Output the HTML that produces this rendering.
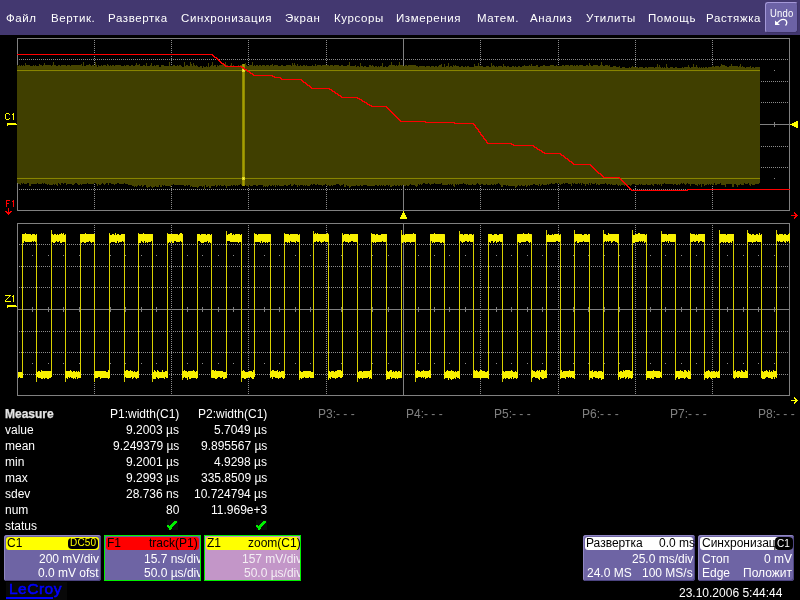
<!DOCTYPE html>
<html><head><meta charset="utf-8"><style>
html,body{margin:0;padding:0;background:#000;width:800px;height:600px;overflow:hidden;font-family:"Liberation Sans",sans-serif;}
.a{position:absolute;white-space:pre;line-height:1;will-change:transform}
#menu{position:absolute;left:0;top:0;width:800px;height:35px;background:#433870;}
.m{will-change:transform;position:absolute;top:13px;color:#fff;font-size:11.5px;letter-spacing:0.6px;white-space:pre;line-height:1}
#undo{position:absolute;left:765px;top:2px;width:31px;height:29px;border-radius:3px;background:#6c62a6;border-left:1px solid #a498d8;border-top:1px solid #a498d8;border-right:1px solid #3c3266;border-bottom:1px solid #3c3266;}
svg{position:absolute;left:0;top:0;}
.t{will-change:transform;position:absolute;font-size:12px;color:#fff;white-space:pre;line-height:1}
.r{text-align:right}
.g{color:#808080}
.box{position:absolute;top:535px;height:46px;border-radius:3px;background:#6e64a4;overflow:hidden;box-shadow:inset 1px 1px 0 #8f86c2,inset -1px -1px 0 #4c4480}
.box.sq{border-radius:0;}
.gb{position:absolute;left:0;top:0;right:0;bottom:0;box-shadow:inset 0 0 0 1px #00f000}
.hd{position:absolute;top:2px;height:13px;border-radius:3px;}
.badge{position:absolute;top:3px;height:11px;border-radius:4px;}
</style></head><body>
<div id="menu">
<span class="m" style="left:6px">Файл</span>
<span class="m" style="left:51px">Вертик.</span>
<span class="m" style="left:108px">Развертка</span>
<span class="m" style="left:181px">Синхронизация</span>
<span class="m" style="left:285px">Экран</span>
<span class="m" style="left:334px">Курсоры</span>
<span class="m" style="left:396px">Измерения</span>
<span class="m" style="left:477px">Матем.</span>
<span class="m" style="left:530px">Анализ</span>
<span class="m" style="left:586px">Утилиты</span>
<span class="m" style="left:648px">Помощь</span>
<span class="m" style="left:706px">Растяжка</span>
<div id="undo"></div><div class="a" style="left:770px;top:7.6px;font-size:9.5px;color:#fff;letter-spacing:0.2px;transform:scaleY(1.14);transform-origin:0 0">Undo</div>
<svg width="800" height="40" style="position:absolute;left:0;top:0"><path d="M775 25L775 20.5L780 25Z" fill="#fff"/><path d="M776.5 23.5L780 20.5Q783 18.5 785.5 20Q788 22.5 785.5 25.5" stroke="#fff" stroke-width="1.3" fill="none"/></svg>
</div>
<svg width="800" height="600" viewBox="0 0 800 600" shape-rendering="crispEdges">
<path d="M19 59h1v1h-1zM21 59h1v1h-1zM23 59h1v1h-1zM25 59h1v1h-1zM27 59h1v1h-1zM29 59h1v1h-1zM31 59h1v1h-1zM33 59h1v1h-1zM35 59h1v1h-1zM37 59h1v1h-1zM39 59h1v1h-1zM41 59h1v1h-1zM43 59h1v1h-1zM45 59h1v1h-1zM47 59h1v1h-1zM49 59h1v1h-1zM51 59h1v1h-1zM53 59h1v1h-1zM55 59h1v1h-1zM57 59h1v1h-1zM59 59h1v1h-1zM61 59h1v1h-1zM63 59h1v1h-1zM65 59h1v1h-1zM67 59h1v1h-1zM69 59h1v1h-1zM71 59h1v1h-1zM73 59h1v1h-1zM75 59h1v1h-1zM77 59h1v1h-1zM79 59h1v1h-1zM81 59h1v1h-1zM83 59h1v1h-1zM85 59h1v1h-1zM87 59h1v1h-1zM89 59h1v1h-1zM91 59h1v1h-1zM93 59h1v1h-1zM95 59h1v1h-1zM97 59h1v1h-1zM99 59h1v1h-1zM101 59h1v1h-1zM103 59h1v1h-1zM105 59h1v1h-1zM107 59h1v1h-1zM109 59h1v1h-1zM111 59h1v1h-1zM113 59h1v1h-1zM115 59h1v1h-1zM117 59h1v1h-1zM119 59h1v1h-1zM121 59h1v1h-1zM123 59h1v1h-1zM125 59h1v1h-1zM127 59h1v1h-1zM129 59h1v1h-1zM131 59h1v1h-1zM133 59h1v1h-1zM135 59h1v1h-1zM137 59h1v1h-1zM139 59h1v1h-1zM141 59h1v1h-1zM143 59h1v1h-1zM145 59h1v1h-1zM147 59h1v1h-1zM149 59h1v1h-1zM151 59h1v1h-1zM153 59h1v1h-1zM155 59h1v1h-1zM157 59h1v1h-1zM159 59h1v1h-1zM161 59h1v1h-1zM163 59h1v1h-1zM165 59h1v1h-1zM167 59h1v1h-1zM169 59h1v1h-1zM171 59h1v1h-1zM173 59h1v1h-1zM175 59h1v1h-1zM177 59h1v1h-1zM179 59h1v1h-1zM181 59h1v1h-1zM183 59h1v1h-1zM185 59h1v1h-1zM187 59h1v1h-1zM189 59h1v1h-1zM191 59h1v1h-1zM193 59h1v1h-1zM195 59h1v1h-1zM197 59h1v1h-1zM199 59h1v1h-1zM201 59h1v1h-1zM203 59h1v1h-1zM205 59h1v1h-1zM207 59h1v1h-1zM209 59h1v1h-1zM211 59h1v1h-1zM213 59h1v1h-1zM215 59h1v1h-1zM217 59h1v1h-1zM219 59h1v1h-1zM221 59h1v1h-1zM223 59h1v1h-1zM225 59h1v1h-1zM227 59h1v1h-1zM229 59h1v1h-1zM231 59h1v1h-1zM233 59h1v1h-1zM235 59h1v1h-1zM237 59h1v1h-1zM239 59h1v1h-1zM241 59h1v1h-1zM243 59h1v1h-1zM245 59h1v1h-1zM247 59h1v1h-1zM249 59h1v1h-1zM251 59h1v1h-1zM253 59h1v1h-1zM255 59h1v1h-1zM257 59h1v1h-1zM259 59h1v1h-1zM261 59h1v1h-1zM263 59h1v1h-1zM265 59h1v1h-1zM267 59h1v1h-1zM269 59h1v1h-1zM271 59h1v1h-1zM273 59h1v1h-1zM275 59h1v1h-1zM277 59h1v1h-1zM279 59h1v1h-1zM281 59h1v1h-1zM283 59h1v1h-1zM285 59h1v1h-1zM287 59h1v1h-1zM289 59h1v1h-1zM291 59h1v1h-1zM293 59h1v1h-1zM295 59h1v1h-1zM297 59h1v1h-1zM299 59h1v1h-1zM301 59h1v1h-1zM303 59h1v1h-1zM305 59h1v1h-1zM307 59h1v1h-1zM309 59h1v1h-1zM311 59h1v1h-1zM313 59h1v1h-1zM315 59h1v1h-1zM317 59h1v1h-1zM319 59h1v1h-1zM321 59h1v1h-1zM323 59h1v1h-1zM325 59h1v1h-1zM327 59h1v1h-1zM329 59h1v1h-1zM331 59h1v1h-1zM333 59h1v1h-1zM335 59h1v1h-1zM337 59h1v1h-1zM339 59h1v1h-1zM341 59h1v1h-1zM343 59h1v1h-1zM345 59h1v1h-1zM347 59h1v1h-1zM349 59h1v1h-1zM351 59h1v1h-1zM353 59h1v1h-1zM355 59h1v1h-1zM357 59h1v1h-1zM359 59h1v1h-1zM361 59h1v1h-1zM363 59h1v1h-1zM365 59h1v1h-1zM367 59h1v1h-1zM369 59h1v1h-1zM371 59h1v1h-1zM373 59h1v1h-1zM375 59h1v1h-1zM377 59h1v1h-1zM379 59h1v1h-1zM381 59h1v1h-1zM383 59h1v1h-1zM385 59h1v1h-1zM387 59h1v1h-1zM389 59h1v1h-1zM391 59h1v1h-1zM393 59h1v1h-1zM395 59h1v1h-1zM397 59h1v1h-1zM399 59h1v1h-1zM401 59h1v1h-1zM403 59h1v1h-1zM405 59h1v1h-1zM407 59h1v1h-1zM409 59h1v1h-1zM411 59h1v1h-1zM413 59h1v1h-1zM415 59h1v1h-1zM417 59h1v1h-1zM419 59h1v1h-1zM421 59h1v1h-1zM423 59h1v1h-1zM425 59h1v1h-1zM427 59h1v1h-1zM429 59h1v1h-1zM431 59h1v1h-1zM433 59h1v1h-1zM435 59h1v1h-1zM437 59h1v1h-1zM439 59h1v1h-1zM441 59h1v1h-1zM443 59h1v1h-1zM445 59h1v1h-1zM447 59h1v1h-1zM449 59h1v1h-1zM451 59h1v1h-1zM453 59h1v1h-1zM455 59h1v1h-1zM457 59h1v1h-1zM459 59h1v1h-1zM461 59h1v1h-1zM463 59h1v1h-1zM465 59h1v1h-1zM467 59h1v1h-1zM469 59h1v1h-1zM471 59h1v1h-1zM473 59h1v1h-1zM475 59h1v1h-1zM477 59h1v1h-1zM479 59h1v1h-1zM481 59h1v1h-1zM483 59h1v1h-1zM485 59h1v1h-1zM487 59h1v1h-1zM489 59h1v1h-1zM491 59h1v1h-1zM493 59h1v1h-1zM495 59h1v1h-1zM497 59h1v1h-1zM499 59h1v1h-1zM501 59h1v1h-1zM503 59h1v1h-1zM505 59h1v1h-1zM507 59h1v1h-1zM509 59h1v1h-1zM511 59h1v1h-1zM513 59h1v1h-1zM515 59h1v1h-1zM517 59h1v1h-1zM519 59h1v1h-1zM521 59h1v1h-1zM523 59h1v1h-1zM525 59h1v1h-1zM527 59h1v1h-1zM529 59h1v1h-1zM531 59h1v1h-1zM533 59h1v1h-1zM535 59h1v1h-1zM537 59h1v1h-1zM539 59h1v1h-1zM541 59h1v1h-1zM543 59h1v1h-1zM545 59h1v1h-1zM547 59h1v1h-1zM549 59h1v1h-1zM551 59h1v1h-1zM553 59h1v1h-1zM555 59h1v1h-1zM557 59h1v1h-1zM559 59h1v1h-1zM561 59h1v1h-1zM563 59h1v1h-1zM565 59h1v1h-1zM567 59h1v1h-1zM569 59h1v1h-1zM571 59h1v1h-1zM573 59h1v1h-1zM575 59h1v1h-1zM577 59h1v1h-1zM579 59h1v1h-1zM581 59h1v1h-1zM583 59h1v1h-1zM585 59h1v1h-1zM587 59h1v1h-1zM589 59h1v1h-1zM591 59h1v1h-1zM593 59h1v1h-1zM595 59h1v1h-1zM597 59h1v1h-1zM599 59h1v1h-1zM601 59h1v1h-1zM603 59h1v1h-1zM605 59h1v1h-1zM607 59h1v1h-1zM609 59h1v1h-1zM611 59h1v1h-1zM613 59h1v1h-1zM615 59h1v1h-1zM617 59h1v1h-1zM619 59h1v1h-1zM621 59h1v1h-1zM623 59h1v1h-1zM625 59h1v1h-1zM627 59h1v1h-1zM629 59h1v1h-1zM631 59h1v1h-1zM633 59h1v1h-1zM635 59h1v1h-1zM637 59h1v1h-1zM639 59h1v1h-1zM641 59h1v1h-1zM643 59h1v1h-1zM645 59h1v1h-1zM647 59h1v1h-1zM649 59h1v1h-1zM651 59h1v1h-1zM653 59h1v1h-1zM655 59h1v1h-1zM657 59h1v1h-1zM659 59h1v1h-1zM661 59h1v1h-1zM663 59h1v1h-1zM665 59h1v1h-1zM667 59h1v1h-1zM669 59h1v1h-1zM671 59h1v1h-1zM673 59h1v1h-1zM675 59h1v1h-1zM677 59h1v1h-1zM679 59h1v1h-1zM681 59h1v1h-1zM683 59h1v1h-1zM685 59h1v1h-1zM687 59h1v1h-1zM689 59h1v1h-1zM691 59h1v1h-1zM693 59h1v1h-1zM695 59h1v1h-1zM697 59h1v1h-1zM699 59h1v1h-1zM701 59h1v1h-1zM703 59h1v1h-1zM705 59h1v1h-1zM707 59h1v1h-1zM709 59h1v1h-1zM711 59h1v1h-1zM713 59h1v1h-1zM715 59h1v1h-1zM717 59h1v1h-1zM719 59h1v1h-1zM721 59h1v1h-1zM723 59h1v1h-1zM725 59h1v1h-1zM727 59h1v1h-1zM729 59h1v1h-1zM731 59h1v1h-1zM733 59h1v1h-1zM735 59h1v1h-1zM737 59h1v1h-1zM739 59h1v1h-1zM741 59h1v1h-1zM743 59h1v1h-1zM745 59h1v1h-1zM747 59h1v1h-1zM749 59h1v1h-1zM751 59h1v1h-1zM753 59h1v1h-1zM755 59h1v1h-1zM757 59h1v1h-1zM759 59h1v1h-1zM761 59h1v1h-1zM763 59h1v1h-1zM765 59h1v1h-1zM767 59h1v1h-1zM769 59h1v1h-1zM771 59h1v1h-1zM773 59h1v1h-1zM775 59h1v1h-1zM777 59h1v1h-1zM779 59h1v1h-1zM781 59h1v1h-1zM783 59h1v1h-1zM785 59h1v1h-1zM787 59h1v1h-1zM19 81h1v1h-1zM21 81h1v1h-1zM23 81h1v1h-1zM25 81h1v1h-1zM27 81h1v1h-1zM29 81h1v1h-1zM31 81h1v1h-1zM33 81h1v1h-1zM35 81h1v1h-1zM37 81h1v1h-1zM39 81h1v1h-1zM41 81h1v1h-1zM43 81h1v1h-1zM45 81h1v1h-1zM47 81h1v1h-1zM49 81h1v1h-1zM51 81h1v1h-1zM53 81h1v1h-1zM55 81h1v1h-1zM57 81h1v1h-1zM59 81h1v1h-1zM61 81h1v1h-1zM63 81h1v1h-1zM65 81h1v1h-1zM67 81h1v1h-1zM69 81h1v1h-1zM71 81h1v1h-1zM73 81h1v1h-1zM75 81h1v1h-1zM77 81h1v1h-1zM79 81h1v1h-1zM81 81h1v1h-1zM83 81h1v1h-1zM85 81h1v1h-1zM87 81h1v1h-1zM89 81h1v1h-1zM91 81h1v1h-1zM93 81h1v1h-1zM95 81h1v1h-1zM97 81h1v1h-1zM99 81h1v1h-1zM101 81h1v1h-1zM103 81h1v1h-1zM105 81h1v1h-1zM107 81h1v1h-1zM109 81h1v1h-1zM111 81h1v1h-1zM113 81h1v1h-1zM115 81h1v1h-1zM117 81h1v1h-1zM119 81h1v1h-1zM121 81h1v1h-1zM123 81h1v1h-1zM125 81h1v1h-1zM127 81h1v1h-1zM129 81h1v1h-1zM131 81h1v1h-1zM133 81h1v1h-1zM135 81h1v1h-1zM137 81h1v1h-1zM139 81h1v1h-1zM141 81h1v1h-1zM143 81h1v1h-1zM145 81h1v1h-1zM147 81h1v1h-1zM149 81h1v1h-1zM151 81h1v1h-1zM153 81h1v1h-1zM155 81h1v1h-1zM157 81h1v1h-1zM159 81h1v1h-1zM161 81h1v1h-1zM163 81h1v1h-1zM165 81h1v1h-1zM167 81h1v1h-1zM169 81h1v1h-1zM171 81h1v1h-1zM173 81h1v1h-1zM175 81h1v1h-1zM177 81h1v1h-1zM179 81h1v1h-1zM181 81h1v1h-1zM183 81h1v1h-1zM185 81h1v1h-1zM187 81h1v1h-1zM189 81h1v1h-1zM191 81h1v1h-1zM193 81h1v1h-1zM195 81h1v1h-1zM197 81h1v1h-1zM199 81h1v1h-1zM201 81h1v1h-1zM203 81h1v1h-1zM205 81h1v1h-1zM207 81h1v1h-1zM209 81h1v1h-1zM211 81h1v1h-1zM213 81h1v1h-1zM215 81h1v1h-1zM217 81h1v1h-1zM219 81h1v1h-1zM221 81h1v1h-1zM223 81h1v1h-1zM225 81h1v1h-1zM227 81h1v1h-1zM229 81h1v1h-1zM231 81h1v1h-1zM233 81h1v1h-1zM235 81h1v1h-1zM237 81h1v1h-1zM239 81h1v1h-1zM241 81h1v1h-1zM243 81h1v1h-1zM245 81h1v1h-1zM247 81h1v1h-1zM249 81h1v1h-1zM251 81h1v1h-1zM253 81h1v1h-1zM255 81h1v1h-1zM257 81h1v1h-1zM259 81h1v1h-1zM261 81h1v1h-1zM263 81h1v1h-1zM265 81h1v1h-1zM267 81h1v1h-1zM269 81h1v1h-1zM271 81h1v1h-1zM273 81h1v1h-1zM275 81h1v1h-1zM277 81h1v1h-1zM279 81h1v1h-1zM281 81h1v1h-1zM283 81h1v1h-1zM285 81h1v1h-1zM287 81h1v1h-1zM289 81h1v1h-1zM291 81h1v1h-1zM293 81h1v1h-1zM295 81h1v1h-1zM297 81h1v1h-1zM299 81h1v1h-1zM301 81h1v1h-1zM303 81h1v1h-1zM305 81h1v1h-1zM307 81h1v1h-1zM309 81h1v1h-1zM311 81h1v1h-1zM313 81h1v1h-1zM315 81h1v1h-1zM317 81h1v1h-1zM319 81h1v1h-1zM321 81h1v1h-1zM323 81h1v1h-1zM325 81h1v1h-1zM327 81h1v1h-1zM329 81h1v1h-1zM331 81h1v1h-1zM333 81h1v1h-1zM335 81h1v1h-1zM337 81h1v1h-1zM339 81h1v1h-1zM341 81h1v1h-1zM343 81h1v1h-1zM345 81h1v1h-1zM347 81h1v1h-1zM349 81h1v1h-1zM351 81h1v1h-1zM353 81h1v1h-1zM355 81h1v1h-1zM357 81h1v1h-1zM359 81h1v1h-1zM361 81h1v1h-1zM363 81h1v1h-1zM365 81h1v1h-1zM367 81h1v1h-1zM369 81h1v1h-1zM371 81h1v1h-1zM373 81h1v1h-1zM375 81h1v1h-1zM377 81h1v1h-1zM379 81h1v1h-1zM381 81h1v1h-1zM383 81h1v1h-1zM385 81h1v1h-1zM387 81h1v1h-1zM389 81h1v1h-1zM391 81h1v1h-1zM393 81h1v1h-1zM395 81h1v1h-1zM397 81h1v1h-1zM399 81h1v1h-1zM401 81h1v1h-1zM403 81h1v1h-1zM405 81h1v1h-1zM407 81h1v1h-1zM409 81h1v1h-1zM411 81h1v1h-1zM413 81h1v1h-1zM415 81h1v1h-1zM417 81h1v1h-1zM419 81h1v1h-1zM421 81h1v1h-1zM423 81h1v1h-1zM425 81h1v1h-1zM427 81h1v1h-1zM429 81h1v1h-1zM431 81h1v1h-1zM433 81h1v1h-1zM435 81h1v1h-1zM437 81h1v1h-1zM439 81h1v1h-1zM441 81h1v1h-1zM443 81h1v1h-1zM445 81h1v1h-1zM447 81h1v1h-1zM449 81h1v1h-1zM451 81h1v1h-1zM453 81h1v1h-1zM455 81h1v1h-1zM457 81h1v1h-1zM459 81h1v1h-1zM461 81h1v1h-1zM463 81h1v1h-1zM465 81h1v1h-1zM467 81h1v1h-1zM469 81h1v1h-1zM471 81h1v1h-1zM473 81h1v1h-1zM475 81h1v1h-1zM477 81h1v1h-1zM479 81h1v1h-1zM481 81h1v1h-1zM483 81h1v1h-1zM485 81h1v1h-1zM487 81h1v1h-1zM489 81h1v1h-1zM491 81h1v1h-1zM493 81h1v1h-1zM495 81h1v1h-1zM497 81h1v1h-1zM499 81h1v1h-1zM501 81h1v1h-1zM503 81h1v1h-1zM505 81h1v1h-1zM507 81h1v1h-1zM509 81h1v1h-1zM511 81h1v1h-1zM513 81h1v1h-1zM515 81h1v1h-1zM517 81h1v1h-1zM519 81h1v1h-1zM521 81h1v1h-1zM523 81h1v1h-1zM525 81h1v1h-1zM527 81h1v1h-1zM529 81h1v1h-1zM531 81h1v1h-1zM533 81h1v1h-1zM535 81h1v1h-1zM537 81h1v1h-1zM539 81h1v1h-1zM541 81h1v1h-1zM543 81h1v1h-1zM545 81h1v1h-1zM547 81h1v1h-1zM549 81h1v1h-1zM551 81h1v1h-1zM553 81h1v1h-1zM555 81h1v1h-1zM557 81h1v1h-1zM559 81h1v1h-1zM561 81h1v1h-1zM563 81h1v1h-1zM565 81h1v1h-1zM567 81h1v1h-1zM569 81h1v1h-1zM571 81h1v1h-1zM573 81h1v1h-1zM575 81h1v1h-1zM577 81h1v1h-1zM579 81h1v1h-1zM581 81h1v1h-1zM583 81h1v1h-1zM585 81h1v1h-1zM587 81h1v1h-1zM589 81h1v1h-1zM591 81h1v1h-1zM593 81h1v1h-1zM595 81h1v1h-1zM597 81h1v1h-1zM599 81h1v1h-1zM601 81h1v1h-1zM603 81h1v1h-1zM605 81h1v1h-1zM607 81h1v1h-1zM609 81h1v1h-1zM611 81h1v1h-1zM613 81h1v1h-1zM615 81h1v1h-1zM617 81h1v1h-1zM619 81h1v1h-1zM621 81h1v1h-1zM623 81h1v1h-1zM625 81h1v1h-1zM627 81h1v1h-1zM629 81h1v1h-1zM631 81h1v1h-1zM633 81h1v1h-1zM635 81h1v1h-1zM637 81h1v1h-1zM639 81h1v1h-1zM641 81h1v1h-1zM643 81h1v1h-1zM645 81h1v1h-1zM647 81h1v1h-1zM649 81h1v1h-1zM651 81h1v1h-1zM653 81h1v1h-1zM655 81h1v1h-1zM657 81h1v1h-1zM659 81h1v1h-1zM661 81h1v1h-1zM663 81h1v1h-1zM665 81h1v1h-1zM667 81h1v1h-1zM669 81h1v1h-1zM671 81h1v1h-1zM673 81h1v1h-1zM675 81h1v1h-1zM677 81h1v1h-1zM679 81h1v1h-1zM681 81h1v1h-1zM683 81h1v1h-1zM685 81h1v1h-1zM687 81h1v1h-1zM689 81h1v1h-1zM691 81h1v1h-1zM693 81h1v1h-1zM695 81h1v1h-1zM697 81h1v1h-1zM699 81h1v1h-1zM701 81h1v1h-1zM703 81h1v1h-1zM705 81h1v1h-1zM707 81h1v1h-1zM709 81h1v1h-1zM711 81h1v1h-1zM713 81h1v1h-1zM715 81h1v1h-1zM717 81h1v1h-1zM719 81h1v1h-1zM721 81h1v1h-1zM723 81h1v1h-1zM725 81h1v1h-1zM727 81h1v1h-1zM729 81h1v1h-1zM731 81h1v1h-1zM733 81h1v1h-1zM735 81h1v1h-1zM737 81h1v1h-1zM739 81h1v1h-1zM741 81h1v1h-1zM743 81h1v1h-1zM745 81h1v1h-1zM747 81h1v1h-1zM749 81h1v1h-1zM751 81h1v1h-1zM753 81h1v1h-1zM755 81h1v1h-1zM757 81h1v1h-1zM759 81h1v1h-1zM761 81h1v1h-1zM763 81h1v1h-1zM765 81h1v1h-1zM767 81h1v1h-1zM769 81h1v1h-1zM771 81h1v1h-1zM773 81h1v1h-1zM775 81h1v1h-1zM777 81h1v1h-1zM779 81h1v1h-1zM781 81h1v1h-1zM783 81h1v1h-1zM785 81h1v1h-1zM787 81h1v1h-1zM19 102h1v1h-1zM21 102h1v1h-1zM23 102h1v1h-1zM25 102h1v1h-1zM27 102h1v1h-1zM29 102h1v1h-1zM31 102h1v1h-1zM33 102h1v1h-1zM35 102h1v1h-1zM37 102h1v1h-1zM39 102h1v1h-1zM41 102h1v1h-1zM43 102h1v1h-1zM45 102h1v1h-1zM47 102h1v1h-1zM49 102h1v1h-1zM51 102h1v1h-1zM53 102h1v1h-1zM55 102h1v1h-1zM57 102h1v1h-1zM59 102h1v1h-1zM61 102h1v1h-1zM63 102h1v1h-1zM65 102h1v1h-1zM67 102h1v1h-1zM69 102h1v1h-1zM71 102h1v1h-1zM73 102h1v1h-1zM75 102h1v1h-1zM77 102h1v1h-1zM79 102h1v1h-1zM81 102h1v1h-1zM83 102h1v1h-1zM85 102h1v1h-1zM87 102h1v1h-1zM89 102h1v1h-1zM91 102h1v1h-1zM93 102h1v1h-1zM95 102h1v1h-1zM97 102h1v1h-1zM99 102h1v1h-1zM101 102h1v1h-1zM103 102h1v1h-1zM105 102h1v1h-1zM107 102h1v1h-1zM109 102h1v1h-1zM111 102h1v1h-1zM113 102h1v1h-1zM115 102h1v1h-1zM117 102h1v1h-1zM119 102h1v1h-1zM121 102h1v1h-1zM123 102h1v1h-1zM125 102h1v1h-1zM127 102h1v1h-1zM129 102h1v1h-1zM131 102h1v1h-1zM133 102h1v1h-1zM135 102h1v1h-1zM137 102h1v1h-1zM139 102h1v1h-1zM141 102h1v1h-1zM143 102h1v1h-1zM145 102h1v1h-1zM147 102h1v1h-1zM149 102h1v1h-1zM151 102h1v1h-1zM153 102h1v1h-1zM155 102h1v1h-1zM157 102h1v1h-1zM159 102h1v1h-1zM161 102h1v1h-1zM163 102h1v1h-1zM165 102h1v1h-1zM167 102h1v1h-1zM169 102h1v1h-1zM171 102h1v1h-1zM173 102h1v1h-1zM175 102h1v1h-1zM177 102h1v1h-1zM179 102h1v1h-1zM181 102h1v1h-1zM183 102h1v1h-1zM185 102h1v1h-1zM187 102h1v1h-1zM189 102h1v1h-1zM191 102h1v1h-1zM193 102h1v1h-1zM195 102h1v1h-1zM197 102h1v1h-1zM199 102h1v1h-1zM201 102h1v1h-1zM203 102h1v1h-1zM205 102h1v1h-1zM207 102h1v1h-1zM209 102h1v1h-1zM211 102h1v1h-1zM213 102h1v1h-1zM215 102h1v1h-1zM217 102h1v1h-1zM219 102h1v1h-1zM221 102h1v1h-1zM223 102h1v1h-1zM225 102h1v1h-1zM227 102h1v1h-1zM229 102h1v1h-1zM231 102h1v1h-1zM233 102h1v1h-1zM235 102h1v1h-1zM237 102h1v1h-1zM239 102h1v1h-1zM241 102h1v1h-1zM243 102h1v1h-1zM245 102h1v1h-1zM247 102h1v1h-1zM249 102h1v1h-1zM251 102h1v1h-1zM253 102h1v1h-1zM255 102h1v1h-1zM257 102h1v1h-1zM259 102h1v1h-1zM261 102h1v1h-1zM263 102h1v1h-1zM265 102h1v1h-1zM267 102h1v1h-1zM269 102h1v1h-1zM271 102h1v1h-1zM273 102h1v1h-1zM275 102h1v1h-1zM277 102h1v1h-1zM279 102h1v1h-1zM281 102h1v1h-1zM283 102h1v1h-1zM285 102h1v1h-1zM287 102h1v1h-1zM289 102h1v1h-1zM291 102h1v1h-1zM293 102h1v1h-1zM295 102h1v1h-1zM297 102h1v1h-1zM299 102h1v1h-1zM301 102h1v1h-1zM303 102h1v1h-1zM305 102h1v1h-1zM307 102h1v1h-1zM309 102h1v1h-1zM311 102h1v1h-1zM313 102h1v1h-1zM315 102h1v1h-1zM317 102h1v1h-1zM319 102h1v1h-1zM321 102h1v1h-1zM323 102h1v1h-1zM325 102h1v1h-1zM327 102h1v1h-1zM329 102h1v1h-1zM331 102h1v1h-1zM333 102h1v1h-1zM335 102h1v1h-1zM337 102h1v1h-1zM339 102h1v1h-1zM341 102h1v1h-1zM343 102h1v1h-1zM345 102h1v1h-1zM347 102h1v1h-1zM349 102h1v1h-1zM351 102h1v1h-1zM353 102h1v1h-1zM355 102h1v1h-1zM357 102h1v1h-1zM359 102h1v1h-1zM361 102h1v1h-1zM363 102h1v1h-1zM365 102h1v1h-1zM367 102h1v1h-1zM369 102h1v1h-1zM371 102h1v1h-1zM373 102h1v1h-1zM375 102h1v1h-1zM377 102h1v1h-1zM379 102h1v1h-1zM381 102h1v1h-1zM383 102h1v1h-1zM385 102h1v1h-1zM387 102h1v1h-1zM389 102h1v1h-1zM391 102h1v1h-1zM393 102h1v1h-1zM395 102h1v1h-1zM397 102h1v1h-1zM399 102h1v1h-1zM401 102h1v1h-1zM403 102h1v1h-1zM405 102h1v1h-1zM407 102h1v1h-1zM409 102h1v1h-1zM411 102h1v1h-1zM413 102h1v1h-1zM415 102h1v1h-1zM417 102h1v1h-1zM419 102h1v1h-1zM421 102h1v1h-1zM423 102h1v1h-1zM425 102h1v1h-1zM427 102h1v1h-1zM429 102h1v1h-1zM431 102h1v1h-1zM433 102h1v1h-1zM435 102h1v1h-1zM437 102h1v1h-1zM439 102h1v1h-1zM441 102h1v1h-1zM443 102h1v1h-1zM445 102h1v1h-1zM447 102h1v1h-1zM449 102h1v1h-1zM451 102h1v1h-1zM453 102h1v1h-1zM455 102h1v1h-1zM457 102h1v1h-1zM459 102h1v1h-1zM461 102h1v1h-1zM463 102h1v1h-1zM465 102h1v1h-1zM467 102h1v1h-1zM469 102h1v1h-1zM471 102h1v1h-1zM473 102h1v1h-1zM475 102h1v1h-1zM477 102h1v1h-1zM479 102h1v1h-1zM481 102h1v1h-1zM483 102h1v1h-1zM485 102h1v1h-1zM487 102h1v1h-1zM489 102h1v1h-1zM491 102h1v1h-1zM493 102h1v1h-1zM495 102h1v1h-1zM497 102h1v1h-1zM499 102h1v1h-1zM501 102h1v1h-1zM503 102h1v1h-1zM505 102h1v1h-1zM507 102h1v1h-1zM509 102h1v1h-1zM511 102h1v1h-1zM513 102h1v1h-1zM515 102h1v1h-1zM517 102h1v1h-1zM519 102h1v1h-1zM521 102h1v1h-1zM523 102h1v1h-1zM525 102h1v1h-1zM527 102h1v1h-1zM529 102h1v1h-1zM531 102h1v1h-1zM533 102h1v1h-1zM535 102h1v1h-1zM537 102h1v1h-1zM539 102h1v1h-1zM541 102h1v1h-1zM543 102h1v1h-1zM545 102h1v1h-1zM547 102h1v1h-1zM549 102h1v1h-1zM551 102h1v1h-1zM553 102h1v1h-1zM555 102h1v1h-1zM557 102h1v1h-1zM559 102h1v1h-1zM561 102h1v1h-1zM563 102h1v1h-1zM565 102h1v1h-1zM567 102h1v1h-1zM569 102h1v1h-1zM571 102h1v1h-1zM573 102h1v1h-1zM575 102h1v1h-1zM577 102h1v1h-1zM579 102h1v1h-1zM581 102h1v1h-1zM583 102h1v1h-1zM585 102h1v1h-1zM587 102h1v1h-1zM589 102h1v1h-1zM591 102h1v1h-1zM593 102h1v1h-1zM595 102h1v1h-1zM597 102h1v1h-1zM599 102h1v1h-1zM601 102h1v1h-1zM603 102h1v1h-1zM605 102h1v1h-1zM607 102h1v1h-1zM609 102h1v1h-1zM611 102h1v1h-1zM613 102h1v1h-1zM615 102h1v1h-1zM617 102h1v1h-1zM619 102h1v1h-1zM621 102h1v1h-1zM623 102h1v1h-1zM625 102h1v1h-1zM627 102h1v1h-1zM629 102h1v1h-1zM631 102h1v1h-1zM633 102h1v1h-1zM635 102h1v1h-1zM637 102h1v1h-1zM639 102h1v1h-1zM641 102h1v1h-1zM643 102h1v1h-1zM645 102h1v1h-1zM647 102h1v1h-1zM649 102h1v1h-1zM651 102h1v1h-1zM653 102h1v1h-1zM655 102h1v1h-1zM657 102h1v1h-1zM659 102h1v1h-1zM661 102h1v1h-1zM663 102h1v1h-1zM665 102h1v1h-1zM667 102h1v1h-1zM669 102h1v1h-1zM671 102h1v1h-1zM673 102h1v1h-1zM675 102h1v1h-1zM677 102h1v1h-1zM679 102h1v1h-1zM681 102h1v1h-1zM683 102h1v1h-1zM685 102h1v1h-1zM687 102h1v1h-1zM689 102h1v1h-1zM691 102h1v1h-1zM693 102h1v1h-1zM695 102h1v1h-1zM697 102h1v1h-1zM699 102h1v1h-1zM701 102h1v1h-1zM703 102h1v1h-1zM705 102h1v1h-1zM707 102h1v1h-1zM709 102h1v1h-1zM711 102h1v1h-1zM713 102h1v1h-1zM715 102h1v1h-1zM717 102h1v1h-1zM719 102h1v1h-1zM721 102h1v1h-1zM723 102h1v1h-1zM725 102h1v1h-1zM727 102h1v1h-1zM729 102h1v1h-1zM731 102h1v1h-1zM733 102h1v1h-1zM735 102h1v1h-1zM737 102h1v1h-1zM739 102h1v1h-1zM741 102h1v1h-1zM743 102h1v1h-1zM745 102h1v1h-1zM747 102h1v1h-1zM749 102h1v1h-1zM751 102h1v1h-1zM753 102h1v1h-1zM755 102h1v1h-1zM757 102h1v1h-1zM759 102h1v1h-1zM761 102h1v1h-1zM763 102h1v1h-1zM765 102h1v1h-1zM767 102h1v1h-1zM769 102h1v1h-1zM771 102h1v1h-1zM773 102h1v1h-1zM775 102h1v1h-1zM777 102h1v1h-1zM779 102h1v1h-1zM781 102h1v1h-1zM783 102h1v1h-1zM785 102h1v1h-1zM787 102h1v1h-1zM19 146h1v1h-1zM21 146h1v1h-1zM23 146h1v1h-1zM25 146h1v1h-1zM27 146h1v1h-1zM29 146h1v1h-1zM31 146h1v1h-1zM33 146h1v1h-1zM35 146h1v1h-1zM37 146h1v1h-1zM39 146h1v1h-1zM41 146h1v1h-1zM43 146h1v1h-1zM45 146h1v1h-1zM47 146h1v1h-1zM49 146h1v1h-1zM51 146h1v1h-1zM53 146h1v1h-1zM55 146h1v1h-1zM57 146h1v1h-1zM59 146h1v1h-1zM61 146h1v1h-1zM63 146h1v1h-1zM65 146h1v1h-1zM67 146h1v1h-1zM69 146h1v1h-1zM71 146h1v1h-1zM73 146h1v1h-1zM75 146h1v1h-1zM77 146h1v1h-1zM79 146h1v1h-1zM81 146h1v1h-1zM83 146h1v1h-1zM85 146h1v1h-1zM87 146h1v1h-1zM89 146h1v1h-1zM91 146h1v1h-1zM93 146h1v1h-1zM95 146h1v1h-1zM97 146h1v1h-1zM99 146h1v1h-1zM101 146h1v1h-1zM103 146h1v1h-1zM105 146h1v1h-1zM107 146h1v1h-1zM109 146h1v1h-1zM111 146h1v1h-1zM113 146h1v1h-1zM115 146h1v1h-1zM117 146h1v1h-1zM119 146h1v1h-1zM121 146h1v1h-1zM123 146h1v1h-1zM125 146h1v1h-1zM127 146h1v1h-1zM129 146h1v1h-1zM131 146h1v1h-1zM133 146h1v1h-1zM135 146h1v1h-1zM137 146h1v1h-1zM139 146h1v1h-1zM141 146h1v1h-1zM143 146h1v1h-1zM145 146h1v1h-1zM147 146h1v1h-1zM149 146h1v1h-1zM151 146h1v1h-1zM153 146h1v1h-1zM155 146h1v1h-1zM157 146h1v1h-1zM159 146h1v1h-1zM161 146h1v1h-1zM163 146h1v1h-1zM165 146h1v1h-1zM167 146h1v1h-1zM169 146h1v1h-1zM171 146h1v1h-1zM173 146h1v1h-1zM175 146h1v1h-1zM177 146h1v1h-1zM179 146h1v1h-1zM181 146h1v1h-1zM183 146h1v1h-1zM185 146h1v1h-1zM187 146h1v1h-1zM189 146h1v1h-1zM191 146h1v1h-1zM193 146h1v1h-1zM195 146h1v1h-1zM197 146h1v1h-1zM199 146h1v1h-1zM201 146h1v1h-1zM203 146h1v1h-1zM205 146h1v1h-1zM207 146h1v1h-1zM209 146h1v1h-1zM211 146h1v1h-1zM213 146h1v1h-1zM215 146h1v1h-1zM217 146h1v1h-1zM219 146h1v1h-1zM221 146h1v1h-1zM223 146h1v1h-1zM225 146h1v1h-1zM227 146h1v1h-1zM229 146h1v1h-1zM231 146h1v1h-1zM233 146h1v1h-1zM235 146h1v1h-1zM237 146h1v1h-1zM239 146h1v1h-1zM241 146h1v1h-1zM243 146h1v1h-1zM245 146h1v1h-1zM247 146h1v1h-1zM249 146h1v1h-1zM251 146h1v1h-1zM253 146h1v1h-1zM255 146h1v1h-1zM257 146h1v1h-1zM259 146h1v1h-1zM261 146h1v1h-1zM263 146h1v1h-1zM265 146h1v1h-1zM267 146h1v1h-1zM269 146h1v1h-1zM271 146h1v1h-1zM273 146h1v1h-1zM275 146h1v1h-1zM277 146h1v1h-1zM279 146h1v1h-1zM281 146h1v1h-1zM283 146h1v1h-1zM285 146h1v1h-1zM287 146h1v1h-1zM289 146h1v1h-1zM291 146h1v1h-1zM293 146h1v1h-1zM295 146h1v1h-1zM297 146h1v1h-1zM299 146h1v1h-1zM301 146h1v1h-1zM303 146h1v1h-1zM305 146h1v1h-1zM307 146h1v1h-1zM309 146h1v1h-1zM311 146h1v1h-1zM313 146h1v1h-1zM315 146h1v1h-1zM317 146h1v1h-1zM319 146h1v1h-1zM321 146h1v1h-1zM323 146h1v1h-1zM325 146h1v1h-1zM327 146h1v1h-1zM329 146h1v1h-1zM331 146h1v1h-1zM333 146h1v1h-1zM335 146h1v1h-1zM337 146h1v1h-1zM339 146h1v1h-1zM341 146h1v1h-1zM343 146h1v1h-1zM345 146h1v1h-1zM347 146h1v1h-1zM349 146h1v1h-1zM351 146h1v1h-1zM353 146h1v1h-1zM355 146h1v1h-1zM357 146h1v1h-1zM359 146h1v1h-1zM361 146h1v1h-1zM363 146h1v1h-1zM365 146h1v1h-1zM367 146h1v1h-1zM369 146h1v1h-1zM371 146h1v1h-1zM373 146h1v1h-1zM375 146h1v1h-1zM377 146h1v1h-1zM379 146h1v1h-1zM381 146h1v1h-1zM383 146h1v1h-1zM385 146h1v1h-1zM387 146h1v1h-1zM389 146h1v1h-1zM391 146h1v1h-1zM393 146h1v1h-1zM395 146h1v1h-1zM397 146h1v1h-1zM399 146h1v1h-1zM401 146h1v1h-1zM403 146h1v1h-1zM405 146h1v1h-1zM407 146h1v1h-1zM409 146h1v1h-1zM411 146h1v1h-1zM413 146h1v1h-1zM415 146h1v1h-1zM417 146h1v1h-1zM419 146h1v1h-1zM421 146h1v1h-1zM423 146h1v1h-1zM425 146h1v1h-1zM427 146h1v1h-1zM429 146h1v1h-1zM431 146h1v1h-1zM433 146h1v1h-1zM435 146h1v1h-1zM437 146h1v1h-1zM439 146h1v1h-1zM441 146h1v1h-1zM443 146h1v1h-1zM445 146h1v1h-1zM447 146h1v1h-1zM449 146h1v1h-1zM451 146h1v1h-1zM453 146h1v1h-1zM455 146h1v1h-1zM457 146h1v1h-1zM459 146h1v1h-1zM461 146h1v1h-1zM463 146h1v1h-1zM465 146h1v1h-1zM467 146h1v1h-1zM469 146h1v1h-1zM471 146h1v1h-1zM473 146h1v1h-1zM475 146h1v1h-1zM477 146h1v1h-1zM479 146h1v1h-1zM481 146h1v1h-1zM483 146h1v1h-1zM485 146h1v1h-1zM487 146h1v1h-1zM489 146h1v1h-1zM491 146h1v1h-1zM493 146h1v1h-1zM495 146h1v1h-1zM497 146h1v1h-1zM499 146h1v1h-1zM501 146h1v1h-1zM503 146h1v1h-1zM505 146h1v1h-1zM507 146h1v1h-1zM509 146h1v1h-1zM511 146h1v1h-1zM513 146h1v1h-1zM515 146h1v1h-1zM517 146h1v1h-1zM519 146h1v1h-1zM521 146h1v1h-1zM523 146h1v1h-1zM525 146h1v1h-1zM527 146h1v1h-1zM529 146h1v1h-1zM531 146h1v1h-1zM533 146h1v1h-1zM535 146h1v1h-1zM537 146h1v1h-1zM539 146h1v1h-1zM541 146h1v1h-1zM543 146h1v1h-1zM545 146h1v1h-1zM547 146h1v1h-1zM549 146h1v1h-1zM551 146h1v1h-1zM553 146h1v1h-1zM555 146h1v1h-1zM557 146h1v1h-1zM559 146h1v1h-1zM561 146h1v1h-1zM563 146h1v1h-1zM565 146h1v1h-1zM567 146h1v1h-1zM569 146h1v1h-1zM571 146h1v1h-1zM573 146h1v1h-1zM575 146h1v1h-1zM577 146h1v1h-1zM579 146h1v1h-1zM581 146h1v1h-1zM583 146h1v1h-1zM585 146h1v1h-1zM587 146h1v1h-1zM589 146h1v1h-1zM591 146h1v1h-1zM593 146h1v1h-1zM595 146h1v1h-1zM597 146h1v1h-1zM599 146h1v1h-1zM601 146h1v1h-1zM603 146h1v1h-1zM605 146h1v1h-1zM607 146h1v1h-1zM609 146h1v1h-1zM611 146h1v1h-1zM613 146h1v1h-1zM615 146h1v1h-1zM617 146h1v1h-1zM619 146h1v1h-1zM621 146h1v1h-1zM623 146h1v1h-1zM625 146h1v1h-1zM627 146h1v1h-1zM629 146h1v1h-1zM631 146h1v1h-1zM633 146h1v1h-1zM635 146h1v1h-1zM637 146h1v1h-1zM639 146h1v1h-1zM641 146h1v1h-1zM643 146h1v1h-1zM645 146h1v1h-1zM647 146h1v1h-1zM649 146h1v1h-1zM651 146h1v1h-1zM653 146h1v1h-1zM655 146h1v1h-1zM657 146h1v1h-1zM659 146h1v1h-1zM661 146h1v1h-1zM663 146h1v1h-1zM665 146h1v1h-1zM667 146h1v1h-1zM669 146h1v1h-1zM671 146h1v1h-1zM673 146h1v1h-1zM675 146h1v1h-1zM677 146h1v1h-1zM679 146h1v1h-1zM681 146h1v1h-1zM683 146h1v1h-1zM685 146h1v1h-1zM687 146h1v1h-1zM689 146h1v1h-1zM691 146h1v1h-1zM693 146h1v1h-1zM695 146h1v1h-1zM697 146h1v1h-1zM699 146h1v1h-1zM701 146h1v1h-1zM703 146h1v1h-1zM705 146h1v1h-1zM707 146h1v1h-1zM709 146h1v1h-1zM711 146h1v1h-1zM713 146h1v1h-1zM715 146h1v1h-1zM717 146h1v1h-1zM719 146h1v1h-1zM721 146h1v1h-1zM723 146h1v1h-1zM725 146h1v1h-1zM727 146h1v1h-1zM729 146h1v1h-1zM731 146h1v1h-1zM733 146h1v1h-1zM735 146h1v1h-1zM737 146h1v1h-1zM739 146h1v1h-1zM741 146h1v1h-1zM743 146h1v1h-1zM745 146h1v1h-1zM747 146h1v1h-1zM749 146h1v1h-1zM751 146h1v1h-1zM753 146h1v1h-1zM755 146h1v1h-1zM757 146h1v1h-1zM759 146h1v1h-1zM761 146h1v1h-1zM763 146h1v1h-1zM765 146h1v1h-1zM767 146h1v1h-1zM769 146h1v1h-1zM771 146h1v1h-1zM773 146h1v1h-1zM775 146h1v1h-1zM777 146h1v1h-1zM779 146h1v1h-1zM781 146h1v1h-1zM783 146h1v1h-1zM785 146h1v1h-1zM787 146h1v1h-1zM19 167h1v1h-1zM21 167h1v1h-1zM23 167h1v1h-1zM25 167h1v1h-1zM27 167h1v1h-1zM29 167h1v1h-1zM31 167h1v1h-1zM33 167h1v1h-1zM35 167h1v1h-1zM37 167h1v1h-1zM39 167h1v1h-1zM41 167h1v1h-1zM43 167h1v1h-1zM45 167h1v1h-1zM47 167h1v1h-1zM49 167h1v1h-1zM51 167h1v1h-1zM53 167h1v1h-1zM55 167h1v1h-1zM57 167h1v1h-1zM59 167h1v1h-1zM61 167h1v1h-1zM63 167h1v1h-1zM65 167h1v1h-1zM67 167h1v1h-1zM69 167h1v1h-1zM71 167h1v1h-1zM73 167h1v1h-1zM75 167h1v1h-1zM77 167h1v1h-1zM79 167h1v1h-1zM81 167h1v1h-1zM83 167h1v1h-1zM85 167h1v1h-1zM87 167h1v1h-1zM89 167h1v1h-1zM91 167h1v1h-1zM93 167h1v1h-1zM95 167h1v1h-1zM97 167h1v1h-1zM99 167h1v1h-1zM101 167h1v1h-1zM103 167h1v1h-1zM105 167h1v1h-1zM107 167h1v1h-1zM109 167h1v1h-1zM111 167h1v1h-1zM113 167h1v1h-1zM115 167h1v1h-1zM117 167h1v1h-1zM119 167h1v1h-1zM121 167h1v1h-1zM123 167h1v1h-1zM125 167h1v1h-1zM127 167h1v1h-1zM129 167h1v1h-1zM131 167h1v1h-1zM133 167h1v1h-1zM135 167h1v1h-1zM137 167h1v1h-1zM139 167h1v1h-1zM141 167h1v1h-1zM143 167h1v1h-1zM145 167h1v1h-1zM147 167h1v1h-1zM149 167h1v1h-1zM151 167h1v1h-1zM153 167h1v1h-1zM155 167h1v1h-1zM157 167h1v1h-1zM159 167h1v1h-1zM161 167h1v1h-1zM163 167h1v1h-1zM165 167h1v1h-1zM167 167h1v1h-1zM169 167h1v1h-1zM171 167h1v1h-1zM173 167h1v1h-1zM175 167h1v1h-1zM177 167h1v1h-1zM179 167h1v1h-1zM181 167h1v1h-1zM183 167h1v1h-1zM185 167h1v1h-1zM187 167h1v1h-1zM189 167h1v1h-1zM191 167h1v1h-1zM193 167h1v1h-1zM195 167h1v1h-1zM197 167h1v1h-1zM199 167h1v1h-1zM201 167h1v1h-1zM203 167h1v1h-1zM205 167h1v1h-1zM207 167h1v1h-1zM209 167h1v1h-1zM211 167h1v1h-1zM213 167h1v1h-1zM215 167h1v1h-1zM217 167h1v1h-1zM219 167h1v1h-1zM221 167h1v1h-1zM223 167h1v1h-1zM225 167h1v1h-1zM227 167h1v1h-1zM229 167h1v1h-1zM231 167h1v1h-1zM233 167h1v1h-1zM235 167h1v1h-1zM237 167h1v1h-1zM239 167h1v1h-1zM241 167h1v1h-1zM243 167h1v1h-1zM245 167h1v1h-1zM247 167h1v1h-1zM249 167h1v1h-1zM251 167h1v1h-1zM253 167h1v1h-1zM255 167h1v1h-1zM257 167h1v1h-1zM259 167h1v1h-1zM261 167h1v1h-1zM263 167h1v1h-1zM265 167h1v1h-1zM267 167h1v1h-1zM269 167h1v1h-1zM271 167h1v1h-1zM273 167h1v1h-1zM275 167h1v1h-1zM277 167h1v1h-1zM279 167h1v1h-1zM281 167h1v1h-1zM283 167h1v1h-1zM285 167h1v1h-1zM287 167h1v1h-1zM289 167h1v1h-1zM291 167h1v1h-1zM293 167h1v1h-1zM295 167h1v1h-1zM297 167h1v1h-1zM299 167h1v1h-1zM301 167h1v1h-1zM303 167h1v1h-1zM305 167h1v1h-1zM307 167h1v1h-1zM309 167h1v1h-1zM311 167h1v1h-1zM313 167h1v1h-1zM315 167h1v1h-1zM317 167h1v1h-1zM319 167h1v1h-1zM321 167h1v1h-1zM323 167h1v1h-1zM325 167h1v1h-1zM327 167h1v1h-1zM329 167h1v1h-1zM331 167h1v1h-1zM333 167h1v1h-1zM335 167h1v1h-1zM337 167h1v1h-1zM339 167h1v1h-1zM341 167h1v1h-1zM343 167h1v1h-1zM345 167h1v1h-1zM347 167h1v1h-1zM349 167h1v1h-1zM351 167h1v1h-1zM353 167h1v1h-1zM355 167h1v1h-1zM357 167h1v1h-1zM359 167h1v1h-1zM361 167h1v1h-1zM363 167h1v1h-1zM365 167h1v1h-1zM367 167h1v1h-1zM369 167h1v1h-1zM371 167h1v1h-1zM373 167h1v1h-1zM375 167h1v1h-1zM377 167h1v1h-1zM379 167h1v1h-1zM381 167h1v1h-1zM383 167h1v1h-1zM385 167h1v1h-1zM387 167h1v1h-1zM389 167h1v1h-1zM391 167h1v1h-1zM393 167h1v1h-1zM395 167h1v1h-1zM397 167h1v1h-1zM399 167h1v1h-1zM401 167h1v1h-1zM403 167h1v1h-1zM405 167h1v1h-1zM407 167h1v1h-1zM409 167h1v1h-1zM411 167h1v1h-1zM413 167h1v1h-1zM415 167h1v1h-1zM417 167h1v1h-1zM419 167h1v1h-1zM421 167h1v1h-1zM423 167h1v1h-1zM425 167h1v1h-1zM427 167h1v1h-1zM429 167h1v1h-1zM431 167h1v1h-1zM433 167h1v1h-1zM435 167h1v1h-1zM437 167h1v1h-1zM439 167h1v1h-1zM441 167h1v1h-1zM443 167h1v1h-1zM445 167h1v1h-1zM447 167h1v1h-1zM449 167h1v1h-1zM451 167h1v1h-1zM453 167h1v1h-1zM455 167h1v1h-1zM457 167h1v1h-1zM459 167h1v1h-1zM461 167h1v1h-1zM463 167h1v1h-1zM465 167h1v1h-1zM467 167h1v1h-1zM469 167h1v1h-1zM471 167h1v1h-1zM473 167h1v1h-1zM475 167h1v1h-1zM477 167h1v1h-1zM479 167h1v1h-1zM481 167h1v1h-1zM483 167h1v1h-1zM485 167h1v1h-1zM487 167h1v1h-1zM489 167h1v1h-1zM491 167h1v1h-1zM493 167h1v1h-1zM495 167h1v1h-1zM497 167h1v1h-1zM499 167h1v1h-1zM501 167h1v1h-1zM503 167h1v1h-1zM505 167h1v1h-1zM507 167h1v1h-1zM509 167h1v1h-1zM511 167h1v1h-1zM513 167h1v1h-1zM515 167h1v1h-1zM517 167h1v1h-1zM519 167h1v1h-1zM521 167h1v1h-1zM523 167h1v1h-1zM525 167h1v1h-1zM527 167h1v1h-1zM529 167h1v1h-1zM531 167h1v1h-1zM533 167h1v1h-1zM535 167h1v1h-1zM537 167h1v1h-1zM539 167h1v1h-1zM541 167h1v1h-1zM543 167h1v1h-1zM545 167h1v1h-1zM547 167h1v1h-1zM549 167h1v1h-1zM551 167h1v1h-1zM553 167h1v1h-1zM555 167h1v1h-1zM557 167h1v1h-1zM559 167h1v1h-1zM561 167h1v1h-1zM563 167h1v1h-1zM565 167h1v1h-1zM567 167h1v1h-1zM569 167h1v1h-1zM571 167h1v1h-1zM573 167h1v1h-1zM575 167h1v1h-1zM577 167h1v1h-1zM579 167h1v1h-1zM581 167h1v1h-1zM583 167h1v1h-1zM585 167h1v1h-1zM587 167h1v1h-1zM589 167h1v1h-1zM591 167h1v1h-1zM593 167h1v1h-1zM595 167h1v1h-1zM597 167h1v1h-1zM599 167h1v1h-1zM601 167h1v1h-1zM603 167h1v1h-1zM605 167h1v1h-1zM607 167h1v1h-1zM609 167h1v1h-1zM611 167h1v1h-1zM613 167h1v1h-1zM615 167h1v1h-1zM617 167h1v1h-1zM619 167h1v1h-1zM621 167h1v1h-1zM623 167h1v1h-1zM625 167h1v1h-1zM627 167h1v1h-1zM629 167h1v1h-1zM631 167h1v1h-1zM633 167h1v1h-1zM635 167h1v1h-1zM637 167h1v1h-1zM639 167h1v1h-1zM641 167h1v1h-1zM643 167h1v1h-1zM645 167h1v1h-1zM647 167h1v1h-1zM649 167h1v1h-1zM651 167h1v1h-1zM653 167h1v1h-1zM655 167h1v1h-1zM657 167h1v1h-1zM659 167h1v1h-1zM661 167h1v1h-1zM663 167h1v1h-1zM665 167h1v1h-1zM667 167h1v1h-1zM669 167h1v1h-1zM671 167h1v1h-1zM673 167h1v1h-1zM675 167h1v1h-1zM677 167h1v1h-1zM679 167h1v1h-1zM681 167h1v1h-1zM683 167h1v1h-1zM685 167h1v1h-1zM687 167h1v1h-1zM689 167h1v1h-1zM691 167h1v1h-1zM693 167h1v1h-1zM695 167h1v1h-1zM697 167h1v1h-1zM699 167h1v1h-1zM701 167h1v1h-1zM703 167h1v1h-1zM705 167h1v1h-1zM707 167h1v1h-1zM709 167h1v1h-1zM711 167h1v1h-1zM713 167h1v1h-1zM715 167h1v1h-1zM717 167h1v1h-1zM719 167h1v1h-1zM721 167h1v1h-1zM723 167h1v1h-1zM725 167h1v1h-1zM727 167h1v1h-1zM729 167h1v1h-1zM731 167h1v1h-1zM733 167h1v1h-1zM735 167h1v1h-1zM737 167h1v1h-1zM739 167h1v1h-1zM741 167h1v1h-1zM743 167h1v1h-1zM745 167h1v1h-1zM747 167h1v1h-1zM749 167h1v1h-1zM751 167h1v1h-1zM753 167h1v1h-1zM755 167h1v1h-1zM757 167h1v1h-1zM759 167h1v1h-1zM761 167h1v1h-1zM763 167h1v1h-1zM765 167h1v1h-1zM767 167h1v1h-1zM769 167h1v1h-1zM771 167h1v1h-1zM773 167h1v1h-1zM775 167h1v1h-1zM777 167h1v1h-1zM779 167h1v1h-1zM781 167h1v1h-1zM783 167h1v1h-1zM785 167h1v1h-1zM787 167h1v1h-1zM19 189h1v1h-1zM21 189h1v1h-1zM23 189h1v1h-1zM25 189h1v1h-1zM27 189h1v1h-1zM29 189h1v1h-1zM31 189h1v1h-1zM33 189h1v1h-1zM35 189h1v1h-1zM37 189h1v1h-1zM39 189h1v1h-1zM41 189h1v1h-1zM43 189h1v1h-1zM45 189h1v1h-1zM47 189h1v1h-1zM49 189h1v1h-1zM51 189h1v1h-1zM53 189h1v1h-1zM55 189h1v1h-1zM57 189h1v1h-1zM59 189h1v1h-1zM61 189h1v1h-1zM63 189h1v1h-1zM65 189h1v1h-1zM67 189h1v1h-1zM69 189h1v1h-1zM71 189h1v1h-1zM73 189h1v1h-1zM75 189h1v1h-1zM77 189h1v1h-1zM79 189h1v1h-1zM81 189h1v1h-1zM83 189h1v1h-1zM85 189h1v1h-1zM87 189h1v1h-1zM89 189h1v1h-1zM91 189h1v1h-1zM93 189h1v1h-1zM95 189h1v1h-1zM97 189h1v1h-1zM99 189h1v1h-1zM101 189h1v1h-1zM103 189h1v1h-1zM105 189h1v1h-1zM107 189h1v1h-1zM109 189h1v1h-1zM111 189h1v1h-1zM113 189h1v1h-1zM115 189h1v1h-1zM117 189h1v1h-1zM119 189h1v1h-1zM121 189h1v1h-1zM123 189h1v1h-1zM125 189h1v1h-1zM127 189h1v1h-1zM129 189h1v1h-1zM131 189h1v1h-1zM133 189h1v1h-1zM135 189h1v1h-1zM137 189h1v1h-1zM139 189h1v1h-1zM141 189h1v1h-1zM143 189h1v1h-1zM145 189h1v1h-1zM147 189h1v1h-1zM149 189h1v1h-1zM151 189h1v1h-1zM153 189h1v1h-1zM155 189h1v1h-1zM157 189h1v1h-1zM159 189h1v1h-1zM161 189h1v1h-1zM163 189h1v1h-1zM165 189h1v1h-1zM167 189h1v1h-1zM169 189h1v1h-1zM171 189h1v1h-1zM173 189h1v1h-1zM175 189h1v1h-1zM177 189h1v1h-1zM179 189h1v1h-1zM181 189h1v1h-1zM183 189h1v1h-1zM185 189h1v1h-1zM187 189h1v1h-1zM189 189h1v1h-1zM191 189h1v1h-1zM193 189h1v1h-1zM195 189h1v1h-1zM197 189h1v1h-1zM199 189h1v1h-1zM201 189h1v1h-1zM203 189h1v1h-1zM205 189h1v1h-1zM207 189h1v1h-1zM209 189h1v1h-1zM211 189h1v1h-1zM213 189h1v1h-1zM215 189h1v1h-1zM217 189h1v1h-1zM219 189h1v1h-1zM221 189h1v1h-1zM223 189h1v1h-1zM225 189h1v1h-1zM227 189h1v1h-1zM229 189h1v1h-1zM231 189h1v1h-1zM233 189h1v1h-1zM235 189h1v1h-1zM237 189h1v1h-1zM239 189h1v1h-1zM241 189h1v1h-1zM243 189h1v1h-1zM245 189h1v1h-1zM247 189h1v1h-1zM249 189h1v1h-1zM251 189h1v1h-1zM253 189h1v1h-1zM255 189h1v1h-1zM257 189h1v1h-1zM259 189h1v1h-1zM261 189h1v1h-1zM263 189h1v1h-1zM265 189h1v1h-1zM267 189h1v1h-1zM269 189h1v1h-1zM271 189h1v1h-1zM273 189h1v1h-1zM275 189h1v1h-1zM277 189h1v1h-1zM279 189h1v1h-1zM281 189h1v1h-1zM283 189h1v1h-1zM285 189h1v1h-1zM287 189h1v1h-1zM289 189h1v1h-1zM291 189h1v1h-1zM293 189h1v1h-1zM295 189h1v1h-1zM297 189h1v1h-1zM299 189h1v1h-1zM301 189h1v1h-1zM303 189h1v1h-1zM305 189h1v1h-1zM307 189h1v1h-1zM309 189h1v1h-1zM311 189h1v1h-1zM313 189h1v1h-1zM315 189h1v1h-1zM317 189h1v1h-1zM319 189h1v1h-1zM321 189h1v1h-1zM323 189h1v1h-1zM325 189h1v1h-1zM327 189h1v1h-1zM329 189h1v1h-1zM331 189h1v1h-1zM333 189h1v1h-1zM335 189h1v1h-1zM337 189h1v1h-1zM339 189h1v1h-1zM341 189h1v1h-1zM343 189h1v1h-1zM345 189h1v1h-1zM347 189h1v1h-1zM349 189h1v1h-1zM351 189h1v1h-1zM353 189h1v1h-1zM355 189h1v1h-1zM357 189h1v1h-1zM359 189h1v1h-1zM361 189h1v1h-1zM363 189h1v1h-1zM365 189h1v1h-1zM367 189h1v1h-1zM369 189h1v1h-1zM371 189h1v1h-1zM373 189h1v1h-1zM375 189h1v1h-1zM377 189h1v1h-1zM379 189h1v1h-1zM381 189h1v1h-1zM383 189h1v1h-1zM385 189h1v1h-1zM387 189h1v1h-1zM389 189h1v1h-1zM391 189h1v1h-1zM393 189h1v1h-1zM395 189h1v1h-1zM397 189h1v1h-1zM399 189h1v1h-1zM401 189h1v1h-1zM403 189h1v1h-1zM405 189h1v1h-1zM407 189h1v1h-1zM409 189h1v1h-1zM411 189h1v1h-1zM413 189h1v1h-1zM415 189h1v1h-1zM417 189h1v1h-1zM419 189h1v1h-1zM421 189h1v1h-1zM423 189h1v1h-1zM425 189h1v1h-1zM427 189h1v1h-1zM429 189h1v1h-1zM431 189h1v1h-1zM433 189h1v1h-1zM435 189h1v1h-1zM437 189h1v1h-1zM439 189h1v1h-1zM441 189h1v1h-1zM443 189h1v1h-1zM445 189h1v1h-1zM447 189h1v1h-1zM449 189h1v1h-1zM451 189h1v1h-1zM453 189h1v1h-1zM455 189h1v1h-1zM457 189h1v1h-1zM459 189h1v1h-1zM461 189h1v1h-1zM463 189h1v1h-1zM465 189h1v1h-1zM467 189h1v1h-1zM469 189h1v1h-1zM471 189h1v1h-1zM473 189h1v1h-1zM475 189h1v1h-1zM477 189h1v1h-1zM479 189h1v1h-1zM481 189h1v1h-1zM483 189h1v1h-1zM485 189h1v1h-1zM487 189h1v1h-1zM489 189h1v1h-1zM491 189h1v1h-1zM493 189h1v1h-1zM495 189h1v1h-1zM497 189h1v1h-1zM499 189h1v1h-1zM501 189h1v1h-1zM503 189h1v1h-1zM505 189h1v1h-1zM507 189h1v1h-1zM509 189h1v1h-1zM511 189h1v1h-1zM513 189h1v1h-1zM515 189h1v1h-1zM517 189h1v1h-1zM519 189h1v1h-1zM521 189h1v1h-1zM523 189h1v1h-1zM525 189h1v1h-1zM527 189h1v1h-1zM529 189h1v1h-1zM531 189h1v1h-1zM533 189h1v1h-1zM535 189h1v1h-1zM537 189h1v1h-1zM539 189h1v1h-1zM541 189h1v1h-1zM543 189h1v1h-1zM545 189h1v1h-1zM547 189h1v1h-1zM549 189h1v1h-1zM551 189h1v1h-1zM553 189h1v1h-1zM555 189h1v1h-1zM557 189h1v1h-1zM559 189h1v1h-1zM561 189h1v1h-1zM563 189h1v1h-1zM565 189h1v1h-1zM567 189h1v1h-1zM569 189h1v1h-1zM571 189h1v1h-1zM573 189h1v1h-1zM575 189h1v1h-1zM577 189h1v1h-1zM579 189h1v1h-1zM581 189h1v1h-1zM583 189h1v1h-1zM585 189h1v1h-1zM587 189h1v1h-1zM589 189h1v1h-1zM591 189h1v1h-1zM593 189h1v1h-1zM595 189h1v1h-1zM597 189h1v1h-1zM599 189h1v1h-1zM601 189h1v1h-1zM603 189h1v1h-1zM605 189h1v1h-1zM607 189h1v1h-1zM609 189h1v1h-1zM611 189h1v1h-1zM613 189h1v1h-1zM615 189h1v1h-1zM617 189h1v1h-1zM619 189h1v1h-1zM621 189h1v1h-1zM623 189h1v1h-1zM625 189h1v1h-1zM627 189h1v1h-1zM629 189h1v1h-1zM631 189h1v1h-1zM633 189h1v1h-1zM635 189h1v1h-1zM637 189h1v1h-1zM639 189h1v1h-1zM641 189h1v1h-1zM643 189h1v1h-1zM645 189h1v1h-1zM647 189h1v1h-1zM649 189h1v1h-1zM651 189h1v1h-1zM653 189h1v1h-1zM655 189h1v1h-1zM657 189h1v1h-1zM659 189h1v1h-1zM661 189h1v1h-1zM663 189h1v1h-1zM665 189h1v1h-1zM667 189h1v1h-1zM669 189h1v1h-1zM671 189h1v1h-1zM673 189h1v1h-1zM675 189h1v1h-1zM677 189h1v1h-1zM679 189h1v1h-1zM681 189h1v1h-1zM683 189h1v1h-1zM685 189h1v1h-1zM687 189h1v1h-1zM689 189h1v1h-1zM691 189h1v1h-1zM693 189h1v1h-1zM695 189h1v1h-1zM697 189h1v1h-1zM699 189h1v1h-1zM701 189h1v1h-1zM703 189h1v1h-1zM705 189h1v1h-1zM707 189h1v1h-1zM709 189h1v1h-1zM711 189h1v1h-1zM713 189h1v1h-1zM715 189h1v1h-1zM717 189h1v1h-1zM719 189h1v1h-1zM721 189h1v1h-1zM723 189h1v1h-1zM725 189h1v1h-1zM727 189h1v1h-1zM729 189h1v1h-1zM731 189h1v1h-1zM733 189h1v1h-1zM735 189h1v1h-1zM737 189h1v1h-1zM739 189h1v1h-1zM741 189h1v1h-1zM743 189h1v1h-1zM745 189h1v1h-1zM747 189h1v1h-1zM749 189h1v1h-1zM751 189h1v1h-1zM753 189h1v1h-1zM755 189h1v1h-1zM757 189h1v1h-1zM759 189h1v1h-1zM761 189h1v1h-1zM763 189h1v1h-1zM765 189h1v1h-1zM767 189h1v1h-1zM769 189h1v1h-1zM771 189h1v1h-1zM773 189h1v1h-1zM775 189h1v1h-1zM777 189h1v1h-1zM779 189h1v1h-1zM781 189h1v1h-1zM783 189h1v1h-1zM785 189h1v1h-1zM787 189h1v1h-1zM94 40h1v1h-1zM94 42h1v1h-1zM94 44h1v1h-1zM94 46h1v1h-1zM94 48h1v1h-1zM94 50h1v1h-1zM94 52h1v1h-1zM94 54h1v1h-1zM94 56h1v1h-1zM94 58h1v1h-1zM94 60h1v1h-1zM94 62h1v1h-1zM94 64h1v1h-1zM94 66h1v1h-1zM94 68h1v1h-1zM94 70h1v1h-1zM94 72h1v1h-1zM94 74h1v1h-1zM94 76h1v1h-1zM94 78h1v1h-1zM94 80h1v1h-1zM94 82h1v1h-1zM94 84h1v1h-1zM94 86h1v1h-1zM94 88h1v1h-1zM94 90h1v1h-1zM94 92h1v1h-1zM94 94h1v1h-1zM94 96h1v1h-1zM94 98h1v1h-1zM94 100h1v1h-1zM94 102h1v1h-1zM94 104h1v1h-1zM94 106h1v1h-1zM94 108h1v1h-1zM94 110h1v1h-1zM94 112h1v1h-1zM94 114h1v1h-1zM94 116h1v1h-1zM94 118h1v1h-1zM94 120h1v1h-1zM94 122h1v1h-1zM94 124h1v1h-1zM94 126h1v1h-1zM94 128h1v1h-1zM94 130h1v1h-1zM94 132h1v1h-1zM94 134h1v1h-1zM94 136h1v1h-1zM94 138h1v1h-1zM94 140h1v1h-1zM94 142h1v1h-1zM94 144h1v1h-1zM94 146h1v1h-1zM94 148h1v1h-1zM94 150h1v1h-1zM94 152h1v1h-1zM94 154h1v1h-1zM94 156h1v1h-1zM94 158h1v1h-1zM94 160h1v1h-1zM94 162h1v1h-1zM94 164h1v1h-1zM94 166h1v1h-1zM94 168h1v1h-1zM94 170h1v1h-1zM94 172h1v1h-1zM94 174h1v1h-1zM94 176h1v1h-1zM94 178h1v1h-1zM94 180h1v1h-1zM94 182h1v1h-1zM94 184h1v1h-1zM94 186h1v1h-1zM94 188h1v1h-1zM94 190h1v1h-1zM94 192h1v1h-1zM94 194h1v1h-1zM94 196h1v1h-1zM94 198h1v1h-1zM94 200h1v1h-1zM94 202h1v1h-1zM94 204h1v1h-1zM94 206h1v1h-1zM94 208h1v1h-1zM171 40h1v1h-1zM171 42h1v1h-1zM171 44h1v1h-1zM171 46h1v1h-1zM171 48h1v1h-1zM171 50h1v1h-1zM171 52h1v1h-1zM171 54h1v1h-1zM171 56h1v1h-1zM171 58h1v1h-1zM171 60h1v1h-1zM171 62h1v1h-1zM171 64h1v1h-1zM171 66h1v1h-1zM171 68h1v1h-1zM171 70h1v1h-1zM171 72h1v1h-1zM171 74h1v1h-1zM171 76h1v1h-1zM171 78h1v1h-1zM171 80h1v1h-1zM171 82h1v1h-1zM171 84h1v1h-1zM171 86h1v1h-1zM171 88h1v1h-1zM171 90h1v1h-1zM171 92h1v1h-1zM171 94h1v1h-1zM171 96h1v1h-1zM171 98h1v1h-1zM171 100h1v1h-1zM171 102h1v1h-1zM171 104h1v1h-1zM171 106h1v1h-1zM171 108h1v1h-1zM171 110h1v1h-1zM171 112h1v1h-1zM171 114h1v1h-1zM171 116h1v1h-1zM171 118h1v1h-1zM171 120h1v1h-1zM171 122h1v1h-1zM171 124h1v1h-1zM171 126h1v1h-1zM171 128h1v1h-1zM171 130h1v1h-1zM171 132h1v1h-1zM171 134h1v1h-1zM171 136h1v1h-1zM171 138h1v1h-1zM171 140h1v1h-1zM171 142h1v1h-1zM171 144h1v1h-1zM171 146h1v1h-1zM171 148h1v1h-1zM171 150h1v1h-1zM171 152h1v1h-1zM171 154h1v1h-1zM171 156h1v1h-1zM171 158h1v1h-1zM171 160h1v1h-1zM171 162h1v1h-1zM171 164h1v1h-1zM171 166h1v1h-1zM171 168h1v1h-1zM171 170h1v1h-1zM171 172h1v1h-1zM171 174h1v1h-1zM171 176h1v1h-1zM171 178h1v1h-1zM171 180h1v1h-1zM171 182h1v1h-1zM171 184h1v1h-1zM171 186h1v1h-1zM171 188h1v1h-1zM171 190h1v1h-1zM171 192h1v1h-1zM171 194h1v1h-1zM171 196h1v1h-1zM171 198h1v1h-1zM171 200h1v1h-1zM171 202h1v1h-1zM171 204h1v1h-1zM171 206h1v1h-1zM171 208h1v1h-1zM248 40h1v1h-1zM248 42h1v1h-1zM248 44h1v1h-1zM248 46h1v1h-1zM248 48h1v1h-1zM248 50h1v1h-1zM248 52h1v1h-1zM248 54h1v1h-1zM248 56h1v1h-1zM248 58h1v1h-1zM248 60h1v1h-1zM248 62h1v1h-1zM248 64h1v1h-1zM248 66h1v1h-1zM248 68h1v1h-1zM248 70h1v1h-1zM248 72h1v1h-1zM248 74h1v1h-1zM248 76h1v1h-1zM248 78h1v1h-1zM248 80h1v1h-1zM248 82h1v1h-1zM248 84h1v1h-1zM248 86h1v1h-1zM248 88h1v1h-1zM248 90h1v1h-1zM248 92h1v1h-1zM248 94h1v1h-1zM248 96h1v1h-1zM248 98h1v1h-1zM248 100h1v1h-1zM248 102h1v1h-1zM248 104h1v1h-1zM248 106h1v1h-1zM248 108h1v1h-1zM248 110h1v1h-1zM248 112h1v1h-1zM248 114h1v1h-1zM248 116h1v1h-1zM248 118h1v1h-1zM248 120h1v1h-1zM248 122h1v1h-1zM248 124h1v1h-1zM248 126h1v1h-1zM248 128h1v1h-1zM248 130h1v1h-1zM248 132h1v1h-1zM248 134h1v1h-1zM248 136h1v1h-1zM248 138h1v1h-1zM248 140h1v1h-1zM248 142h1v1h-1zM248 144h1v1h-1zM248 146h1v1h-1zM248 148h1v1h-1zM248 150h1v1h-1zM248 152h1v1h-1zM248 154h1v1h-1zM248 156h1v1h-1zM248 158h1v1h-1zM248 160h1v1h-1zM248 162h1v1h-1zM248 164h1v1h-1zM248 166h1v1h-1zM248 168h1v1h-1zM248 170h1v1h-1zM248 172h1v1h-1zM248 174h1v1h-1zM248 176h1v1h-1zM248 178h1v1h-1zM248 180h1v1h-1zM248 182h1v1h-1zM248 184h1v1h-1zM248 186h1v1h-1zM248 188h1v1h-1zM248 190h1v1h-1zM248 192h1v1h-1zM248 194h1v1h-1zM248 196h1v1h-1zM248 198h1v1h-1zM248 200h1v1h-1zM248 202h1v1h-1zM248 204h1v1h-1zM248 206h1v1h-1zM248 208h1v1h-1zM326 40h1v1h-1zM326 42h1v1h-1zM326 44h1v1h-1zM326 46h1v1h-1zM326 48h1v1h-1zM326 50h1v1h-1zM326 52h1v1h-1zM326 54h1v1h-1zM326 56h1v1h-1zM326 58h1v1h-1zM326 60h1v1h-1zM326 62h1v1h-1zM326 64h1v1h-1zM326 66h1v1h-1zM326 68h1v1h-1zM326 70h1v1h-1zM326 72h1v1h-1zM326 74h1v1h-1zM326 76h1v1h-1zM326 78h1v1h-1zM326 80h1v1h-1zM326 82h1v1h-1zM326 84h1v1h-1zM326 86h1v1h-1zM326 88h1v1h-1zM326 90h1v1h-1zM326 92h1v1h-1zM326 94h1v1h-1zM326 96h1v1h-1zM326 98h1v1h-1zM326 100h1v1h-1zM326 102h1v1h-1zM326 104h1v1h-1zM326 106h1v1h-1zM326 108h1v1h-1zM326 110h1v1h-1zM326 112h1v1h-1zM326 114h1v1h-1zM326 116h1v1h-1zM326 118h1v1h-1zM326 120h1v1h-1zM326 122h1v1h-1zM326 124h1v1h-1zM326 126h1v1h-1zM326 128h1v1h-1zM326 130h1v1h-1zM326 132h1v1h-1zM326 134h1v1h-1zM326 136h1v1h-1zM326 138h1v1h-1zM326 140h1v1h-1zM326 142h1v1h-1zM326 144h1v1h-1zM326 146h1v1h-1zM326 148h1v1h-1zM326 150h1v1h-1zM326 152h1v1h-1zM326 154h1v1h-1zM326 156h1v1h-1zM326 158h1v1h-1zM326 160h1v1h-1zM326 162h1v1h-1zM326 164h1v1h-1zM326 166h1v1h-1zM326 168h1v1h-1zM326 170h1v1h-1zM326 172h1v1h-1zM326 174h1v1h-1zM326 176h1v1h-1zM326 178h1v1h-1zM326 180h1v1h-1zM326 182h1v1h-1zM326 184h1v1h-1zM326 186h1v1h-1zM326 188h1v1h-1zM326 190h1v1h-1zM326 192h1v1h-1zM326 194h1v1h-1zM326 196h1v1h-1zM326 198h1v1h-1zM326 200h1v1h-1zM326 202h1v1h-1zM326 204h1v1h-1zM326 206h1v1h-1zM326 208h1v1h-1zM480 40h1v1h-1zM480 42h1v1h-1zM480 44h1v1h-1zM480 46h1v1h-1zM480 48h1v1h-1zM480 50h1v1h-1zM480 52h1v1h-1zM480 54h1v1h-1zM480 56h1v1h-1zM480 58h1v1h-1zM480 60h1v1h-1zM480 62h1v1h-1zM480 64h1v1h-1zM480 66h1v1h-1zM480 68h1v1h-1zM480 70h1v1h-1zM480 72h1v1h-1zM480 74h1v1h-1zM480 76h1v1h-1zM480 78h1v1h-1zM480 80h1v1h-1zM480 82h1v1h-1zM480 84h1v1h-1zM480 86h1v1h-1zM480 88h1v1h-1zM480 90h1v1h-1zM480 92h1v1h-1zM480 94h1v1h-1zM480 96h1v1h-1zM480 98h1v1h-1zM480 100h1v1h-1zM480 102h1v1h-1zM480 104h1v1h-1zM480 106h1v1h-1zM480 108h1v1h-1zM480 110h1v1h-1zM480 112h1v1h-1zM480 114h1v1h-1zM480 116h1v1h-1zM480 118h1v1h-1zM480 120h1v1h-1zM480 122h1v1h-1zM480 124h1v1h-1zM480 126h1v1h-1zM480 128h1v1h-1zM480 130h1v1h-1zM480 132h1v1h-1zM480 134h1v1h-1zM480 136h1v1h-1zM480 138h1v1h-1zM480 140h1v1h-1zM480 142h1v1h-1zM480 144h1v1h-1zM480 146h1v1h-1zM480 148h1v1h-1zM480 150h1v1h-1zM480 152h1v1h-1zM480 154h1v1h-1zM480 156h1v1h-1zM480 158h1v1h-1zM480 160h1v1h-1zM480 162h1v1h-1zM480 164h1v1h-1zM480 166h1v1h-1zM480 168h1v1h-1zM480 170h1v1h-1zM480 172h1v1h-1zM480 174h1v1h-1zM480 176h1v1h-1zM480 178h1v1h-1zM480 180h1v1h-1zM480 182h1v1h-1zM480 184h1v1h-1zM480 186h1v1h-1zM480 188h1v1h-1zM480 190h1v1h-1zM480 192h1v1h-1zM480 194h1v1h-1zM480 196h1v1h-1zM480 198h1v1h-1zM480 200h1v1h-1zM480 202h1v1h-1zM480 204h1v1h-1zM480 206h1v1h-1zM480 208h1v1h-1zM558 40h1v1h-1zM558 42h1v1h-1zM558 44h1v1h-1zM558 46h1v1h-1zM558 48h1v1h-1zM558 50h1v1h-1zM558 52h1v1h-1zM558 54h1v1h-1zM558 56h1v1h-1zM558 58h1v1h-1zM558 60h1v1h-1zM558 62h1v1h-1zM558 64h1v1h-1zM558 66h1v1h-1zM558 68h1v1h-1zM558 70h1v1h-1zM558 72h1v1h-1zM558 74h1v1h-1zM558 76h1v1h-1zM558 78h1v1h-1zM558 80h1v1h-1zM558 82h1v1h-1zM558 84h1v1h-1zM558 86h1v1h-1zM558 88h1v1h-1zM558 90h1v1h-1zM558 92h1v1h-1zM558 94h1v1h-1zM558 96h1v1h-1zM558 98h1v1h-1zM558 100h1v1h-1zM558 102h1v1h-1zM558 104h1v1h-1zM558 106h1v1h-1zM558 108h1v1h-1zM558 110h1v1h-1zM558 112h1v1h-1zM558 114h1v1h-1zM558 116h1v1h-1zM558 118h1v1h-1zM558 120h1v1h-1zM558 122h1v1h-1zM558 124h1v1h-1zM558 126h1v1h-1zM558 128h1v1h-1zM558 130h1v1h-1zM558 132h1v1h-1zM558 134h1v1h-1zM558 136h1v1h-1zM558 138h1v1h-1zM558 140h1v1h-1zM558 142h1v1h-1zM558 144h1v1h-1zM558 146h1v1h-1zM558 148h1v1h-1zM558 150h1v1h-1zM558 152h1v1h-1zM558 154h1v1h-1zM558 156h1v1h-1zM558 158h1v1h-1zM558 160h1v1h-1zM558 162h1v1h-1zM558 164h1v1h-1zM558 166h1v1h-1zM558 168h1v1h-1zM558 170h1v1h-1zM558 172h1v1h-1zM558 174h1v1h-1zM558 176h1v1h-1zM558 178h1v1h-1zM558 180h1v1h-1zM558 182h1v1h-1zM558 184h1v1h-1zM558 186h1v1h-1zM558 188h1v1h-1zM558 190h1v1h-1zM558 192h1v1h-1zM558 194h1v1h-1zM558 196h1v1h-1zM558 198h1v1h-1zM558 200h1v1h-1zM558 202h1v1h-1zM558 204h1v1h-1zM558 206h1v1h-1zM558 208h1v1h-1zM635 40h1v1h-1zM635 42h1v1h-1zM635 44h1v1h-1zM635 46h1v1h-1zM635 48h1v1h-1zM635 50h1v1h-1zM635 52h1v1h-1zM635 54h1v1h-1zM635 56h1v1h-1zM635 58h1v1h-1zM635 60h1v1h-1zM635 62h1v1h-1zM635 64h1v1h-1zM635 66h1v1h-1zM635 68h1v1h-1zM635 70h1v1h-1zM635 72h1v1h-1zM635 74h1v1h-1zM635 76h1v1h-1zM635 78h1v1h-1zM635 80h1v1h-1zM635 82h1v1h-1zM635 84h1v1h-1zM635 86h1v1h-1zM635 88h1v1h-1zM635 90h1v1h-1zM635 92h1v1h-1zM635 94h1v1h-1zM635 96h1v1h-1zM635 98h1v1h-1zM635 100h1v1h-1zM635 102h1v1h-1zM635 104h1v1h-1zM635 106h1v1h-1zM635 108h1v1h-1zM635 110h1v1h-1zM635 112h1v1h-1zM635 114h1v1h-1zM635 116h1v1h-1zM635 118h1v1h-1zM635 120h1v1h-1zM635 122h1v1h-1zM635 124h1v1h-1zM635 126h1v1h-1zM635 128h1v1h-1zM635 130h1v1h-1zM635 132h1v1h-1zM635 134h1v1h-1zM635 136h1v1h-1zM635 138h1v1h-1zM635 140h1v1h-1zM635 142h1v1h-1zM635 144h1v1h-1zM635 146h1v1h-1zM635 148h1v1h-1zM635 150h1v1h-1zM635 152h1v1h-1zM635 154h1v1h-1zM635 156h1v1h-1zM635 158h1v1h-1zM635 160h1v1h-1zM635 162h1v1h-1zM635 164h1v1h-1zM635 166h1v1h-1zM635 168h1v1h-1zM635 170h1v1h-1zM635 172h1v1h-1zM635 174h1v1h-1zM635 176h1v1h-1zM635 178h1v1h-1zM635 180h1v1h-1zM635 182h1v1h-1zM635 184h1v1h-1zM635 186h1v1h-1zM635 188h1v1h-1zM635 190h1v1h-1zM635 192h1v1h-1zM635 194h1v1h-1zM635 196h1v1h-1zM635 198h1v1h-1zM635 200h1v1h-1zM635 202h1v1h-1zM635 204h1v1h-1zM635 206h1v1h-1zM635 208h1v1h-1zM712 40h1v1h-1zM712 42h1v1h-1zM712 44h1v1h-1zM712 46h1v1h-1zM712 48h1v1h-1zM712 50h1v1h-1zM712 52h1v1h-1zM712 54h1v1h-1zM712 56h1v1h-1zM712 58h1v1h-1zM712 60h1v1h-1zM712 62h1v1h-1zM712 64h1v1h-1zM712 66h1v1h-1zM712 68h1v1h-1zM712 70h1v1h-1zM712 72h1v1h-1zM712 74h1v1h-1zM712 76h1v1h-1zM712 78h1v1h-1zM712 80h1v1h-1zM712 82h1v1h-1zM712 84h1v1h-1zM712 86h1v1h-1zM712 88h1v1h-1zM712 90h1v1h-1zM712 92h1v1h-1zM712 94h1v1h-1zM712 96h1v1h-1zM712 98h1v1h-1zM712 100h1v1h-1zM712 102h1v1h-1zM712 104h1v1h-1zM712 106h1v1h-1zM712 108h1v1h-1zM712 110h1v1h-1zM712 112h1v1h-1zM712 114h1v1h-1zM712 116h1v1h-1zM712 118h1v1h-1zM712 120h1v1h-1zM712 122h1v1h-1zM712 124h1v1h-1zM712 126h1v1h-1zM712 128h1v1h-1zM712 130h1v1h-1zM712 132h1v1h-1zM712 134h1v1h-1zM712 136h1v1h-1zM712 138h1v1h-1zM712 140h1v1h-1zM712 142h1v1h-1zM712 144h1v1h-1zM712 146h1v1h-1zM712 148h1v1h-1zM712 150h1v1h-1zM712 152h1v1h-1zM712 154h1v1h-1zM712 156h1v1h-1zM712 158h1v1h-1zM712 160h1v1h-1zM712 162h1v1h-1zM712 164h1v1h-1zM712 166h1v1h-1zM712 168h1v1h-1zM712 170h1v1h-1zM712 172h1v1h-1zM712 174h1v1h-1zM712 176h1v1h-1zM712 178h1v1h-1zM712 180h1v1h-1zM712 182h1v1h-1zM712 184h1v1h-1zM712 186h1v1h-1zM712 188h1v1h-1zM712 190h1v1h-1zM712 192h1v1h-1zM712 194h1v1h-1zM712 196h1v1h-1zM712 198h1v1h-1zM712 200h1v1h-1zM712 202h1v1h-1zM712 204h1v1h-1zM712 206h1v1h-1zM712 208h1v1h-1z" fill="#8c8c8c"/>
<path d="M17 124.5H789M403.5 38V210" stroke="#808080" stroke-width="1" fill="none"/>
<path d="M32.5 122V127M48.5 122V127M63.5 122V127M79.5 122V127M110.5 122V127M125.5 122V127M141.5 122V127M156.5 122V127M187.5 122V127M202.5 122V127M218.5 122V127M233.5 122V127M264.5 122V127M279.5 122V127M295.5 122V127M310.5 122V127M341.5 122V127M357.5 122V127M372.5 122V127M388.5 122V127M418.5 122V127M434.5 122V127M449.5 122V127M465.5 122V127M496.5 122V127M511.5 122V127M527.5 122V127M542.5 122V127M573.5 122V127M588.5 122V127M604.5 122V127M619.5 122V127M650.5 122V127M665.5 122V127M681.5 122V127M696.5 122V127M727.5 122V127M743.5 122V127M758.5 122V127M774.5 122V127" stroke="#808080" stroke-width="1" fill="none"/>
<path d="M32 70h1v1h-1zM32 178h1v1h-1zM48 70h1v1h-1zM48 178h1v1h-1zM63 70h1v1h-1zM63 178h1v1h-1zM79 70h1v1h-1zM79 178h1v1h-1zM110 70h1v1h-1zM110 178h1v1h-1zM125 70h1v1h-1zM125 178h1v1h-1zM141 70h1v1h-1zM141 178h1v1h-1zM156 70h1v1h-1zM156 178h1v1h-1zM187 70h1v1h-1zM187 178h1v1h-1zM202 70h1v1h-1zM202 178h1v1h-1zM218 70h1v1h-1zM218 178h1v1h-1zM233 70h1v1h-1zM233 178h1v1h-1zM264 70h1v1h-1zM264 178h1v1h-1zM279 70h1v1h-1zM279 178h1v1h-1zM295 70h1v1h-1zM295 178h1v1h-1zM310 70h1v1h-1zM310 178h1v1h-1zM341 70h1v1h-1zM341 178h1v1h-1zM357 70h1v1h-1zM357 178h1v1h-1zM372 70h1v1h-1zM372 178h1v1h-1zM388 70h1v1h-1zM388 178h1v1h-1zM418 70h1v1h-1zM418 178h1v1h-1zM434 70h1v1h-1zM434 178h1v1h-1zM449 70h1v1h-1zM449 178h1v1h-1zM465 70h1v1h-1zM465 178h1v1h-1zM496 70h1v1h-1zM496 178h1v1h-1zM511 70h1v1h-1zM511 178h1v1h-1zM527 70h1v1h-1zM527 178h1v1h-1zM542 70h1v1h-1zM542 178h1v1h-1zM573 70h1v1h-1zM573 178h1v1h-1zM588 70h1v1h-1zM588 178h1v1h-1zM604 70h1v1h-1zM604 178h1v1h-1zM619 70h1v1h-1zM619 178h1v1h-1zM650 70h1v1h-1zM650 178h1v1h-1zM665 70h1v1h-1zM665 178h1v1h-1zM681 70h1v1h-1zM681 178h1v1h-1zM696 70h1v1h-1zM696 178h1v1h-1zM727 70h1v1h-1zM727 178h1v1h-1zM743 70h1v1h-1zM743 178h1v1h-1zM758 70h1v1h-1zM758 178h1v1h-1zM774 70h1v1h-1zM774 178h1v1h-1z" fill="#8c8c8c"/>
<rect x="17.5" y="38.5" width="772" height="172" fill="none" stroke="#808080" stroke-width="1"/>
<path d="M17 65H17V65H18V66H19V65H20V66H21V65H22V66H23V65H24V66H25V63H26V65H27V65H28V65H29V65H30V66H31V66H32V66H33V65H34V66H35V65H36V66H37V66H38V66H39V64H40V65H41V65H42V66H43V65H44V63H45V65H46V65H47V65H48V65H49V65H50V65H51V66H52V65H53V62H54V65H55V65H56V66H57V66H58V65H59V65H60V66H61V65H62V65H63V65H64V65H65V65H66V66H67V65H68V65H69V65H70V66H71V65H72V65H73V65H74V65H75V65H76V65H77V65H78V65H79V65H80V65H81V64H82V66H83V62H84V66H85V66H86V65H87V65H88V65H89V64H90V65H91V66H92V65H93V65H94V66H95V62H96V65H97V67H98V65H99V66H100V66H101V65H102V66H103V65H104V65H105V65H106V66H107V64H108V65H109V66H110V65H111V66H112V65H113V65H114V66H115V65H116V65H117V65H118V65H119V65H120V65H121V66H122V66H123V66H124V65H125V66H126V65H127V65H128V65H129V66H130V66H131V65H132V65H133V66H134V66H135V65H136V63H137V65H138V65H139V64H140V66H141V66H142V66H143V65H144V65H145V66H146V63H147V66H148V66H149V66H150V65H151V63H152V66H153V66H154V65H155V66H156V65H157V65H158V65H159V67H160V67H161V65H162V65H163V65H164V66H165V66H166V66H167V66H168V66H169V62H170V66H171V66H172V66H173V65H174V65H175V66H176V66H177V65H178V66H179V65H180V65H181V66H182V67H183V67H184V62H185V66H186V65H187V65H188V66H189V66H190V62H191V64H192V66H193V63H194V65H195V66H196V65H197V66H198V67H199V67H200V66H201V66H202V68H203V66H204V67H205V67H206V66H207V67H208V63H209V67H210V66H211V65H212V62H213V66H214V65H215V65H216V67H217V65H218V66H219V65H220V65H221V65H222V64H223V65H224V65H225V62H226V65H227V65H228V66H229V66H230V65H231V63H232V66H233V65H234V66H235V66H236V66H237V66H238V65H239V66H240V65H241V65H242V65H243V65H244V65H245V63H246V65H247V66H248V66H249V65H250V65H251V65H252V62H253V66H254V65H255V66H256V65H257V65H258V66H259V65H260V65H261V66H262V65H263V65H264V65H265V66H266V65H267V65H268V65H269V66H270V65H271V65H272V64H273V66H274V65H275V65H276V65H277V65H278V66H279V66H280V66H281V65H282V65H283V66H284V66H285V66H286V65H287V65H288V65H289V65H290V65H291V66H292V63H293V65H294V63H295V65H296V66H297V64H298V66H299V66H300V65H301V66H302V66H303V65H304V65H305V66H306V65H307V66H308V66H309V66H310V66H311V66H312V65H313V66H314V66H315V64H316V66H317V65H318V65H319V65H320V65H321V66H322V65H323V65H324V65H325V65H326V65H327V65H328V65H329V66H330V65H331V65H332V65H333V66H334V65H335V65H336V65H337V65H338V65H339V66H340V66H341V65H342V65H343V66H344V66H345V66H346V66H347V65H348V65H349V62H350V66H351V66H352V66H353V66H354V66H355V65H356V67H357V66H358V66H359V67H360V63H361V66H362V66H363V67H364V66H365V66H366V67H367V67H368V67H369V65H370V65H371V66H372V65H373V66H374V67H375V66H376V66H377V67H378V66H379V67H380V66H381V66H382V63H383V67H384V67H385V66H386V67H387V67H388V66H389V65H390V65H391V62H392V65H393V65H394V65H395V66H396V65H397V66H398V65H399V62H400V65H401V65H402V65H403V66H404V66H405V65H406V65H407V66H408V65H409V65H410V65H411V65H412V65H413V65H414V65H415V65H416V66H417V66H418V67H419V66H420V66H421V66H422V66H423V66H424V66H425V67H426V66H427V66H428V66H429V66H430V67H431V66H432V66H433V66H434V67H435V66H436V66H437V67H438V66H439V65H440V65H441V64H442V67H443V67H444V64H445V67H446V66H447V66H448V63H449V67H450V66H451V66H452V67H453V65H454V66H455V65H456V66H457V66H458V66H459V67H460V67H461V66H462V66H463V67H464V67H465V66H466V67H467V66H468V66H469V67H470V67H471V67H472V67H473V67H474V64H475V66H476V66H477V66H478V63H479V66H480V66H481V66H482V66H483V67H484V67H485V67H486V66H487V66H488V66H489V67H490V67H491V63H492V66H493V65H494V66H495V67H496V66H497V67H498V66H499V66H500V66H501V66H502V67H503V64H504V66H505V66H506V67H507V66H508V66H509V67H510V67H511V67H512V66H513V66H514V67H515V66H516V67H517V67H518V66H519V66H520V67H521V67H522V66H523V66H524V65H525V66H526V66H527V66H528V66H529V65H530V66H531V64H532V66H533V66H534V66H535V66H536V65H537V65H538V67H539V67H540V66H541V66H542V66H543V65H544V65H545V66H546V66H547V66H548V66H549V66H550V65H551V65H552V65H553V65H554V66H555V66H556V65H557V66H558V66H559V66H560V66H561V66H562V65H563V65H564V66H565V65H566V65H567V65H568V65H569V66H570V65H571V65H572V65H573V66H574V65H575V66H576V65H577V65H578V66H579V65H580V65H581V65H582V65H583V66H584V66H585V66H586V65H587V65H588V66H589V63H590V65H591V66H592V66H593V65H594V65H595V65H596V65H597V65H598V66H599V66H600V65H601V62H602V65H603V66H604V66H605V65H606V65H607V65H608V66H609V65H610V67H611V67H612V67H613V66H614V66H615V66H616V67H617V67H618V67H619V66H620V68H621V68H622V67H623V67H624V67H625V68H626V68H627V68H628V68H629V67H630V68H631V67H632V66H633V67H634V67H635V67H636V67H637V67H638V68H639V67H640V67H641V67H642V67H643V68H644V68H645V67H646V67H647V68H648V67H649V67H650V67H651V67H652V67H653V67H654V68H655V67H656V67H657V64H658V67H659V65H660V67H661V68H662V67H663V68H664V67H665V68H666V64H667V67H668V68H669V68H670V67H671V67H672V67H673V68H674V68H675V67H676V67H677V68H678V68H679V68H680V68H681V68H682V67H683V68H684V67H685V67H686V67H687V67H688V65H689V67H690V68H691V67H692V67H693V64H694V67H695V67H696V65H697V67H698V68H699V67H700V68H701V67H702V68H703V67H704V68H705V67H706V67H707V68H708V67H709V67H710V67H711V67H712V66H713V66H714V67H715V66H716V66H717V66H718V66H719V67H720V66H721V64H722V65H723V65H724V65H725V66H726V66H727V67H728V67H729V66H730V66H731V64H732V66H733V66H734V66H735V66H736V66H737V66H738V67H739V66H740V64H741V67H742V66H743V67H744V67H745V68H746V67H747V67H748V67H749V67H750V66H751V68H752V67H753V67H754V68H755V67H756V67H757V67H758V67H759V67H760V183V183H759V184H758V184H757V184H756V184H755V185H754V185H753V185H752V184H751V186H750V185H749V183H748V184H747V184H746V184H745V183H744V185H743V185H742V185H741V184H740V185H739V185H738V187H737V185H736V184H735V184H734V187H733V187H732V184H731V184H730V184H729V184H728V184H727V184H726V187H725V185H724V185H723V185H722V185H721V183H720V184H719V184H718V184H717V185H716V185H715V183H714V185H713V185H712V184H711V185H710V184H709V185H708V184H707V185H706V185H705V186H704V184H703V184H702V187H701V184H700V185H699V184H698V186H697V185H696V185H695V184H694V184H693V184H692V184H691V186H690V184H689V184H688V183H687V184H686V185H685V184H684V183H683V184H682V183H681V184H680V185H679V184H678V185H677V185H676V184H675V184H674V185H673V184H672V184H671V184H670V184H669V184H668V184H667V184H666V184H665V183H664V184H663V184H662V186H661V184H660V185H659V184H658V185H657V184H656V184H655V184H654V186H653V185H652V184H651V185H650V185H649V185H648V185H647V184H646V185H645V185H644V185H643V185H642V184H641V185H640V184H639V185H638V185H637V185H636V185H635V184H634V184H633V184H632V185H631V186H630V185H629V185H628V185H627V185H626V185H625V186H624V185H623V185H622V185H621V186H620V185H619V186H618V185H617V184H616V185H615V185H614V185H613V185H612V184H611V185H610V184H609V184H608V185H607V184H606V183H605V184H604V184H603V184H602V184H601V184H600V185H599V185H598V184H597V185H596V183H595V184H594V184H593V184H592V183H591V185H590V183H589V185H588V184H587V184H586V186H585V184H584V184H583V183H582V185H581V183H580V184H579V183H578V184H577V184H576V184H575V183H574V184H573V183H572V186H571V184H570V184H569V184H568V183H567V183H566V183H565V184H564V183H563V184H562V184H561V185H560V184H559V183H558V184H557V183H556V183H555V184H554V184H553V184H552V183H551V184H550V184H549V185H548V184H547V185H546V185H545V185H544V185H543V184H542V185H541V186H540V184H539V186H538V185H537V185H536V185H535V184H534V184H533V185H532V185H531V185H530V186H529V185H528V186H527V187H526V185H525V186H524V186H523V186H522V185H521V186H520V186H519V185H518V186H517V187H516V188H515V186H514V186H513V186H512V186H511V186H510V186H509V186H508V185H507V186H506V185H505V185H504V185H503V187H502V187H501V185H500V184H499V183H498V184H497V184H496V185H495V184H494V185H493V185H492V184H491V185H490V185H489V185H488V185H487V184H486V185H485V185H484V185H483V184H482V184H481V185H480V185H479V184H478V183H477V184H476V185H475V185H474V185H473V184H472V185H471V185H470V185H469V185H468V184H467V185H466V184H465V184H464V183H463V184H462V184H461V184H460V184H459V185H458V184H457V185H456V184H455V187H454V186H453V184H452V185H451V184H450V185H449V184H448V185H447V185H446V185H445V185H444V185H443V185H442V183H441V184H440V184H439V184H438V184H437V184H436V184H435V183H434V184H433V184H432V184H431V185H430V184H429V183H428V184H427V184H426V184H425V183H424V183H423V184H422V185H421V184H420V185H419V184H418V186H417V187H416V186H415V185H414V185H413V185H412V185H411V184H410V185H409V186H408V186H407V185H406V186H405V186H404V185H403V185H402V186H401V185H400V186H399V186H398V185H397V186H396V186H395V185H394V186H393V186H392V187H391V187H390V185H389V186H388V185H387V185H386V186H385V186H384V185H383V186H382V185H381V186H380V185H379V186H378V186H377V185H376V185H375V186H374V186H373V186H372V186H371V186H370V186H369V186H368V186H367V185H366V185H365V185H364V185H363V186H362V186H361V185H360V186H359V186H358V186H357V185H356V186H355V186H354V186H353V186H352V186H351V187H350V188H349V186H348V186H347V185H346V187H345V187H344V184H343V185H342V185H341V186H340V185H339V184H338V184H337V184H336V185H335V185H334V185H333V186H332V185H331V186H330V186H329V185H328V186H327V185H326V184H325V185H324V185H323V186H322V185H321V185H320V185H319V185H318V184H317V185H316V185H315V184H314V184H313V185H312V184H311V185H310V186H309V186H308V186H307V185H306V186H305V185H304V186H303V185H302V185H301V185H300V186H299V185H298V187H297V185H296V185H295V184H294V185H293V186H292V186H291V184H290V185H289V185H288V186H287V186H286V185H285V185H284V186H283V186H282V186H281V186H280V186H279V185H278V186H277V185H276V187H275V185H274V186H273V185H272V186H271V186H270V185H269V186H268V187H267V186H266V187H265V186H264V187H263V185H262V185H261V185H260V185H259V185H258V186H257V186H256V185H255V185H254V185H253V186H252V186H251V186H250V185H249V187H248V186H247V186H246V185H245V186H244V186H243V186H242V185H241V184H240V185H239V185H238V186H237V185H236V186H235V185H234V185H233V186H232V185H231V186H230V186H229V186H228V186H227V188H226V186H225V185H224V186H223V186H222V186H221V185H220V186H219V185H218V186H217V187H216V185H215V186H214V186H213V186H212V186H211V188H210V188H209V186H208V187H207V187H206V185H205V189H204V186H203V187H202V186H201V186H200V186H199V187H198V188H197V187H196V187H195V187H194V187H193V187H192V186H191V187H190V185H189V185H188V186H187V185H186V186H185V186H184V185H183V185H182V185H181V185H180V185H179V185H178V185H177V185H176V185H175V185H174V184H173V185H172V185H171V187H170V186H169V186H168V186H167V186H166V186H165V185H164V186H163V185H162V187H161V187H160V185H159V187H158V187H157V187H156V186H155V187H154V187H153V188H152V187H151V186H150V187H149V187H148V188H147V187H146V185H145V185H144V186H143V187H142V185H141V186H140V186H139V185H138V186H137V187H136V186H135V187H134V186H133V186H132V185H131V185H130V185H129V185H128V184H127V184H126V184H125V183H124V184H123V184H122V184H121V184H120V184H119V183H118V183H117V184H116V184H115V185H114V184H113V184H112V184H111V183H110V183H109V185H108V183H107V183H106V184H105V185H104V184H103V183H102V184H101V185H100V185H99V184H98V186H97V184H96V183H95V183H94V184H93V184H92V184H91V184H90V184H89V184H88V183H87V184H86V184H85V184H84V184H83V184H82V185H81V184H80V185H79V185H78V184H77V183H76V183H75V184H74V185H73V185H72V184H71V184H70V184H69V184H68V184H67V185H66V183H65V183H64V184H63V183H62V183H61V185H60V184H59V183H58V186H57V185H56V184H55V185H54V184H53V185H52V185H51V185H50V185H49V184H48V185H47V184H46V184H45V183H44V184H43V183H42V184H41V184H40V184H39V184H38V183H37V184H36V184H35V184H34V184H33V184H32V184H31V186H30V186H29V183H28V183H27V184H26V184H25V184H24V183H23V184H22V183H21V185H20V184H19V184H18V183H17Z" fill="#474500"/>
<rect x="17" y="72" width="743" height="105" fill="#403f00"/>
<rect x="17" y="69" width="743" height="1" fill="#434200"/>
<rect x="17" y="71" width="743" height="1" fill="#434200"/>
<rect x="17" y="70" width="743" height="1" fill="#888400"/>
<rect x="17" y="177" width="743" height="1" fill="#434200"/>
<rect x="17" y="179" width="743" height="1" fill="#434200"/>
<rect x="17" y="178" width="743" height="1" fill="#888400"/>
<rect x="774" y="70" width="1" height="1" fill="#8c8c8c"/><rect x="774" y="178" width="1" height="1" fill="#8c8c8c"/>
<rect x="242" y="64" width="3" height="122" fill="#8e8800"/><rect x="243" y="64" width="1" height="122" fill="#a49e00"/>
<rect x="242" y="69" width="3" height="3" fill="#e0d820"/><rect x="243" y="70" width="1" height="1" fill="#ffff50"/>
<rect x="242" y="177" width="3" height="3" fill="#e0d820"/><rect x="243" y="178" width="1" height="1" fill="#ffff50"/>
<polyline points="17,54.5 212,54.5 226,66.5 241,66.5 254.6,75.5 272,75.5 275,77.5 279.4,77.5 282.5,79.5 300.5,79.5 312.5,88.5 328.75,88.5 342.5,97.5 357,97.5 372,106.5 386.25,106.5 400.75,121.5 425,121.5 426.25,122.5 454.25,122.5 455,123.5 473.25,123.5 488,143.5 510,143.5 515,145.5 532.5,145.5 545,153.5 560,153.5 574.5,164.5 590,164.5 603.75,177.5 619.25,177.5 632.5,190.5 687,190.5 688,189.5 790,189.5" fill="none" stroke="#ff0000" stroke-width="1.4"/>
<path d="M19 244h1v1h-1zM21 244h1v1h-1zM23 244h1v1h-1zM25 244h1v1h-1zM27 244h1v1h-1zM29 244h1v1h-1zM31 244h1v1h-1zM33 244h1v1h-1zM35 244h1v1h-1zM37 244h1v1h-1zM39 244h1v1h-1zM41 244h1v1h-1zM43 244h1v1h-1zM45 244h1v1h-1zM47 244h1v1h-1zM49 244h1v1h-1zM51 244h1v1h-1zM53 244h1v1h-1zM55 244h1v1h-1zM57 244h1v1h-1zM59 244h1v1h-1zM61 244h1v1h-1zM63 244h1v1h-1zM65 244h1v1h-1zM67 244h1v1h-1zM69 244h1v1h-1zM71 244h1v1h-1zM73 244h1v1h-1zM75 244h1v1h-1zM77 244h1v1h-1zM79 244h1v1h-1zM81 244h1v1h-1zM83 244h1v1h-1zM85 244h1v1h-1zM87 244h1v1h-1zM89 244h1v1h-1zM91 244h1v1h-1zM93 244h1v1h-1zM95 244h1v1h-1zM97 244h1v1h-1zM99 244h1v1h-1zM101 244h1v1h-1zM103 244h1v1h-1zM105 244h1v1h-1zM107 244h1v1h-1zM109 244h1v1h-1zM111 244h1v1h-1zM113 244h1v1h-1zM115 244h1v1h-1zM117 244h1v1h-1zM119 244h1v1h-1zM121 244h1v1h-1zM123 244h1v1h-1zM125 244h1v1h-1zM127 244h1v1h-1zM129 244h1v1h-1zM131 244h1v1h-1zM133 244h1v1h-1zM135 244h1v1h-1zM137 244h1v1h-1zM139 244h1v1h-1zM141 244h1v1h-1zM143 244h1v1h-1zM145 244h1v1h-1zM147 244h1v1h-1zM149 244h1v1h-1zM151 244h1v1h-1zM153 244h1v1h-1zM155 244h1v1h-1zM157 244h1v1h-1zM159 244h1v1h-1zM161 244h1v1h-1zM163 244h1v1h-1zM165 244h1v1h-1zM167 244h1v1h-1zM169 244h1v1h-1zM171 244h1v1h-1zM173 244h1v1h-1zM175 244h1v1h-1zM177 244h1v1h-1zM179 244h1v1h-1zM181 244h1v1h-1zM183 244h1v1h-1zM185 244h1v1h-1zM187 244h1v1h-1zM189 244h1v1h-1zM191 244h1v1h-1zM193 244h1v1h-1zM195 244h1v1h-1zM197 244h1v1h-1zM199 244h1v1h-1zM201 244h1v1h-1zM203 244h1v1h-1zM205 244h1v1h-1zM207 244h1v1h-1zM209 244h1v1h-1zM211 244h1v1h-1zM213 244h1v1h-1zM215 244h1v1h-1zM217 244h1v1h-1zM219 244h1v1h-1zM221 244h1v1h-1zM223 244h1v1h-1zM225 244h1v1h-1zM227 244h1v1h-1zM229 244h1v1h-1zM231 244h1v1h-1zM233 244h1v1h-1zM235 244h1v1h-1zM237 244h1v1h-1zM239 244h1v1h-1zM241 244h1v1h-1zM243 244h1v1h-1zM245 244h1v1h-1zM247 244h1v1h-1zM249 244h1v1h-1zM251 244h1v1h-1zM253 244h1v1h-1zM255 244h1v1h-1zM257 244h1v1h-1zM259 244h1v1h-1zM261 244h1v1h-1zM263 244h1v1h-1zM265 244h1v1h-1zM267 244h1v1h-1zM269 244h1v1h-1zM271 244h1v1h-1zM273 244h1v1h-1zM275 244h1v1h-1zM277 244h1v1h-1zM279 244h1v1h-1zM281 244h1v1h-1zM283 244h1v1h-1zM285 244h1v1h-1zM287 244h1v1h-1zM289 244h1v1h-1zM291 244h1v1h-1zM293 244h1v1h-1zM295 244h1v1h-1zM297 244h1v1h-1zM299 244h1v1h-1zM301 244h1v1h-1zM303 244h1v1h-1zM305 244h1v1h-1zM307 244h1v1h-1zM309 244h1v1h-1zM311 244h1v1h-1zM313 244h1v1h-1zM315 244h1v1h-1zM317 244h1v1h-1zM319 244h1v1h-1zM321 244h1v1h-1zM323 244h1v1h-1zM325 244h1v1h-1zM327 244h1v1h-1zM329 244h1v1h-1zM331 244h1v1h-1zM333 244h1v1h-1zM335 244h1v1h-1zM337 244h1v1h-1zM339 244h1v1h-1zM341 244h1v1h-1zM343 244h1v1h-1zM345 244h1v1h-1zM347 244h1v1h-1zM349 244h1v1h-1zM351 244h1v1h-1zM353 244h1v1h-1zM355 244h1v1h-1zM357 244h1v1h-1zM359 244h1v1h-1zM361 244h1v1h-1zM363 244h1v1h-1zM365 244h1v1h-1zM367 244h1v1h-1zM369 244h1v1h-1zM371 244h1v1h-1zM373 244h1v1h-1zM375 244h1v1h-1zM377 244h1v1h-1zM379 244h1v1h-1zM381 244h1v1h-1zM383 244h1v1h-1zM385 244h1v1h-1zM387 244h1v1h-1zM389 244h1v1h-1zM391 244h1v1h-1zM393 244h1v1h-1zM395 244h1v1h-1zM397 244h1v1h-1zM399 244h1v1h-1zM401 244h1v1h-1zM403 244h1v1h-1zM405 244h1v1h-1zM407 244h1v1h-1zM409 244h1v1h-1zM411 244h1v1h-1zM413 244h1v1h-1zM415 244h1v1h-1zM417 244h1v1h-1zM419 244h1v1h-1zM421 244h1v1h-1zM423 244h1v1h-1zM425 244h1v1h-1zM427 244h1v1h-1zM429 244h1v1h-1zM431 244h1v1h-1zM433 244h1v1h-1zM435 244h1v1h-1zM437 244h1v1h-1zM439 244h1v1h-1zM441 244h1v1h-1zM443 244h1v1h-1zM445 244h1v1h-1zM447 244h1v1h-1zM449 244h1v1h-1zM451 244h1v1h-1zM453 244h1v1h-1zM455 244h1v1h-1zM457 244h1v1h-1zM459 244h1v1h-1zM461 244h1v1h-1zM463 244h1v1h-1zM465 244h1v1h-1zM467 244h1v1h-1zM469 244h1v1h-1zM471 244h1v1h-1zM473 244h1v1h-1zM475 244h1v1h-1zM477 244h1v1h-1zM479 244h1v1h-1zM481 244h1v1h-1zM483 244h1v1h-1zM485 244h1v1h-1zM487 244h1v1h-1zM489 244h1v1h-1zM491 244h1v1h-1zM493 244h1v1h-1zM495 244h1v1h-1zM497 244h1v1h-1zM499 244h1v1h-1zM501 244h1v1h-1zM503 244h1v1h-1zM505 244h1v1h-1zM507 244h1v1h-1zM509 244h1v1h-1zM511 244h1v1h-1zM513 244h1v1h-1zM515 244h1v1h-1zM517 244h1v1h-1zM519 244h1v1h-1zM521 244h1v1h-1zM523 244h1v1h-1zM525 244h1v1h-1zM527 244h1v1h-1zM529 244h1v1h-1zM531 244h1v1h-1zM533 244h1v1h-1zM535 244h1v1h-1zM537 244h1v1h-1zM539 244h1v1h-1zM541 244h1v1h-1zM543 244h1v1h-1zM545 244h1v1h-1zM547 244h1v1h-1zM549 244h1v1h-1zM551 244h1v1h-1zM553 244h1v1h-1zM555 244h1v1h-1zM557 244h1v1h-1zM559 244h1v1h-1zM561 244h1v1h-1zM563 244h1v1h-1zM565 244h1v1h-1zM567 244h1v1h-1zM569 244h1v1h-1zM571 244h1v1h-1zM573 244h1v1h-1zM575 244h1v1h-1zM577 244h1v1h-1zM579 244h1v1h-1zM581 244h1v1h-1zM583 244h1v1h-1zM585 244h1v1h-1zM587 244h1v1h-1zM589 244h1v1h-1zM591 244h1v1h-1zM593 244h1v1h-1zM595 244h1v1h-1zM597 244h1v1h-1zM599 244h1v1h-1zM601 244h1v1h-1zM603 244h1v1h-1zM605 244h1v1h-1zM607 244h1v1h-1zM609 244h1v1h-1zM611 244h1v1h-1zM613 244h1v1h-1zM615 244h1v1h-1zM617 244h1v1h-1zM619 244h1v1h-1zM621 244h1v1h-1zM623 244h1v1h-1zM625 244h1v1h-1zM627 244h1v1h-1zM629 244h1v1h-1zM631 244h1v1h-1zM633 244h1v1h-1zM635 244h1v1h-1zM637 244h1v1h-1zM639 244h1v1h-1zM641 244h1v1h-1zM643 244h1v1h-1zM645 244h1v1h-1zM647 244h1v1h-1zM649 244h1v1h-1zM651 244h1v1h-1zM653 244h1v1h-1zM655 244h1v1h-1zM657 244h1v1h-1zM659 244h1v1h-1zM661 244h1v1h-1zM663 244h1v1h-1zM665 244h1v1h-1zM667 244h1v1h-1zM669 244h1v1h-1zM671 244h1v1h-1zM673 244h1v1h-1zM675 244h1v1h-1zM677 244h1v1h-1zM679 244h1v1h-1zM681 244h1v1h-1zM683 244h1v1h-1zM685 244h1v1h-1zM687 244h1v1h-1zM689 244h1v1h-1zM691 244h1v1h-1zM693 244h1v1h-1zM695 244h1v1h-1zM697 244h1v1h-1zM699 244h1v1h-1zM701 244h1v1h-1zM703 244h1v1h-1zM705 244h1v1h-1zM707 244h1v1h-1zM709 244h1v1h-1zM711 244h1v1h-1zM713 244h1v1h-1zM715 244h1v1h-1zM717 244h1v1h-1zM719 244h1v1h-1zM721 244h1v1h-1zM723 244h1v1h-1zM725 244h1v1h-1zM727 244h1v1h-1zM729 244h1v1h-1zM731 244h1v1h-1zM733 244h1v1h-1zM735 244h1v1h-1zM737 244h1v1h-1zM739 244h1v1h-1zM741 244h1v1h-1zM743 244h1v1h-1zM745 244h1v1h-1zM747 244h1v1h-1zM749 244h1v1h-1zM751 244h1v1h-1zM753 244h1v1h-1zM755 244h1v1h-1zM757 244h1v1h-1zM759 244h1v1h-1zM761 244h1v1h-1zM763 244h1v1h-1zM765 244h1v1h-1zM767 244h1v1h-1zM769 244h1v1h-1zM771 244h1v1h-1zM773 244h1v1h-1zM775 244h1v1h-1zM777 244h1v1h-1zM779 244h1v1h-1zM781 244h1v1h-1zM783 244h1v1h-1zM785 244h1v1h-1zM787 244h1v1h-1zM19 266h1v1h-1zM21 266h1v1h-1zM23 266h1v1h-1zM25 266h1v1h-1zM27 266h1v1h-1zM29 266h1v1h-1zM31 266h1v1h-1zM33 266h1v1h-1zM35 266h1v1h-1zM37 266h1v1h-1zM39 266h1v1h-1zM41 266h1v1h-1zM43 266h1v1h-1zM45 266h1v1h-1zM47 266h1v1h-1zM49 266h1v1h-1zM51 266h1v1h-1zM53 266h1v1h-1zM55 266h1v1h-1zM57 266h1v1h-1zM59 266h1v1h-1zM61 266h1v1h-1zM63 266h1v1h-1zM65 266h1v1h-1zM67 266h1v1h-1zM69 266h1v1h-1zM71 266h1v1h-1zM73 266h1v1h-1zM75 266h1v1h-1zM77 266h1v1h-1zM79 266h1v1h-1zM81 266h1v1h-1zM83 266h1v1h-1zM85 266h1v1h-1zM87 266h1v1h-1zM89 266h1v1h-1zM91 266h1v1h-1zM93 266h1v1h-1zM95 266h1v1h-1zM97 266h1v1h-1zM99 266h1v1h-1zM101 266h1v1h-1zM103 266h1v1h-1zM105 266h1v1h-1zM107 266h1v1h-1zM109 266h1v1h-1zM111 266h1v1h-1zM113 266h1v1h-1zM115 266h1v1h-1zM117 266h1v1h-1zM119 266h1v1h-1zM121 266h1v1h-1zM123 266h1v1h-1zM125 266h1v1h-1zM127 266h1v1h-1zM129 266h1v1h-1zM131 266h1v1h-1zM133 266h1v1h-1zM135 266h1v1h-1zM137 266h1v1h-1zM139 266h1v1h-1zM141 266h1v1h-1zM143 266h1v1h-1zM145 266h1v1h-1zM147 266h1v1h-1zM149 266h1v1h-1zM151 266h1v1h-1zM153 266h1v1h-1zM155 266h1v1h-1zM157 266h1v1h-1zM159 266h1v1h-1zM161 266h1v1h-1zM163 266h1v1h-1zM165 266h1v1h-1zM167 266h1v1h-1zM169 266h1v1h-1zM171 266h1v1h-1zM173 266h1v1h-1zM175 266h1v1h-1zM177 266h1v1h-1zM179 266h1v1h-1zM181 266h1v1h-1zM183 266h1v1h-1zM185 266h1v1h-1zM187 266h1v1h-1zM189 266h1v1h-1zM191 266h1v1h-1zM193 266h1v1h-1zM195 266h1v1h-1zM197 266h1v1h-1zM199 266h1v1h-1zM201 266h1v1h-1zM203 266h1v1h-1zM205 266h1v1h-1zM207 266h1v1h-1zM209 266h1v1h-1zM211 266h1v1h-1zM213 266h1v1h-1zM215 266h1v1h-1zM217 266h1v1h-1zM219 266h1v1h-1zM221 266h1v1h-1zM223 266h1v1h-1zM225 266h1v1h-1zM227 266h1v1h-1zM229 266h1v1h-1zM231 266h1v1h-1zM233 266h1v1h-1zM235 266h1v1h-1zM237 266h1v1h-1zM239 266h1v1h-1zM241 266h1v1h-1zM243 266h1v1h-1zM245 266h1v1h-1zM247 266h1v1h-1zM249 266h1v1h-1zM251 266h1v1h-1zM253 266h1v1h-1zM255 266h1v1h-1zM257 266h1v1h-1zM259 266h1v1h-1zM261 266h1v1h-1zM263 266h1v1h-1zM265 266h1v1h-1zM267 266h1v1h-1zM269 266h1v1h-1zM271 266h1v1h-1zM273 266h1v1h-1zM275 266h1v1h-1zM277 266h1v1h-1zM279 266h1v1h-1zM281 266h1v1h-1zM283 266h1v1h-1zM285 266h1v1h-1zM287 266h1v1h-1zM289 266h1v1h-1zM291 266h1v1h-1zM293 266h1v1h-1zM295 266h1v1h-1zM297 266h1v1h-1zM299 266h1v1h-1zM301 266h1v1h-1zM303 266h1v1h-1zM305 266h1v1h-1zM307 266h1v1h-1zM309 266h1v1h-1zM311 266h1v1h-1zM313 266h1v1h-1zM315 266h1v1h-1zM317 266h1v1h-1zM319 266h1v1h-1zM321 266h1v1h-1zM323 266h1v1h-1zM325 266h1v1h-1zM327 266h1v1h-1zM329 266h1v1h-1zM331 266h1v1h-1zM333 266h1v1h-1zM335 266h1v1h-1zM337 266h1v1h-1zM339 266h1v1h-1zM341 266h1v1h-1zM343 266h1v1h-1zM345 266h1v1h-1zM347 266h1v1h-1zM349 266h1v1h-1zM351 266h1v1h-1zM353 266h1v1h-1zM355 266h1v1h-1zM357 266h1v1h-1zM359 266h1v1h-1zM361 266h1v1h-1zM363 266h1v1h-1zM365 266h1v1h-1zM367 266h1v1h-1zM369 266h1v1h-1zM371 266h1v1h-1zM373 266h1v1h-1zM375 266h1v1h-1zM377 266h1v1h-1zM379 266h1v1h-1zM381 266h1v1h-1zM383 266h1v1h-1zM385 266h1v1h-1zM387 266h1v1h-1zM389 266h1v1h-1zM391 266h1v1h-1zM393 266h1v1h-1zM395 266h1v1h-1zM397 266h1v1h-1zM399 266h1v1h-1zM401 266h1v1h-1zM403 266h1v1h-1zM405 266h1v1h-1zM407 266h1v1h-1zM409 266h1v1h-1zM411 266h1v1h-1zM413 266h1v1h-1zM415 266h1v1h-1zM417 266h1v1h-1zM419 266h1v1h-1zM421 266h1v1h-1zM423 266h1v1h-1zM425 266h1v1h-1zM427 266h1v1h-1zM429 266h1v1h-1zM431 266h1v1h-1zM433 266h1v1h-1zM435 266h1v1h-1zM437 266h1v1h-1zM439 266h1v1h-1zM441 266h1v1h-1zM443 266h1v1h-1zM445 266h1v1h-1zM447 266h1v1h-1zM449 266h1v1h-1zM451 266h1v1h-1zM453 266h1v1h-1zM455 266h1v1h-1zM457 266h1v1h-1zM459 266h1v1h-1zM461 266h1v1h-1zM463 266h1v1h-1zM465 266h1v1h-1zM467 266h1v1h-1zM469 266h1v1h-1zM471 266h1v1h-1zM473 266h1v1h-1zM475 266h1v1h-1zM477 266h1v1h-1zM479 266h1v1h-1zM481 266h1v1h-1zM483 266h1v1h-1zM485 266h1v1h-1zM487 266h1v1h-1zM489 266h1v1h-1zM491 266h1v1h-1zM493 266h1v1h-1zM495 266h1v1h-1zM497 266h1v1h-1zM499 266h1v1h-1zM501 266h1v1h-1zM503 266h1v1h-1zM505 266h1v1h-1zM507 266h1v1h-1zM509 266h1v1h-1zM511 266h1v1h-1zM513 266h1v1h-1zM515 266h1v1h-1zM517 266h1v1h-1zM519 266h1v1h-1zM521 266h1v1h-1zM523 266h1v1h-1zM525 266h1v1h-1zM527 266h1v1h-1zM529 266h1v1h-1zM531 266h1v1h-1zM533 266h1v1h-1zM535 266h1v1h-1zM537 266h1v1h-1zM539 266h1v1h-1zM541 266h1v1h-1zM543 266h1v1h-1zM545 266h1v1h-1zM547 266h1v1h-1zM549 266h1v1h-1zM551 266h1v1h-1zM553 266h1v1h-1zM555 266h1v1h-1zM557 266h1v1h-1zM559 266h1v1h-1zM561 266h1v1h-1zM563 266h1v1h-1zM565 266h1v1h-1zM567 266h1v1h-1zM569 266h1v1h-1zM571 266h1v1h-1zM573 266h1v1h-1zM575 266h1v1h-1zM577 266h1v1h-1zM579 266h1v1h-1zM581 266h1v1h-1zM583 266h1v1h-1zM585 266h1v1h-1zM587 266h1v1h-1zM589 266h1v1h-1zM591 266h1v1h-1zM593 266h1v1h-1zM595 266h1v1h-1zM597 266h1v1h-1zM599 266h1v1h-1zM601 266h1v1h-1zM603 266h1v1h-1zM605 266h1v1h-1zM607 266h1v1h-1zM609 266h1v1h-1zM611 266h1v1h-1zM613 266h1v1h-1zM615 266h1v1h-1zM617 266h1v1h-1zM619 266h1v1h-1zM621 266h1v1h-1zM623 266h1v1h-1zM625 266h1v1h-1zM627 266h1v1h-1zM629 266h1v1h-1zM631 266h1v1h-1zM633 266h1v1h-1zM635 266h1v1h-1zM637 266h1v1h-1zM639 266h1v1h-1zM641 266h1v1h-1zM643 266h1v1h-1zM645 266h1v1h-1zM647 266h1v1h-1zM649 266h1v1h-1zM651 266h1v1h-1zM653 266h1v1h-1zM655 266h1v1h-1zM657 266h1v1h-1zM659 266h1v1h-1zM661 266h1v1h-1zM663 266h1v1h-1zM665 266h1v1h-1zM667 266h1v1h-1zM669 266h1v1h-1zM671 266h1v1h-1zM673 266h1v1h-1zM675 266h1v1h-1zM677 266h1v1h-1zM679 266h1v1h-1zM681 266h1v1h-1zM683 266h1v1h-1zM685 266h1v1h-1zM687 266h1v1h-1zM689 266h1v1h-1zM691 266h1v1h-1zM693 266h1v1h-1zM695 266h1v1h-1zM697 266h1v1h-1zM699 266h1v1h-1zM701 266h1v1h-1zM703 266h1v1h-1zM705 266h1v1h-1zM707 266h1v1h-1zM709 266h1v1h-1zM711 266h1v1h-1zM713 266h1v1h-1zM715 266h1v1h-1zM717 266h1v1h-1zM719 266h1v1h-1zM721 266h1v1h-1zM723 266h1v1h-1zM725 266h1v1h-1zM727 266h1v1h-1zM729 266h1v1h-1zM731 266h1v1h-1zM733 266h1v1h-1zM735 266h1v1h-1zM737 266h1v1h-1zM739 266h1v1h-1zM741 266h1v1h-1zM743 266h1v1h-1zM745 266h1v1h-1zM747 266h1v1h-1zM749 266h1v1h-1zM751 266h1v1h-1zM753 266h1v1h-1zM755 266h1v1h-1zM757 266h1v1h-1zM759 266h1v1h-1zM761 266h1v1h-1zM763 266h1v1h-1zM765 266h1v1h-1zM767 266h1v1h-1zM769 266h1v1h-1zM771 266h1v1h-1zM773 266h1v1h-1zM775 266h1v1h-1zM777 266h1v1h-1zM779 266h1v1h-1zM781 266h1v1h-1zM783 266h1v1h-1zM785 266h1v1h-1zM787 266h1v1h-1zM19 287h1v1h-1zM21 287h1v1h-1zM23 287h1v1h-1zM25 287h1v1h-1zM27 287h1v1h-1zM29 287h1v1h-1zM31 287h1v1h-1zM33 287h1v1h-1zM35 287h1v1h-1zM37 287h1v1h-1zM39 287h1v1h-1zM41 287h1v1h-1zM43 287h1v1h-1zM45 287h1v1h-1zM47 287h1v1h-1zM49 287h1v1h-1zM51 287h1v1h-1zM53 287h1v1h-1zM55 287h1v1h-1zM57 287h1v1h-1zM59 287h1v1h-1zM61 287h1v1h-1zM63 287h1v1h-1zM65 287h1v1h-1zM67 287h1v1h-1zM69 287h1v1h-1zM71 287h1v1h-1zM73 287h1v1h-1zM75 287h1v1h-1zM77 287h1v1h-1zM79 287h1v1h-1zM81 287h1v1h-1zM83 287h1v1h-1zM85 287h1v1h-1zM87 287h1v1h-1zM89 287h1v1h-1zM91 287h1v1h-1zM93 287h1v1h-1zM95 287h1v1h-1zM97 287h1v1h-1zM99 287h1v1h-1zM101 287h1v1h-1zM103 287h1v1h-1zM105 287h1v1h-1zM107 287h1v1h-1zM109 287h1v1h-1zM111 287h1v1h-1zM113 287h1v1h-1zM115 287h1v1h-1zM117 287h1v1h-1zM119 287h1v1h-1zM121 287h1v1h-1zM123 287h1v1h-1zM125 287h1v1h-1zM127 287h1v1h-1zM129 287h1v1h-1zM131 287h1v1h-1zM133 287h1v1h-1zM135 287h1v1h-1zM137 287h1v1h-1zM139 287h1v1h-1zM141 287h1v1h-1zM143 287h1v1h-1zM145 287h1v1h-1zM147 287h1v1h-1zM149 287h1v1h-1zM151 287h1v1h-1zM153 287h1v1h-1zM155 287h1v1h-1zM157 287h1v1h-1zM159 287h1v1h-1zM161 287h1v1h-1zM163 287h1v1h-1zM165 287h1v1h-1zM167 287h1v1h-1zM169 287h1v1h-1zM171 287h1v1h-1zM173 287h1v1h-1zM175 287h1v1h-1zM177 287h1v1h-1zM179 287h1v1h-1zM181 287h1v1h-1zM183 287h1v1h-1zM185 287h1v1h-1zM187 287h1v1h-1zM189 287h1v1h-1zM191 287h1v1h-1zM193 287h1v1h-1zM195 287h1v1h-1zM197 287h1v1h-1zM199 287h1v1h-1zM201 287h1v1h-1zM203 287h1v1h-1zM205 287h1v1h-1zM207 287h1v1h-1zM209 287h1v1h-1zM211 287h1v1h-1zM213 287h1v1h-1zM215 287h1v1h-1zM217 287h1v1h-1zM219 287h1v1h-1zM221 287h1v1h-1zM223 287h1v1h-1zM225 287h1v1h-1zM227 287h1v1h-1zM229 287h1v1h-1zM231 287h1v1h-1zM233 287h1v1h-1zM235 287h1v1h-1zM237 287h1v1h-1zM239 287h1v1h-1zM241 287h1v1h-1zM243 287h1v1h-1zM245 287h1v1h-1zM247 287h1v1h-1zM249 287h1v1h-1zM251 287h1v1h-1zM253 287h1v1h-1zM255 287h1v1h-1zM257 287h1v1h-1zM259 287h1v1h-1zM261 287h1v1h-1zM263 287h1v1h-1zM265 287h1v1h-1zM267 287h1v1h-1zM269 287h1v1h-1zM271 287h1v1h-1zM273 287h1v1h-1zM275 287h1v1h-1zM277 287h1v1h-1zM279 287h1v1h-1zM281 287h1v1h-1zM283 287h1v1h-1zM285 287h1v1h-1zM287 287h1v1h-1zM289 287h1v1h-1zM291 287h1v1h-1zM293 287h1v1h-1zM295 287h1v1h-1zM297 287h1v1h-1zM299 287h1v1h-1zM301 287h1v1h-1zM303 287h1v1h-1zM305 287h1v1h-1zM307 287h1v1h-1zM309 287h1v1h-1zM311 287h1v1h-1zM313 287h1v1h-1zM315 287h1v1h-1zM317 287h1v1h-1zM319 287h1v1h-1zM321 287h1v1h-1zM323 287h1v1h-1zM325 287h1v1h-1zM327 287h1v1h-1zM329 287h1v1h-1zM331 287h1v1h-1zM333 287h1v1h-1zM335 287h1v1h-1zM337 287h1v1h-1zM339 287h1v1h-1zM341 287h1v1h-1zM343 287h1v1h-1zM345 287h1v1h-1zM347 287h1v1h-1zM349 287h1v1h-1zM351 287h1v1h-1zM353 287h1v1h-1zM355 287h1v1h-1zM357 287h1v1h-1zM359 287h1v1h-1zM361 287h1v1h-1zM363 287h1v1h-1zM365 287h1v1h-1zM367 287h1v1h-1zM369 287h1v1h-1zM371 287h1v1h-1zM373 287h1v1h-1zM375 287h1v1h-1zM377 287h1v1h-1zM379 287h1v1h-1zM381 287h1v1h-1zM383 287h1v1h-1zM385 287h1v1h-1zM387 287h1v1h-1zM389 287h1v1h-1zM391 287h1v1h-1zM393 287h1v1h-1zM395 287h1v1h-1zM397 287h1v1h-1zM399 287h1v1h-1zM401 287h1v1h-1zM403 287h1v1h-1zM405 287h1v1h-1zM407 287h1v1h-1zM409 287h1v1h-1zM411 287h1v1h-1zM413 287h1v1h-1zM415 287h1v1h-1zM417 287h1v1h-1zM419 287h1v1h-1zM421 287h1v1h-1zM423 287h1v1h-1zM425 287h1v1h-1zM427 287h1v1h-1zM429 287h1v1h-1zM431 287h1v1h-1zM433 287h1v1h-1zM435 287h1v1h-1zM437 287h1v1h-1zM439 287h1v1h-1zM441 287h1v1h-1zM443 287h1v1h-1zM445 287h1v1h-1zM447 287h1v1h-1zM449 287h1v1h-1zM451 287h1v1h-1zM453 287h1v1h-1zM455 287h1v1h-1zM457 287h1v1h-1zM459 287h1v1h-1zM461 287h1v1h-1zM463 287h1v1h-1zM465 287h1v1h-1zM467 287h1v1h-1zM469 287h1v1h-1zM471 287h1v1h-1zM473 287h1v1h-1zM475 287h1v1h-1zM477 287h1v1h-1zM479 287h1v1h-1zM481 287h1v1h-1zM483 287h1v1h-1zM485 287h1v1h-1zM487 287h1v1h-1zM489 287h1v1h-1zM491 287h1v1h-1zM493 287h1v1h-1zM495 287h1v1h-1zM497 287h1v1h-1zM499 287h1v1h-1zM501 287h1v1h-1zM503 287h1v1h-1zM505 287h1v1h-1zM507 287h1v1h-1zM509 287h1v1h-1zM511 287h1v1h-1zM513 287h1v1h-1zM515 287h1v1h-1zM517 287h1v1h-1zM519 287h1v1h-1zM521 287h1v1h-1zM523 287h1v1h-1zM525 287h1v1h-1zM527 287h1v1h-1zM529 287h1v1h-1zM531 287h1v1h-1zM533 287h1v1h-1zM535 287h1v1h-1zM537 287h1v1h-1zM539 287h1v1h-1zM541 287h1v1h-1zM543 287h1v1h-1zM545 287h1v1h-1zM547 287h1v1h-1zM549 287h1v1h-1zM551 287h1v1h-1zM553 287h1v1h-1zM555 287h1v1h-1zM557 287h1v1h-1zM559 287h1v1h-1zM561 287h1v1h-1zM563 287h1v1h-1zM565 287h1v1h-1zM567 287h1v1h-1zM569 287h1v1h-1zM571 287h1v1h-1zM573 287h1v1h-1zM575 287h1v1h-1zM577 287h1v1h-1zM579 287h1v1h-1zM581 287h1v1h-1zM583 287h1v1h-1zM585 287h1v1h-1zM587 287h1v1h-1zM589 287h1v1h-1zM591 287h1v1h-1zM593 287h1v1h-1zM595 287h1v1h-1zM597 287h1v1h-1zM599 287h1v1h-1zM601 287h1v1h-1zM603 287h1v1h-1zM605 287h1v1h-1zM607 287h1v1h-1zM609 287h1v1h-1zM611 287h1v1h-1zM613 287h1v1h-1zM615 287h1v1h-1zM617 287h1v1h-1zM619 287h1v1h-1zM621 287h1v1h-1zM623 287h1v1h-1zM625 287h1v1h-1zM627 287h1v1h-1zM629 287h1v1h-1zM631 287h1v1h-1zM633 287h1v1h-1zM635 287h1v1h-1zM637 287h1v1h-1zM639 287h1v1h-1zM641 287h1v1h-1zM643 287h1v1h-1zM645 287h1v1h-1zM647 287h1v1h-1zM649 287h1v1h-1zM651 287h1v1h-1zM653 287h1v1h-1zM655 287h1v1h-1zM657 287h1v1h-1zM659 287h1v1h-1zM661 287h1v1h-1zM663 287h1v1h-1zM665 287h1v1h-1zM667 287h1v1h-1zM669 287h1v1h-1zM671 287h1v1h-1zM673 287h1v1h-1zM675 287h1v1h-1zM677 287h1v1h-1zM679 287h1v1h-1zM681 287h1v1h-1zM683 287h1v1h-1zM685 287h1v1h-1zM687 287h1v1h-1zM689 287h1v1h-1zM691 287h1v1h-1zM693 287h1v1h-1zM695 287h1v1h-1zM697 287h1v1h-1zM699 287h1v1h-1zM701 287h1v1h-1zM703 287h1v1h-1zM705 287h1v1h-1zM707 287h1v1h-1zM709 287h1v1h-1zM711 287h1v1h-1zM713 287h1v1h-1zM715 287h1v1h-1zM717 287h1v1h-1zM719 287h1v1h-1zM721 287h1v1h-1zM723 287h1v1h-1zM725 287h1v1h-1zM727 287h1v1h-1zM729 287h1v1h-1zM731 287h1v1h-1zM733 287h1v1h-1zM735 287h1v1h-1zM737 287h1v1h-1zM739 287h1v1h-1zM741 287h1v1h-1zM743 287h1v1h-1zM745 287h1v1h-1zM747 287h1v1h-1zM749 287h1v1h-1zM751 287h1v1h-1zM753 287h1v1h-1zM755 287h1v1h-1zM757 287h1v1h-1zM759 287h1v1h-1zM761 287h1v1h-1zM763 287h1v1h-1zM765 287h1v1h-1zM767 287h1v1h-1zM769 287h1v1h-1zM771 287h1v1h-1zM773 287h1v1h-1zM775 287h1v1h-1zM777 287h1v1h-1zM779 287h1v1h-1zM781 287h1v1h-1zM783 287h1v1h-1zM785 287h1v1h-1zM787 287h1v1h-1zM19 331h1v1h-1zM21 331h1v1h-1zM23 331h1v1h-1zM25 331h1v1h-1zM27 331h1v1h-1zM29 331h1v1h-1zM31 331h1v1h-1zM33 331h1v1h-1zM35 331h1v1h-1zM37 331h1v1h-1zM39 331h1v1h-1zM41 331h1v1h-1zM43 331h1v1h-1zM45 331h1v1h-1zM47 331h1v1h-1zM49 331h1v1h-1zM51 331h1v1h-1zM53 331h1v1h-1zM55 331h1v1h-1zM57 331h1v1h-1zM59 331h1v1h-1zM61 331h1v1h-1zM63 331h1v1h-1zM65 331h1v1h-1zM67 331h1v1h-1zM69 331h1v1h-1zM71 331h1v1h-1zM73 331h1v1h-1zM75 331h1v1h-1zM77 331h1v1h-1zM79 331h1v1h-1zM81 331h1v1h-1zM83 331h1v1h-1zM85 331h1v1h-1zM87 331h1v1h-1zM89 331h1v1h-1zM91 331h1v1h-1zM93 331h1v1h-1zM95 331h1v1h-1zM97 331h1v1h-1zM99 331h1v1h-1zM101 331h1v1h-1zM103 331h1v1h-1zM105 331h1v1h-1zM107 331h1v1h-1zM109 331h1v1h-1zM111 331h1v1h-1zM113 331h1v1h-1zM115 331h1v1h-1zM117 331h1v1h-1zM119 331h1v1h-1zM121 331h1v1h-1zM123 331h1v1h-1zM125 331h1v1h-1zM127 331h1v1h-1zM129 331h1v1h-1zM131 331h1v1h-1zM133 331h1v1h-1zM135 331h1v1h-1zM137 331h1v1h-1zM139 331h1v1h-1zM141 331h1v1h-1zM143 331h1v1h-1zM145 331h1v1h-1zM147 331h1v1h-1zM149 331h1v1h-1zM151 331h1v1h-1zM153 331h1v1h-1zM155 331h1v1h-1zM157 331h1v1h-1zM159 331h1v1h-1zM161 331h1v1h-1zM163 331h1v1h-1zM165 331h1v1h-1zM167 331h1v1h-1zM169 331h1v1h-1zM171 331h1v1h-1zM173 331h1v1h-1zM175 331h1v1h-1zM177 331h1v1h-1zM179 331h1v1h-1zM181 331h1v1h-1zM183 331h1v1h-1zM185 331h1v1h-1zM187 331h1v1h-1zM189 331h1v1h-1zM191 331h1v1h-1zM193 331h1v1h-1zM195 331h1v1h-1zM197 331h1v1h-1zM199 331h1v1h-1zM201 331h1v1h-1zM203 331h1v1h-1zM205 331h1v1h-1zM207 331h1v1h-1zM209 331h1v1h-1zM211 331h1v1h-1zM213 331h1v1h-1zM215 331h1v1h-1zM217 331h1v1h-1zM219 331h1v1h-1zM221 331h1v1h-1zM223 331h1v1h-1zM225 331h1v1h-1zM227 331h1v1h-1zM229 331h1v1h-1zM231 331h1v1h-1zM233 331h1v1h-1zM235 331h1v1h-1zM237 331h1v1h-1zM239 331h1v1h-1zM241 331h1v1h-1zM243 331h1v1h-1zM245 331h1v1h-1zM247 331h1v1h-1zM249 331h1v1h-1zM251 331h1v1h-1zM253 331h1v1h-1zM255 331h1v1h-1zM257 331h1v1h-1zM259 331h1v1h-1zM261 331h1v1h-1zM263 331h1v1h-1zM265 331h1v1h-1zM267 331h1v1h-1zM269 331h1v1h-1zM271 331h1v1h-1zM273 331h1v1h-1zM275 331h1v1h-1zM277 331h1v1h-1zM279 331h1v1h-1zM281 331h1v1h-1zM283 331h1v1h-1zM285 331h1v1h-1zM287 331h1v1h-1zM289 331h1v1h-1zM291 331h1v1h-1zM293 331h1v1h-1zM295 331h1v1h-1zM297 331h1v1h-1zM299 331h1v1h-1zM301 331h1v1h-1zM303 331h1v1h-1zM305 331h1v1h-1zM307 331h1v1h-1zM309 331h1v1h-1zM311 331h1v1h-1zM313 331h1v1h-1zM315 331h1v1h-1zM317 331h1v1h-1zM319 331h1v1h-1zM321 331h1v1h-1zM323 331h1v1h-1zM325 331h1v1h-1zM327 331h1v1h-1zM329 331h1v1h-1zM331 331h1v1h-1zM333 331h1v1h-1zM335 331h1v1h-1zM337 331h1v1h-1zM339 331h1v1h-1zM341 331h1v1h-1zM343 331h1v1h-1zM345 331h1v1h-1zM347 331h1v1h-1zM349 331h1v1h-1zM351 331h1v1h-1zM353 331h1v1h-1zM355 331h1v1h-1zM357 331h1v1h-1zM359 331h1v1h-1zM361 331h1v1h-1zM363 331h1v1h-1zM365 331h1v1h-1zM367 331h1v1h-1zM369 331h1v1h-1zM371 331h1v1h-1zM373 331h1v1h-1zM375 331h1v1h-1zM377 331h1v1h-1zM379 331h1v1h-1zM381 331h1v1h-1zM383 331h1v1h-1zM385 331h1v1h-1zM387 331h1v1h-1zM389 331h1v1h-1zM391 331h1v1h-1zM393 331h1v1h-1zM395 331h1v1h-1zM397 331h1v1h-1zM399 331h1v1h-1zM401 331h1v1h-1zM403 331h1v1h-1zM405 331h1v1h-1zM407 331h1v1h-1zM409 331h1v1h-1zM411 331h1v1h-1zM413 331h1v1h-1zM415 331h1v1h-1zM417 331h1v1h-1zM419 331h1v1h-1zM421 331h1v1h-1zM423 331h1v1h-1zM425 331h1v1h-1zM427 331h1v1h-1zM429 331h1v1h-1zM431 331h1v1h-1zM433 331h1v1h-1zM435 331h1v1h-1zM437 331h1v1h-1zM439 331h1v1h-1zM441 331h1v1h-1zM443 331h1v1h-1zM445 331h1v1h-1zM447 331h1v1h-1zM449 331h1v1h-1zM451 331h1v1h-1zM453 331h1v1h-1zM455 331h1v1h-1zM457 331h1v1h-1zM459 331h1v1h-1zM461 331h1v1h-1zM463 331h1v1h-1zM465 331h1v1h-1zM467 331h1v1h-1zM469 331h1v1h-1zM471 331h1v1h-1zM473 331h1v1h-1zM475 331h1v1h-1zM477 331h1v1h-1zM479 331h1v1h-1zM481 331h1v1h-1zM483 331h1v1h-1zM485 331h1v1h-1zM487 331h1v1h-1zM489 331h1v1h-1zM491 331h1v1h-1zM493 331h1v1h-1zM495 331h1v1h-1zM497 331h1v1h-1zM499 331h1v1h-1zM501 331h1v1h-1zM503 331h1v1h-1zM505 331h1v1h-1zM507 331h1v1h-1zM509 331h1v1h-1zM511 331h1v1h-1zM513 331h1v1h-1zM515 331h1v1h-1zM517 331h1v1h-1zM519 331h1v1h-1zM521 331h1v1h-1zM523 331h1v1h-1zM525 331h1v1h-1zM527 331h1v1h-1zM529 331h1v1h-1zM531 331h1v1h-1zM533 331h1v1h-1zM535 331h1v1h-1zM537 331h1v1h-1zM539 331h1v1h-1zM541 331h1v1h-1zM543 331h1v1h-1zM545 331h1v1h-1zM547 331h1v1h-1zM549 331h1v1h-1zM551 331h1v1h-1zM553 331h1v1h-1zM555 331h1v1h-1zM557 331h1v1h-1zM559 331h1v1h-1zM561 331h1v1h-1zM563 331h1v1h-1zM565 331h1v1h-1zM567 331h1v1h-1zM569 331h1v1h-1zM571 331h1v1h-1zM573 331h1v1h-1zM575 331h1v1h-1zM577 331h1v1h-1zM579 331h1v1h-1zM581 331h1v1h-1zM583 331h1v1h-1zM585 331h1v1h-1zM587 331h1v1h-1zM589 331h1v1h-1zM591 331h1v1h-1zM593 331h1v1h-1zM595 331h1v1h-1zM597 331h1v1h-1zM599 331h1v1h-1zM601 331h1v1h-1zM603 331h1v1h-1zM605 331h1v1h-1zM607 331h1v1h-1zM609 331h1v1h-1zM611 331h1v1h-1zM613 331h1v1h-1zM615 331h1v1h-1zM617 331h1v1h-1zM619 331h1v1h-1zM621 331h1v1h-1zM623 331h1v1h-1zM625 331h1v1h-1zM627 331h1v1h-1zM629 331h1v1h-1zM631 331h1v1h-1zM633 331h1v1h-1zM635 331h1v1h-1zM637 331h1v1h-1zM639 331h1v1h-1zM641 331h1v1h-1zM643 331h1v1h-1zM645 331h1v1h-1zM647 331h1v1h-1zM649 331h1v1h-1zM651 331h1v1h-1zM653 331h1v1h-1zM655 331h1v1h-1zM657 331h1v1h-1zM659 331h1v1h-1zM661 331h1v1h-1zM663 331h1v1h-1zM665 331h1v1h-1zM667 331h1v1h-1zM669 331h1v1h-1zM671 331h1v1h-1zM673 331h1v1h-1zM675 331h1v1h-1zM677 331h1v1h-1zM679 331h1v1h-1zM681 331h1v1h-1zM683 331h1v1h-1zM685 331h1v1h-1zM687 331h1v1h-1zM689 331h1v1h-1zM691 331h1v1h-1zM693 331h1v1h-1zM695 331h1v1h-1zM697 331h1v1h-1zM699 331h1v1h-1zM701 331h1v1h-1zM703 331h1v1h-1zM705 331h1v1h-1zM707 331h1v1h-1zM709 331h1v1h-1zM711 331h1v1h-1zM713 331h1v1h-1zM715 331h1v1h-1zM717 331h1v1h-1zM719 331h1v1h-1zM721 331h1v1h-1zM723 331h1v1h-1zM725 331h1v1h-1zM727 331h1v1h-1zM729 331h1v1h-1zM731 331h1v1h-1zM733 331h1v1h-1zM735 331h1v1h-1zM737 331h1v1h-1zM739 331h1v1h-1zM741 331h1v1h-1zM743 331h1v1h-1zM745 331h1v1h-1zM747 331h1v1h-1zM749 331h1v1h-1zM751 331h1v1h-1zM753 331h1v1h-1zM755 331h1v1h-1zM757 331h1v1h-1zM759 331h1v1h-1zM761 331h1v1h-1zM763 331h1v1h-1zM765 331h1v1h-1zM767 331h1v1h-1zM769 331h1v1h-1zM771 331h1v1h-1zM773 331h1v1h-1zM775 331h1v1h-1zM777 331h1v1h-1zM779 331h1v1h-1zM781 331h1v1h-1zM783 331h1v1h-1zM785 331h1v1h-1zM787 331h1v1h-1zM19 352h1v1h-1zM21 352h1v1h-1zM23 352h1v1h-1zM25 352h1v1h-1zM27 352h1v1h-1zM29 352h1v1h-1zM31 352h1v1h-1zM33 352h1v1h-1zM35 352h1v1h-1zM37 352h1v1h-1zM39 352h1v1h-1zM41 352h1v1h-1zM43 352h1v1h-1zM45 352h1v1h-1zM47 352h1v1h-1zM49 352h1v1h-1zM51 352h1v1h-1zM53 352h1v1h-1zM55 352h1v1h-1zM57 352h1v1h-1zM59 352h1v1h-1zM61 352h1v1h-1zM63 352h1v1h-1zM65 352h1v1h-1zM67 352h1v1h-1zM69 352h1v1h-1zM71 352h1v1h-1zM73 352h1v1h-1zM75 352h1v1h-1zM77 352h1v1h-1zM79 352h1v1h-1zM81 352h1v1h-1zM83 352h1v1h-1zM85 352h1v1h-1zM87 352h1v1h-1zM89 352h1v1h-1zM91 352h1v1h-1zM93 352h1v1h-1zM95 352h1v1h-1zM97 352h1v1h-1zM99 352h1v1h-1zM101 352h1v1h-1zM103 352h1v1h-1zM105 352h1v1h-1zM107 352h1v1h-1zM109 352h1v1h-1zM111 352h1v1h-1zM113 352h1v1h-1zM115 352h1v1h-1zM117 352h1v1h-1zM119 352h1v1h-1zM121 352h1v1h-1zM123 352h1v1h-1zM125 352h1v1h-1zM127 352h1v1h-1zM129 352h1v1h-1zM131 352h1v1h-1zM133 352h1v1h-1zM135 352h1v1h-1zM137 352h1v1h-1zM139 352h1v1h-1zM141 352h1v1h-1zM143 352h1v1h-1zM145 352h1v1h-1zM147 352h1v1h-1zM149 352h1v1h-1zM151 352h1v1h-1zM153 352h1v1h-1zM155 352h1v1h-1zM157 352h1v1h-1zM159 352h1v1h-1zM161 352h1v1h-1zM163 352h1v1h-1zM165 352h1v1h-1zM167 352h1v1h-1zM169 352h1v1h-1zM171 352h1v1h-1zM173 352h1v1h-1zM175 352h1v1h-1zM177 352h1v1h-1zM179 352h1v1h-1zM181 352h1v1h-1zM183 352h1v1h-1zM185 352h1v1h-1zM187 352h1v1h-1zM189 352h1v1h-1zM191 352h1v1h-1zM193 352h1v1h-1zM195 352h1v1h-1zM197 352h1v1h-1zM199 352h1v1h-1zM201 352h1v1h-1zM203 352h1v1h-1zM205 352h1v1h-1zM207 352h1v1h-1zM209 352h1v1h-1zM211 352h1v1h-1zM213 352h1v1h-1zM215 352h1v1h-1zM217 352h1v1h-1zM219 352h1v1h-1zM221 352h1v1h-1zM223 352h1v1h-1zM225 352h1v1h-1zM227 352h1v1h-1zM229 352h1v1h-1zM231 352h1v1h-1zM233 352h1v1h-1zM235 352h1v1h-1zM237 352h1v1h-1zM239 352h1v1h-1zM241 352h1v1h-1zM243 352h1v1h-1zM245 352h1v1h-1zM247 352h1v1h-1zM249 352h1v1h-1zM251 352h1v1h-1zM253 352h1v1h-1zM255 352h1v1h-1zM257 352h1v1h-1zM259 352h1v1h-1zM261 352h1v1h-1zM263 352h1v1h-1zM265 352h1v1h-1zM267 352h1v1h-1zM269 352h1v1h-1zM271 352h1v1h-1zM273 352h1v1h-1zM275 352h1v1h-1zM277 352h1v1h-1zM279 352h1v1h-1zM281 352h1v1h-1zM283 352h1v1h-1zM285 352h1v1h-1zM287 352h1v1h-1zM289 352h1v1h-1zM291 352h1v1h-1zM293 352h1v1h-1zM295 352h1v1h-1zM297 352h1v1h-1zM299 352h1v1h-1zM301 352h1v1h-1zM303 352h1v1h-1zM305 352h1v1h-1zM307 352h1v1h-1zM309 352h1v1h-1zM311 352h1v1h-1zM313 352h1v1h-1zM315 352h1v1h-1zM317 352h1v1h-1zM319 352h1v1h-1zM321 352h1v1h-1zM323 352h1v1h-1zM325 352h1v1h-1zM327 352h1v1h-1zM329 352h1v1h-1zM331 352h1v1h-1zM333 352h1v1h-1zM335 352h1v1h-1zM337 352h1v1h-1zM339 352h1v1h-1zM341 352h1v1h-1zM343 352h1v1h-1zM345 352h1v1h-1zM347 352h1v1h-1zM349 352h1v1h-1zM351 352h1v1h-1zM353 352h1v1h-1zM355 352h1v1h-1zM357 352h1v1h-1zM359 352h1v1h-1zM361 352h1v1h-1zM363 352h1v1h-1zM365 352h1v1h-1zM367 352h1v1h-1zM369 352h1v1h-1zM371 352h1v1h-1zM373 352h1v1h-1zM375 352h1v1h-1zM377 352h1v1h-1zM379 352h1v1h-1zM381 352h1v1h-1zM383 352h1v1h-1zM385 352h1v1h-1zM387 352h1v1h-1zM389 352h1v1h-1zM391 352h1v1h-1zM393 352h1v1h-1zM395 352h1v1h-1zM397 352h1v1h-1zM399 352h1v1h-1zM401 352h1v1h-1zM403 352h1v1h-1zM405 352h1v1h-1zM407 352h1v1h-1zM409 352h1v1h-1zM411 352h1v1h-1zM413 352h1v1h-1zM415 352h1v1h-1zM417 352h1v1h-1zM419 352h1v1h-1zM421 352h1v1h-1zM423 352h1v1h-1zM425 352h1v1h-1zM427 352h1v1h-1zM429 352h1v1h-1zM431 352h1v1h-1zM433 352h1v1h-1zM435 352h1v1h-1zM437 352h1v1h-1zM439 352h1v1h-1zM441 352h1v1h-1zM443 352h1v1h-1zM445 352h1v1h-1zM447 352h1v1h-1zM449 352h1v1h-1zM451 352h1v1h-1zM453 352h1v1h-1zM455 352h1v1h-1zM457 352h1v1h-1zM459 352h1v1h-1zM461 352h1v1h-1zM463 352h1v1h-1zM465 352h1v1h-1zM467 352h1v1h-1zM469 352h1v1h-1zM471 352h1v1h-1zM473 352h1v1h-1zM475 352h1v1h-1zM477 352h1v1h-1zM479 352h1v1h-1zM481 352h1v1h-1zM483 352h1v1h-1zM485 352h1v1h-1zM487 352h1v1h-1zM489 352h1v1h-1zM491 352h1v1h-1zM493 352h1v1h-1zM495 352h1v1h-1zM497 352h1v1h-1zM499 352h1v1h-1zM501 352h1v1h-1zM503 352h1v1h-1zM505 352h1v1h-1zM507 352h1v1h-1zM509 352h1v1h-1zM511 352h1v1h-1zM513 352h1v1h-1zM515 352h1v1h-1zM517 352h1v1h-1zM519 352h1v1h-1zM521 352h1v1h-1zM523 352h1v1h-1zM525 352h1v1h-1zM527 352h1v1h-1zM529 352h1v1h-1zM531 352h1v1h-1zM533 352h1v1h-1zM535 352h1v1h-1zM537 352h1v1h-1zM539 352h1v1h-1zM541 352h1v1h-1zM543 352h1v1h-1zM545 352h1v1h-1zM547 352h1v1h-1zM549 352h1v1h-1zM551 352h1v1h-1zM553 352h1v1h-1zM555 352h1v1h-1zM557 352h1v1h-1zM559 352h1v1h-1zM561 352h1v1h-1zM563 352h1v1h-1zM565 352h1v1h-1zM567 352h1v1h-1zM569 352h1v1h-1zM571 352h1v1h-1zM573 352h1v1h-1zM575 352h1v1h-1zM577 352h1v1h-1zM579 352h1v1h-1zM581 352h1v1h-1zM583 352h1v1h-1zM585 352h1v1h-1zM587 352h1v1h-1zM589 352h1v1h-1zM591 352h1v1h-1zM593 352h1v1h-1zM595 352h1v1h-1zM597 352h1v1h-1zM599 352h1v1h-1zM601 352h1v1h-1zM603 352h1v1h-1zM605 352h1v1h-1zM607 352h1v1h-1zM609 352h1v1h-1zM611 352h1v1h-1zM613 352h1v1h-1zM615 352h1v1h-1zM617 352h1v1h-1zM619 352h1v1h-1zM621 352h1v1h-1zM623 352h1v1h-1zM625 352h1v1h-1zM627 352h1v1h-1zM629 352h1v1h-1zM631 352h1v1h-1zM633 352h1v1h-1zM635 352h1v1h-1zM637 352h1v1h-1zM639 352h1v1h-1zM641 352h1v1h-1zM643 352h1v1h-1zM645 352h1v1h-1zM647 352h1v1h-1zM649 352h1v1h-1zM651 352h1v1h-1zM653 352h1v1h-1zM655 352h1v1h-1zM657 352h1v1h-1zM659 352h1v1h-1zM661 352h1v1h-1zM663 352h1v1h-1zM665 352h1v1h-1zM667 352h1v1h-1zM669 352h1v1h-1zM671 352h1v1h-1zM673 352h1v1h-1zM675 352h1v1h-1zM677 352h1v1h-1zM679 352h1v1h-1zM681 352h1v1h-1zM683 352h1v1h-1zM685 352h1v1h-1zM687 352h1v1h-1zM689 352h1v1h-1zM691 352h1v1h-1zM693 352h1v1h-1zM695 352h1v1h-1zM697 352h1v1h-1zM699 352h1v1h-1zM701 352h1v1h-1zM703 352h1v1h-1zM705 352h1v1h-1zM707 352h1v1h-1zM709 352h1v1h-1zM711 352h1v1h-1zM713 352h1v1h-1zM715 352h1v1h-1zM717 352h1v1h-1zM719 352h1v1h-1zM721 352h1v1h-1zM723 352h1v1h-1zM725 352h1v1h-1zM727 352h1v1h-1zM729 352h1v1h-1zM731 352h1v1h-1zM733 352h1v1h-1zM735 352h1v1h-1zM737 352h1v1h-1zM739 352h1v1h-1zM741 352h1v1h-1zM743 352h1v1h-1zM745 352h1v1h-1zM747 352h1v1h-1zM749 352h1v1h-1zM751 352h1v1h-1zM753 352h1v1h-1zM755 352h1v1h-1zM757 352h1v1h-1zM759 352h1v1h-1zM761 352h1v1h-1zM763 352h1v1h-1zM765 352h1v1h-1zM767 352h1v1h-1zM769 352h1v1h-1zM771 352h1v1h-1zM773 352h1v1h-1zM775 352h1v1h-1zM777 352h1v1h-1zM779 352h1v1h-1zM781 352h1v1h-1zM783 352h1v1h-1zM785 352h1v1h-1zM787 352h1v1h-1zM19 374h1v1h-1zM21 374h1v1h-1zM23 374h1v1h-1zM25 374h1v1h-1zM27 374h1v1h-1zM29 374h1v1h-1zM31 374h1v1h-1zM33 374h1v1h-1zM35 374h1v1h-1zM37 374h1v1h-1zM39 374h1v1h-1zM41 374h1v1h-1zM43 374h1v1h-1zM45 374h1v1h-1zM47 374h1v1h-1zM49 374h1v1h-1zM51 374h1v1h-1zM53 374h1v1h-1zM55 374h1v1h-1zM57 374h1v1h-1zM59 374h1v1h-1zM61 374h1v1h-1zM63 374h1v1h-1zM65 374h1v1h-1zM67 374h1v1h-1zM69 374h1v1h-1zM71 374h1v1h-1zM73 374h1v1h-1zM75 374h1v1h-1zM77 374h1v1h-1zM79 374h1v1h-1zM81 374h1v1h-1zM83 374h1v1h-1zM85 374h1v1h-1zM87 374h1v1h-1zM89 374h1v1h-1zM91 374h1v1h-1zM93 374h1v1h-1zM95 374h1v1h-1zM97 374h1v1h-1zM99 374h1v1h-1zM101 374h1v1h-1zM103 374h1v1h-1zM105 374h1v1h-1zM107 374h1v1h-1zM109 374h1v1h-1zM111 374h1v1h-1zM113 374h1v1h-1zM115 374h1v1h-1zM117 374h1v1h-1zM119 374h1v1h-1zM121 374h1v1h-1zM123 374h1v1h-1zM125 374h1v1h-1zM127 374h1v1h-1zM129 374h1v1h-1zM131 374h1v1h-1zM133 374h1v1h-1zM135 374h1v1h-1zM137 374h1v1h-1zM139 374h1v1h-1zM141 374h1v1h-1zM143 374h1v1h-1zM145 374h1v1h-1zM147 374h1v1h-1zM149 374h1v1h-1zM151 374h1v1h-1zM153 374h1v1h-1zM155 374h1v1h-1zM157 374h1v1h-1zM159 374h1v1h-1zM161 374h1v1h-1zM163 374h1v1h-1zM165 374h1v1h-1zM167 374h1v1h-1zM169 374h1v1h-1zM171 374h1v1h-1zM173 374h1v1h-1zM175 374h1v1h-1zM177 374h1v1h-1zM179 374h1v1h-1zM181 374h1v1h-1zM183 374h1v1h-1zM185 374h1v1h-1zM187 374h1v1h-1zM189 374h1v1h-1zM191 374h1v1h-1zM193 374h1v1h-1zM195 374h1v1h-1zM197 374h1v1h-1zM199 374h1v1h-1zM201 374h1v1h-1zM203 374h1v1h-1zM205 374h1v1h-1zM207 374h1v1h-1zM209 374h1v1h-1zM211 374h1v1h-1zM213 374h1v1h-1zM215 374h1v1h-1zM217 374h1v1h-1zM219 374h1v1h-1zM221 374h1v1h-1zM223 374h1v1h-1zM225 374h1v1h-1zM227 374h1v1h-1zM229 374h1v1h-1zM231 374h1v1h-1zM233 374h1v1h-1zM235 374h1v1h-1zM237 374h1v1h-1zM239 374h1v1h-1zM241 374h1v1h-1zM243 374h1v1h-1zM245 374h1v1h-1zM247 374h1v1h-1zM249 374h1v1h-1zM251 374h1v1h-1zM253 374h1v1h-1zM255 374h1v1h-1zM257 374h1v1h-1zM259 374h1v1h-1zM261 374h1v1h-1zM263 374h1v1h-1zM265 374h1v1h-1zM267 374h1v1h-1zM269 374h1v1h-1zM271 374h1v1h-1zM273 374h1v1h-1zM275 374h1v1h-1zM277 374h1v1h-1zM279 374h1v1h-1zM281 374h1v1h-1zM283 374h1v1h-1zM285 374h1v1h-1zM287 374h1v1h-1zM289 374h1v1h-1zM291 374h1v1h-1zM293 374h1v1h-1zM295 374h1v1h-1zM297 374h1v1h-1zM299 374h1v1h-1zM301 374h1v1h-1zM303 374h1v1h-1zM305 374h1v1h-1zM307 374h1v1h-1zM309 374h1v1h-1zM311 374h1v1h-1zM313 374h1v1h-1zM315 374h1v1h-1zM317 374h1v1h-1zM319 374h1v1h-1zM321 374h1v1h-1zM323 374h1v1h-1zM325 374h1v1h-1zM327 374h1v1h-1zM329 374h1v1h-1zM331 374h1v1h-1zM333 374h1v1h-1zM335 374h1v1h-1zM337 374h1v1h-1zM339 374h1v1h-1zM341 374h1v1h-1zM343 374h1v1h-1zM345 374h1v1h-1zM347 374h1v1h-1zM349 374h1v1h-1zM351 374h1v1h-1zM353 374h1v1h-1zM355 374h1v1h-1zM357 374h1v1h-1zM359 374h1v1h-1zM361 374h1v1h-1zM363 374h1v1h-1zM365 374h1v1h-1zM367 374h1v1h-1zM369 374h1v1h-1zM371 374h1v1h-1zM373 374h1v1h-1zM375 374h1v1h-1zM377 374h1v1h-1zM379 374h1v1h-1zM381 374h1v1h-1zM383 374h1v1h-1zM385 374h1v1h-1zM387 374h1v1h-1zM389 374h1v1h-1zM391 374h1v1h-1zM393 374h1v1h-1zM395 374h1v1h-1zM397 374h1v1h-1zM399 374h1v1h-1zM401 374h1v1h-1zM403 374h1v1h-1zM405 374h1v1h-1zM407 374h1v1h-1zM409 374h1v1h-1zM411 374h1v1h-1zM413 374h1v1h-1zM415 374h1v1h-1zM417 374h1v1h-1zM419 374h1v1h-1zM421 374h1v1h-1zM423 374h1v1h-1zM425 374h1v1h-1zM427 374h1v1h-1zM429 374h1v1h-1zM431 374h1v1h-1zM433 374h1v1h-1zM435 374h1v1h-1zM437 374h1v1h-1zM439 374h1v1h-1zM441 374h1v1h-1zM443 374h1v1h-1zM445 374h1v1h-1zM447 374h1v1h-1zM449 374h1v1h-1zM451 374h1v1h-1zM453 374h1v1h-1zM455 374h1v1h-1zM457 374h1v1h-1zM459 374h1v1h-1zM461 374h1v1h-1zM463 374h1v1h-1zM465 374h1v1h-1zM467 374h1v1h-1zM469 374h1v1h-1zM471 374h1v1h-1zM473 374h1v1h-1zM475 374h1v1h-1zM477 374h1v1h-1zM479 374h1v1h-1zM481 374h1v1h-1zM483 374h1v1h-1zM485 374h1v1h-1zM487 374h1v1h-1zM489 374h1v1h-1zM491 374h1v1h-1zM493 374h1v1h-1zM495 374h1v1h-1zM497 374h1v1h-1zM499 374h1v1h-1zM501 374h1v1h-1zM503 374h1v1h-1zM505 374h1v1h-1zM507 374h1v1h-1zM509 374h1v1h-1zM511 374h1v1h-1zM513 374h1v1h-1zM515 374h1v1h-1zM517 374h1v1h-1zM519 374h1v1h-1zM521 374h1v1h-1zM523 374h1v1h-1zM525 374h1v1h-1zM527 374h1v1h-1zM529 374h1v1h-1zM531 374h1v1h-1zM533 374h1v1h-1zM535 374h1v1h-1zM537 374h1v1h-1zM539 374h1v1h-1zM541 374h1v1h-1zM543 374h1v1h-1zM545 374h1v1h-1zM547 374h1v1h-1zM549 374h1v1h-1zM551 374h1v1h-1zM553 374h1v1h-1zM555 374h1v1h-1zM557 374h1v1h-1zM559 374h1v1h-1zM561 374h1v1h-1zM563 374h1v1h-1zM565 374h1v1h-1zM567 374h1v1h-1zM569 374h1v1h-1zM571 374h1v1h-1zM573 374h1v1h-1zM575 374h1v1h-1zM577 374h1v1h-1zM579 374h1v1h-1zM581 374h1v1h-1zM583 374h1v1h-1zM585 374h1v1h-1zM587 374h1v1h-1zM589 374h1v1h-1zM591 374h1v1h-1zM593 374h1v1h-1zM595 374h1v1h-1zM597 374h1v1h-1zM599 374h1v1h-1zM601 374h1v1h-1zM603 374h1v1h-1zM605 374h1v1h-1zM607 374h1v1h-1zM609 374h1v1h-1zM611 374h1v1h-1zM613 374h1v1h-1zM615 374h1v1h-1zM617 374h1v1h-1zM619 374h1v1h-1zM621 374h1v1h-1zM623 374h1v1h-1zM625 374h1v1h-1zM627 374h1v1h-1zM629 374h1v1h-1zM631 374h1v1h-1zM633 374h1v1h-1zM635 374h1v1h-1zM637 374h1v1h-1zM639 374h1v1h-1zM641 374h1v1h-1zM643 374h1v1h-1zM645 374h1v1h-1zM647 374h1v1h-1zM649 374h1v1h-1zM651 374h1v1h-1zM653 374h1v1h-1zM655 374h1v1h-1zM657 374h1v1h-1zM659 374h1v1h-1zM661 374h1v1h-1zM663 374h1v1h-1zM665 374h1v1h-1zM667 374h1v1h-1zM669 374h1v1h-1zM671 374h1v1h-1zM673 374h1v1h-1zM675 374h1v1h-1zM677 374h1v1h-1zM679 374h1v1h-1zM681 374h1v1h-1zM683 374h1v1h-1zM685 374h1v1h-1zM687 374h1v1h-1zM689 374h1v1h-1zM691 374h1v1h-1zM693 374h1v1h-1zM695 374h1v1h-1zM697 374h1v1h-1zM699 374h1v1h-1zM701 374h1v1h-1zM703 374h1v1h-1zM705 374h1v1h-1zM707 374h1v1h-1zM709 374h1v1h-1zM711 374h1v1h-1zM713 374h1v1h-1zM715 374h1v1h-1zM717 374h1v1h-1zM719 374h1v1h-1zM721 374h1v1h-1zM723 374h1v1h-1zM725 374h1v1h-1zM727 374h1v1h-1zM729 374h1v1h-1zM731 374h1v1h-1zM733 374h1v1h-1zM735 374h1v1h-1zM737 374h1v1h-1zM739 374h1v1h-1zM741 374h1v1h-1zM743 374h1v1h-1zM745 374h1v1h-1zM747 374h1v1h-1zM749 374h1v1h-1zM751 374h1v1h-1zM753 374h1v1h-1zM755 374h1v1h-1zM757 374h1v1h-1zM759 374h1v1h-1zM761 374h1v1h-1zM763 374h1v1h-1zM765 374h1v1h-1zM767 374h1v1h-1zM769 374h1v1h-1zM771 374h1v1h-1zM773 374h1v1h-1zM775 374h1v1h-1zM777 374h1v1h-1zM779 374h1v1h-1zM781 374h1v1h-1zM783 374h1v1h-1zM785 374h1v1h-1zM787 374h1v1h-1zM94 225h1v1h-1zM94 227h1v1h-1zM94 229h1v1h-1zM94 231h1v1h-1zM94 233h1v1h-1zM94 235h1v1h-1zM94 237h1v1h-1zM94 239h1v1h-1zM94 241h1v1h-1zM94 243h1v1h-1zM94 245h1v1h-1zM94 247h1v1h-1zM94 249h1v1h-1zM94 251h1v1h-1zM94 253h1v1h-1zM94 255h1v1h-1zM94 257h1v1h-1zM94 259h1v1h-1zM94 261h1v1h-1zM94 263h1v1h-1zM94 265h1v1h-1zM94 267h1v1h-1zM94 269h1v1h-1zM94 271h1v1h-1zM94 273h1v1h-1zM94 275h1v1h-1zM94 277h1v1h-1zM94 279h1v1h-1zM94 281h1v1h-1zM94 283h1v1h-1zM94 285h1v1h-1zM94 287h1v1h-1zM94 289h1v1h-1zM94 291h1v1h-1zM94 293h1v1h-1zM94 295h1v1h-1zM94 297h1v1h-1zM94 299h1v1h-1zM94 301h1v1h-1zM94 303h1v1h-1zM94 305h1v1h-1zM94 307h1v1h-1zM94 309h1v1h-1zM94 311h1v1h-1zM94 313h1v1h-1zM94 315h1v1h-1zM94 317h1v1h-1zM94 319h1v1h-1zM94 321h1v1h-1zM94 323h1v1h-1zM94 325h1v1h-1zM94 327h1v1h-1zM94 329h1v1h-1zM94 331h1v1h-1zM94 333h1v1h-1zM94 335h1v1h-1zM94 337h1v1h-1zM94 339h1v1h-1zM94 341h1v1h-1zM94 343h1v1h-1zM94 345h1v1h-1zM94 347h1v1h-1zM94 349h1v1h-1zM94 351h1v1h-1zM94 353h1v1h-1zM94 355h1v1h-1zM94 357h1v1h-1zM94 359h1v1h-1zM94 361h1v1h-1zM94 363h1v1h-1zM94 365h1v1h-1zM94 367h1v1h-1zM94 369h1v1h-1zM94 371h1v1h-1zM94 373h1v1h-1zM94 375h1v1h-1zM94 377h1v1h-1zM94 379h1v1h-1zM94 381h1v1h-1zM94 383h1v1h-1zM94 385h1v1h-1zM94 387h1v1h-1zM94 389h1v1h-1zM94 391h1v1h-1zM94 393h1v1h-1zM171 225h1v1h-1zM171 227h1v1h-1zM171 229h1v1h-1zM171 231h1v1h-1zM171 233h1v1h-1zM171 235h1v1h-1zM171 237h1v1h-1zM171 239h1v1h-1zM171 241h1v1h-1zM171 243h1v1h-1zM171 245h1v1h-1zM171 247h1v1h-1zM171 249h1v1h-1zM171 251h1v1h-1zM171 253h1v1h-1zM171 255h1v1h-1zM171 257h1v1h-1zM171 259h1v1h-1zM171 261h1v1h-1zM171 263h1v1h-1zM171 265h1v1h-1zM171 267h1v1h-1zM171 269h1v1h-1zM171 271h1v1h-1zM171 273h1v1h-1zM171 275h1v1h-1zM171 277h1v1h-1zM171 279h1v1h-1zM171 281h1v1h-1zM171 283h1v1h-1zM171 285h1v1h-1zM171 287h1v1h-1zM171 289h1v1h-1zM171 291h1v1h-1zM171 293h1v1h-1zM171 295h1v1h-1zM171 297h1v1h-1zM171 299h1v1h-1zM171 301h1v1h-1zM171 303h1v1h-1zM171 305h1v1h-1zM171 307h1v1h-1zM171 309h1v1h-1zM171 311h1v1h-1zM171 313h1v1h-1zM171 315h1v1h-1zM171 317h1v1h-1zM171 319h1v1h-1zM171 321h1v1h-1zM171 323h1v1h-1zM171 325h1v1h-1zM171 327h1v1h-1zM171 329h1v1h-1zM171 331h1v1h-1zM171 333h1v1h-1zM171 335h1v1h-1zM171 337h1v1h-1zM171 339h1v1h-1zM171 341h1v1h-1zM171 343h1v1h-1zM171 345h1v1h-1zM171 347h1v1h-1zM171 349h1v1h-1zM171 351h1v1h-1zM171 353h1v1h-1zM171 355h1v1h-1zM171 357h1v1h-1zM171 359h1v1h-1zM171 361h1v1h-1zM171 363h1v1h-1zM171 365h1v1h-1zM171 367h1v1h-1zM171 369h1v1h-1zM171 371h1v1h-1zM171 373h1v1h-1zM171 375h1v1h-1zM171 377h1v1h-1zM171 379h1v1h-1zM171 381h1v1h-1zM171 383h1v1h-1zM171 385h1v1h-1zM171 387h1v1h-1zM171 389h1v1h-1zM171 391h1v1h-1zM171 393h1v1h-1zM248 225h1v1h-1zM248 227h1v1h-1zM248 229h1v1h-1zM248 231h1v1h-1zM248 233h1v1h-1zM248 235h1v1h-1zM248 237h1v1h-1zM248 239h1v1h-1zM248 241h1v1h-1zM248 243h1v1h-1zM248 245h1v1h-1zM248 247h1v1h-1zM248 249h1v1h-1zM248 251h1v1h-1zM248 253h1v1h-1zM248 255h1v1h-1zM248 257h1v1h-1zM248 259h1v1h-1zM248 261h1v1h-1zM248 263h1v1h-1zM248 265h1v1h-1zM248 267h1v1h-1zM248 269h1v1h-1zM248 271h1v1h-1zM248 273h1v1h-1zM248 275h1v1h-1zM248 277h1v1h-1zM248 279h1v1h-1zM248 281h1v1h-1zM248 283h1v1h-1zM248 285h1v1h-1zM248 287h1v1h-1zM248 289h1v1h-1zM248 291h1v1h-1zM248 293h1v1h-1zM248 295h1v1h-1zM248 297h1v1h-1zM248 299h1v1h-1zM248 301h1v1h-1zM248 303h1v1h-1zM248 305h1v1h-1zM248 307h1v1h-1zM248 309h1v1h-1zM248 311h1v1h-1zM248 313h1v1h-1zM248 315h1v1h-1zM248 317h1v1h-1zM248 319h1v1h-1zM248 321h1v1h-1zM248 323h1v1h-1zM248 325h1v1h-1zM248 327h1v1h-1zM248 329h1v1h-1zM248 331h1v1h-1zM248 333h1v1h-1zM248 335h1v1h-1zM248 337h1v1h-1zM248 339h1v1h-1zM248 341h1v1h-1zM248 343h1v1h-1zM248 345h1v1h-1zM248 347h1v1h-1zM248 349h1v1h-1zM248 351h1v1h-1zM248 353h1v1h-1zM248 355h1v1h-1zM248 357h1v1h-1zM248 359h1v1h-1zM248 361h1v1h-1zM248 363h1v1h-1zM248 365h1v1h-1zM248 367h1v1h-1zM248 369h1v1h-1zM248 371h1v1h-1zM248 373h1v1h-1zM248 375h1v1h-1zM248 377h1v1h-1zM248 379h1v1h-1zM248 381h1v1h-1zM248 383h1v1h-1zM248 385h1v1h-1zM248 387h1v1h-1zM248 389h1v1h-1zM248 391h1v1h-1zM248 393h1v1h-1zM326 225h1v1h-1zM326 227h1v1h-1zM326 229h1v1h-1zM326 231h1v1h-1zM326 233h1v1h-1zM326 235h1v1h-1zM326 237h1v1h-1zM326 239h1v1h-1zM326 241h1v1h-1zM326 243h1v1h-1zM326 245h1v1h-1zM326 247h1v1h-1zM326 249h1v1h-1zM326 251h1v1h-1zM326 253h1v1h-1zM326 255h1v1h-1zM326 257h1v1h-1zM326 259h1v1h-1zM326 261h1v1h-1zM326 263h1v1h-1zM326 265h1v1h-1zM326 267h1v1h-1zM326 269h1v1h-1zM326 271h1v1h-1zM326 273h1v1h-1zM326 275h1v1h-1zM326 277h1v1h-1zM326 279h1v1h-1zM326 281h1v1h-1zM326 283h1v1h-1zM326 285h1v1h-1zM326 287h1v1h-1zM326 289h1v1h-1zM326 291h1v1h-1zM326 293h1v1h-1zM326 295h1v1h-1zM326 297h1v1h-1zM326 299h1v1h-1zM326 301h1v1h-1zM326 303h1v1h-1zM326 305h1v1h-1zM326 307h1v1h-1zM326 309h1v1h-1zM326 311h1v1h-1zM326 313h1v1h-1zM326 315h1v1h-1zM326 317h1v1h-1zM326 319h1v1h-1zM326 321h1v1h-1zM326 323h1v1h-1zM326 325h1v1h-1zM326 327h1v1h-1zM326 329h1v1h-1zM326 331h1v1h-1zM326 333h1v1h-1zM326 335h1v1h-1zM326 337h1v1h-1zM326 339h1v1h-1zM326 341h1v1h-1zM326 343h1v1h-1zM326 345h1v1h-1zM326 347h1v1h-1zM326 349h1v1h-1zM326 351h1v1h-1zM326 353h1v1h-1zM326 355h1v1h-1zM326 357h1v1h-1zM326 359h1v1h-1zM326 361h1v1h-1zM326 363h1v1h-1zM326 365h1v1h-1zM326 367h1v1h-1zM326 369h1v1h-1zM326 371h1v1h-1zM326 373h1v1h-1zM326 375h1v1h-1zM326 377h1v1h-1zM326 379h1v1h-1zM326 381h1v1h-1zM326 383h1v1h-1zM326 385h1v1h-1zM326 387h1v1h-1zM326 389h1v1h-1zM326 391h1v1h-1zM326 393h1v1h-1zM480 225h1v1h-1zM480 227h1v1h-1zM480 229h1v1h-1zM480 231h1v1h-1zM480 233h1v1h-1zM480 235h1v1h-1zM480 237h1v1h-1zM480 239h1v1h-1zM480 241h1v1h-1zM480 243h1v1h-1zM480 245h1v1h-1zM480 247h1v1h-1zM480 249h1v1h-1zM480 251h1v1h-1zM480 253h1v1h-1zM480 255h1v1h-1zM480 257h1v1h-1zM480 259h1v1h-1zM480 261h1v1h-1zM480 263h1v1h-1zM480 265h1v1h-1zM480 267h1v1h-1zM480 269h1v1h-1zM480 271h1v1h-1zM480 273h1v1h-1zM480 275h1v1h-1zM480 277h1v1h-1zM480 279h1v1h-1zM480 281h1v1h-1zM480 283h1v1h-1zM480 285h1v1h-1zM480 287h1v1h-1zM480 289h1v1h-1zM480 291h1v1h-1zM480 293h1v1h-1zM480 295h1v1h-1zM480 297h1v1h-1zM480 299h1v1h-1zM480 301h1v1h-1zM480 303h1v1h-1zM480 305h1v1h-1zM480 307h1v1h-1zM480 309h1v1h-1zM480 311h1v1h-1zM480 313h1v1h-1zM480 315h1v1h-1zM480 317h1v1h-1zM480 319h1v1h-1zM480 321h1v1h-1zM480 323h1v1h-1zM480 325h1v1h-1zM480 327h1v1h-1zM480 329h1v1h-1zM480 331h1v1h-1zM480 333h1v1h-1zM480 335h1v1h-1zM480 337h1v1h-1zM480 339h1v1h-1zM480 341h1v1h-1zM480 343h1v1h-1zM480 345h1v1h-1zM480 347h1v1h-1zM480 349h1v1h-1zM480 351h1v1h-1zM480 353h1v1h-1zM480 355h1v1h-1zM480 357h1v1h-1zM480 359h1v1h-1zM480 361h1v1h-1zM480 363h1v1h-1zM480 365h1v1h-1zM480 367h1v1h-1zM480 369h1v1h-1zM480 371h1v1h-1zM480 373h1v1h-1zM480 375h1v1h-1zM480 377h1v1h-1zM480 379h1v1h-1zM480 381h1v1h-1zM480 383h1v1h-1zM480 385h1v1h-1zM480 387h1v1h-1zM480 389h1v1h-1zM480 391h1v1h-1zM480 393h1v1h-1zM558 225h1v1h-1zM558 227h1v1h-1zM558 229h1v1h-1zM558 231h1v1h-1zM558 233h1v1h-1zM558 235h1v1h-1zM558 237h1v1h-1zM558 239h1v1h-1zM558 241h1v1h-1zM558 243h1v1h-1zM558 245h1v1h-1zM558 247h1v1h-1zM558 249h1v1h-1zM558 251h1v1h-1zM558 253h1v1h-1zM558 255h1v1h-1zM558 257h1v1h-1zM558 259h1v1h-1zM558 261h1v1h-1zM558 263h1v1h-1zM558 265h1v1h-1zM558 267h1v1h-1zM558 269h1v1h-1zM558 271h1v1h-1zM558 273h1v1h-1zM558 275h1v1h-1zM558 277h1v1h-1zM558 279h1v1h-1zM558 281h1v1h-1zM558 283h1v1h-1zM558 285h1v1h-1zM558 287h1v1h-1zM558 289h1v1h-1zM558 291h1v1h-1zM558 293h1v1h-1zM558 295h1v1h-1zM558 297h1v1h-1zM558 299h1v1h-1zM558 301h1v1h-1zM558 303h1v1h-1zM558 305h1v1h-1zM558 307h1v1h-1zM558 309h1v1h-1zM558 311h1v1h-1zM558 313h1v1h-1zM558 315h1v1h-1zM558 317h1v1h-1zM558 319h1v1h-1zM558 321h1v1h-1zM558 323h1v1h-1zM558 325h1v1h-1zM558 327h1v1h-1zM558 329h1v1h-1zM558 331h1v1h-1zM558 333h1v1h-1zM558 335h1v1h-1zM558 337h1v1h-1zM558 339h1v1h-1zM558 341h1v1h-1zM558 343h1v1h-1zM558 345h1v1h-1zM558 347h1v1h-1zM558 349h1v1h-1zM558 351h1v1h-1zM558 353h1v1h-1zM558 355h1v1h-1zM558 357h1v1h-1zM558 359h1v1h-1zM558 361h1v1h-1zM558 363h1v1h-1zM558 365h1v1h-1zM558 367h1v1h-1zM558 369h1v1h-1zM558 371h1v1h-1zM558 373h1v1h-1zM558 375h1v1h-1zM558 377h1v1h-1zM558 379h1v1h-1zM558 381h1v1h-1zM558 383h1v1h-1zM558 385h1v1h-1zM558 387h1v1h-1zM558 389h1v1h-1zM558 391h1v1h-1zM558 393h1v1h-1zM635 225h1v1h-1zM635 227h1v1h-1zM635 229h1v1h-1zM635 231h1v1h-1zM635 233h1v1h-1zM635 235h1v1h-1zM635 237h1v1h-1zM635 239h1v1h-1zM635 241h1v1h-1zM635 243h1v1h-1zM635 245h1v1h-1zM635 247h1v1h-1zM635 249h1v1h-1zM635 251h1v1h-1zM635 253h1v1h-1zM635 255h1v1h-1zM635 257h1v1h-1zM635 259h1v1h-1zM635 261h1v1h-1zM635 263h1v1h-1zM635 265h1v1h-1zM635 267h1v1h-1zM635 269h1v1h-1zM635 271h1v1h-1zM635 273h1v1h-1zM635 275h1v1h-1zM635 277h1v1h-1zM635 279h1v1h-1zM635 281h1v1h-1zM635 283h1v1h-1zM635 285h1v1h-1zM635 287h1v1h-1zM635 289h1v1h-1zM635 291h1v1h-1zM635 293h1v1h-1zM635 295h1v1h-1zM635 297h1v1h-1zM635 299h1v1h-1zM635 301h1v1h-1zM635 303h1v1h-1zM635 305h1v1h-1zM635 307h1v1h-1zM635 309h1v1h-1zM635 311h1v1h-1zM635 313h1v1h-1zM635 315h1v1h-1zM635 317h1v1h-1zM635 319h1v1h-1zM635 321h1v1h-1zM635 323h1v1h-1zM635 325h1v1h-1zM635 327h1v1h-1zM635 329h1v1h-1zM635 331h1v1h-1zM635 333h1v1h-1zM635 335h1v1h-1zM635 337h1v1h-1zM635 339h1v1h-1zM635 341h1v1h-1zM635 343h1v1h-1zM635 345h1v1h-1zM635 347h1v1h-1zM635 349h1v1h-1zM635 351h1v1h-1zM635 353h1v1h-1zM635 355h1v1h-1zM635 357h1v1h-1zM635 359h1v1h-1zM635 361h1v1h-1zM635 363h1v1h-1zM635 365h1v1h-1zM635 367h1v1h-1zM635 369h1v1h-1zM635 371h1v1h-1zM635 373h1v1h-1zM635 375h1v1h-1zM635 377h1v1h-1zM635 379h1v1h-1zM635 381h1v1h-1zM635 383h1v1h-1zM635 385h1v1h-1zM635 387h1v1h-1zM635 389h1v1h-1zM635 391h1v1h-1zM635 393h1v1h-1zM712 225h1v1h-1zM712 227h1v1h-1zM712 229h1v1h-1zM712 231h1v1h-1zM712 233h1v1h-1zM712 235h1v1h-1zM712 237h1v1h-1zM712 239h1v1h-1zM712 241h1v1h-1zM712 243h1v1h-1zM712 245h1v1h-1zM712 247h1v1h-1zM712 249h1v1h-1zM712 251h1v1h-1zM712 253h1v1h-1zM712 255h1v1h-1zM712 257h1v1h-1zM712 259h1v1h-1zM712 261h1v1h-1zM712 263h1v1h-1zM712 265h1v1h-1zM712 267h1v1h-1zM712 269h1v1h-1zM712 271h1v1h-1zM712 273h1v1h-1zM712 275h1v1h-1zM712 277h1v1h-1zM712 279h1v1h-1zM712 281h1v1h-1zM712 283h1v1h-1zM712 285h1v1h-1zM712 287h1v1h-1zM712 289h1v1h-1zM712 291h1v1h-1zM712 293h1v1h-1zM712 295h1v1h-1zM712 297h1v1h-1zM712 299h1v1h-1zM712 301h1v1h-1zM712 303h1v1h-1zM712 305h1v1h-1zM712 307h1v1h-1zM712 309h1v1h-1zM712 311h1v1h-1zM712 313h1v1h-1zM712 315h1v1h-1zM712 317h1v1h-1zM712 319h1v1h-1zM712 321h1v1h-1zM712 323h1v1h-1zM712 325h1v1h-1zM712 327h1v1h-1zM712 329h1v1h-1zM712 331h1v1h-1zM712 333h1v1h-1zM712 335h1v1h-1zM712 337h1v1h-1zM712 339h1v1h-1zM712 341h1v1h-1zM712 343h1v1h-1zM712 345h1v1h-1zM712 347h1v1h-1zM712 349h1v1h-1zM712 351h1v1h-1zM712 353h1v1h-1zM712 355h1v1h-1zM712 357h1v1h-1zM712 359h1v1h-1zM712 361h1v1h-1zM712 363h1v1h-1zM712 365h1v1h-1zM712 367h1v1h-1zM712 369h1v1h-1zM712 371h1v1h-1zM712 373h1v1h-1zM712 375h1v1h-1zM712 377h1v1h-1zM712 379h1v1h-1zM712 381h1v1h-1zM712 383h1v1h-1zM712 385h1v1h-1zM712 387h1v1h-1zM712 389h1v1h-1zM712 391h1v1h-1zM712 393h1v1h-1z" fill="#8c8c8c"/>
<path d="M17 309.5H789M403.5 223V395" stroke="#808080" stroke-width="1" fill="none"/>
<path d="M32.5 307V312M48.5 307V312M63.5 307V312M79.5 307V312M110.5 307V312M125.5 307V312M141.5 307V312M156.5 307V312M187.5 307V312M202.5 307V312M218.5 307V312M233.5 307V312M264.5 307V312M279.5 307V312M295.5 307V312M310.5 307V312M341.5 307V312M357.5 307V312M372.5 307V312M388.5 307V312M418.5 307V312M434.5 307V312M449.5 307V312M465.5 307V312M496.5 307V312M511.5 307V312M527.5 307V312M542.5 307V312M573.5 307V312M588.5 307V312M604.5 307V312M619.5 307V312M650.5 307V312M665.5 307V312M681.5 307V312M696.5 307V312M727.5 307V312M743.5 307V312M758.5 307V312M774.5 307V312" stroke="#808080" stroke-width="1" fill="none"/>
<path d="M32 255h1v1h-1zM32 363h1v1h-1zM48 255h1v1h-1zM48 363h1v1h-1zM63 255h1v1h-1zM63 363h1v1h-1zM79 255h1v1h-1zM79 363h1v1h-1zM110 255h1v1h-1zM110 363h1v1h-1zM125 255h1v1h-1zM125 363h1v1h-1zM141 255h1v1h-1zM141 363h1v1h-1zM156 255h1v1h-1zM156 363h1v1h-1zM187 255h1v1h-1zM187 363h1v1h-1zM202 255h1v1h-1zM202 363h1v1h-1zM218 255h1v1h-1zM218 363h1v1h-1zM233 255h1v1h-1zM233 363h1v1h-1zM264 255h1v1h-1zM264 363h1v1h-1zM279 255h1v1h-1zM279 363h1v1h-1zM295 255h1v1h-1zM295 363h1v1h-1zM310 255h1v1h-1zM310 363h1v1h-1zM341 255h1v1h-1zM341 363h1v1h-1zM357 255h1v1h-1zM357 363h1v1h-1zM372 255h1v1h-1zM372 363h1v1h-1zM388 255h1v1h-1zM388 363h1v1h-1zM418 255h1v1h-1zM418 363h1v1h-1zM434 255h1v1h-1zM434 363h1v1h-1zM449 255h1v1h-1zM449 363h1v1h-1zM465 255h1v1h-1zM465 363h1v1h-1zM496 255h1v1h-1zM496 363h1v1h-1zM511 255h1v1h-1zM511 363h1v1h-1zM527 255h1v1h-1zM527 363h1v1h-1zM542 255h1v1h-1zM542 363h1v1h-1zM573 255h1v1h-1zM573 363h1v1h-1zM588 255h1v1h-1zM588 363h1v1h-1zM604 255h1v1h-1zM604 363h1v1h-1zM619 255h1v1h-1zM619 363h1v1h-1zM650 255h1v1h-1zM650 363h1v1h-1zM665 255h1v1h-1zM665 363h1v1h-1zM681 255h1v1h-1zM681 363h1v1h-1zM696 255h1v1h-1zM696 363h1v1h-1zM727 255h1v1h-1zM727 363h1v1h-1zM743 255h1v1h-1zM743 363h1v1h-1zM758 255h1v1h-1zM758 363h1v1h-1zM774 255h1v1h-1zM774 363h1v1h-1z" fill="#8c8c8c"/>
<rect x="17.5" y="223.5" width="772" height="172" fill="none" stroke="#808080" stroke-width="1"/>
<path d="M22.5 234V377M36.5 234V382M51.5 230V377M65.5 234V382M80.5 234V377M94.5 234V382M109.5 233V377M124.5 234V382M138.5 233V377M152.5 234V382M167.5 233V377M182.5 234V380M197.5 234V377M211.5 234V378M226.5 231V377M241.5 234V382M254.5 233V377M270.5 234V378M284.5 233V377M299.5 234V380M313.5 231V377M328.5 234V380M342.5 233V377M357.5 234V382M371.5 233V377M386.5 234V380M401.5 230V377M415.5 234V382M430.5 234V377M444.5 234V378M459.5 231V377M473.5 234V378M488.5 234V377M502.5 234V382M517.5 234V377M531.5 234V382M546.5 230V377M560.5 234V378M574.5 230V377M589.5 234V380M603.5 230V377M618.5 234V380M632.5 230V377M646.5 234V380M661.5 231V377M675.5 234V380M690.5 233V377M704.5 234V380M719.5 230V377M733.5 234V378M747.5 230V377M761.5 234V378M776.5 230V377" stroke="#d8d000" stroke-width="1" fill="none"/>
<path d="M22 234h1V242h-1zM23 234h1V243h-1zM24 234h1V241h-1zM25 233h1V242h-1zM26 234h1V242h-1zM27 234h1V242h-1zM28 234h1V242h-1zM29 234h1V242h-1zM30 234h1V242h-1zM31 235h1V242h-1zM32 234h1V241h-1zM33 234h1V242h-1zM34 234h1V241h-1zM35 235h1V242h-1zM36 234h1V241h-1zM36 371h1V378h-1zM37 372h1V377h-1zM38 371h1V378h-1zM39 371h1V378h-1zM40 372h1V378h-1zM41 370h1V379h-1zM42 371h1V379h-1zM43 371h1V378h-1zM44 371h1V379h-1zM45 371h1V378h-1zM46 371h1V378h-1zM47 371h1V379h-1zM48 371h1V379h-1zM49 371h1V378h-1zM50 371h1V378h-1zM51 371h1V377h-1zM51 234h1V242h-1zM52 234h1V242h-1zM53 235h1V243h-1zM54 234h1V243h-1zM55 234h1V242h-1zM56 235h1V241h-1zM57 234h1V242h-1zM58 235h1V242h-1zM59 234h1V241h-1zM60 234h1V243h-1zM61 233h1V243h-1zM62 234h1V242h-1zM63 233h1V242h-1zM64 235h1V242h-1zM65 235h1V242h-1zM65 371h1V378h-1zM66 371h1V378h-1zM67 371h1V379h-1zM68 371h1V377h-1zM69 371h1V378h-1zM70 370h1V377h-1zM71 371h1V378h-1zM72 372h1V378h-1zM73 371h1V379h-1zM74 371h1V378h-1zM75 372h1V379h-1zM76 371h1V377h-1zM77 372h1V379h-1zM78 371h1V378h-1zM79 372h1V378h-1zM80 370h1V378h-1zM80 234h1V242h-1zM81 234h1V243h-1zM82 234h1V242h-1zM83 234h1V242h-1zM84 234h1V243h-1zM85 233h1V243h-1zM86 234h1V242h-1zM87 234h1V242h-1zM88 234h1V242h-1zM89 234h1V241h-1zM90 234h1V242h-1zM91 234h1V243h-1zM92 234h1V242h-1zM93 234h1V242h-1zM94 234h1V243h-1zM94 372h1V379h-1zM95 371h1V378h-1zM96 371h1V378h-1zM97 371h1V378h-1zM98 371h1V377h-1zM99 371h1V377h-1zM100 371h1V379h-1zM101 371h1V378h-1zM102 371h1V378h-1zM103 371h1V378h-1zM104 371h1V378h-1zM105 371h1V378h-1zM106 372h1V378h-1zM107 372h1V378h-1zM108 370h1V379h-1zM109 371h1V378h-1zM109 234h1V243h-1zM110 235h1V243h-1zM111 235h1V242h-1zM112 234h1V242h-1zM113 234h1V242h-1zM114 235h1V242h-1zM115 233h1V243h-1zM116 235h1V243h-1zM117 234h1V241h-1zM118 234h1V243h-1zM119 235h1V242h-1zM120 235h1V242h-1zM121 234h1V242h-1zM122 234h1V241h-1zM123 234h1V242h-1zM124 234h1V241h-1zM124 370h1V378h-1zM125 371h1V377h-1zM126 370h1V378h-1zM127 370h1V378h-1zM128 371h1V378h-1zM129 371h1V378h-1zM130 370h1V378h-1zM131 371h1V377h-1zM132 371h1V379h-1zM133 372h1V378h-1zM134 371h1V377h-1zM135 372h1V378h-1zM136 372h1V379h-1zM137 371h1V378h-1zM138 371h1V378h-1zM138 234h1V243h-1zM139 234h1V243h-1zM140 234h1V243h-1zM141 234h1V241h-1zM142 234h1V242h-1zM143 233h1V243h-1zM144 234h1V241h-1zM145 234h1V243h-1zM146 234h1V242h-1zM147 234h1V243h-1zM148 234h1V242h-1zM149 234h1V242h-1zM150 234h1V242h-1zM151 234h1V241h-1zM152 234h1V243h-1zM152 370h1V378h-1zM153 372h1V379h-1zM154 370h1V379h-1zM155 371h1V379h-1zM156 372h1V377h-1zM157 370h1V378h-1zM158 371h1V379h-1zM159 372h1V378h-1zM160 372h1V378h-1zM161 372h1V378h-1zM162 370h1V378h-1zM163 372h1V378h-1zM164 372h1V379h-1zM165 371h1V377h-1zM166 371h1V378h-1zM167 372h1V378h-1zM167 234h1V242h-1zM168 234h1V243h-1zM169 234h1V242h-1zM170 234h1V243h-1zM171 234h1V241h-1zM172 234h1V243h-1zM173 234h1V243h-1zM174 234h1V241h-1zM175 234h1V241h-1zM176 234h1V242h-1zM177 234h1V242h-1zM178 235h1V242h-1zM179 234h1V242h-1zM180 233h1V241h-1zM181 233h1V242h-1zM182 234h1V242h-1zM182 371h1V378h-1zM183 371h1V378h-1zM184 370h1V377h-1zM185 371h1V378h-1zM186 371h1V378h-1zM187 372h1V380h-1zM188 371h1V377h-1zM189 371h1V379h-1zM190 371h1V379h-1zM191 371h1V378h-1zM192 371h1V378h-1zM193 370h1V378h-1zM194 371h1V378h-1zM195 372h1V378h-1zM196 371h1V379h-1zM197 371h1V378h-1zM197 234h1V242h-1zM198 234h1V241h-1zM199 234h1V241h-1zM200 235h1V242h-1zM201 234h1V243h-1zM202 234h1V243h-1zM203 234h1V243h-1zM204 234h1V242h-1zM205 234h1V242h-1zM206 235h1V242h-1zM207 234h1V241h-1zM208 234h1V243h-1zM209 234h1V242h-1zM210 235h1V243h-1zM211 234h1V242h-1zM211 371h1V377h-1zM212 370h1V378h-1zM213 370h1V378h-1zM214 371h1V378h-1zM215 370h1V379h-1zM216 371h1V379h-1zM217 371h1V378h-1zM218 371h1V377h-1zM219 371h1V377h-1zM220 371h1V378h-1zM221 371h1V378h-1zM222 371h1V377h-1zM223 372h1V379h-1zM224 372h1V379h-1zM225 372h1V378h-1zM226 371h1V378h-1zM226 234h1V243h-1zM227 235h1V241h-1zM228 234h1V241h-1zM229 234h1V241h-1zM230 233h1V242h-1zM231 233h1V242h-1zM232 235h1V242h-1zM233 234h1V242h-1zM234 235h1V242h-1zM235 234h1V242h-1zM236 234h1V242h-1zM237 234h1V242h-1zM238 234h1V243h-1zM239 234h1V242h-1zM240 235h1V242h-1zM241 234h1V242h-1zM241 371h1V378h-1zM242 371h1V378h-1zM243 370h1V378h-1zM244 371h1V379h-1zM245 372h1V379h-1zM246 372h1V378h-1zM247 372h1V378h-1zM248 372h1V377h-1zM249 371h1V378h-1zM250 371h1V377h-1zM251 371h1V378h-1zM252 372h1V379h-1zM253 370h1V379h-1zM254 372h1V377h-1zM254 234h1V242h-1zM255 234h1V242h-1zM256 234h1V242h-1zM257 235h1V242h-1zM258 234h1V242h-1zM259 234h1V242h-1zM260 234h1V243h-1zM261 234h1V241h-1zM262 234h1V243h-1zM263 234h1V242h-1zM264 234h1V242h-1zM265 234h1V243h-1zM266 234h1V242h-1zM267 234h1V243h-1zM268 234h1V242h-1zM269 234h1V242h-1zM270 235h1V242h-1zM270 372h1V378h-1zM271 371h1V377h-1zM272 370h1V379h-1zM273 370h1V377h-1zM274 371h1V377h-1zM275 371h1V378h-1zM276 371h1V378h-1zM277 370h1V378h-1zM278 372h1V379h-1zM279 371h1V378h-1zM280 372h1V378h-1zM281 371h1V377h-1zM282 371h1V378h-1zM283 371h1V379h-1zM284 372h1V378h-1zM284 234h1V243h-1zM285 234h1V242h-1zM286 234h1V242h-1zM287 234h1V243h-1zM288 234h1V242h-1zM289 235h1V243h-1zM290 234h1V241h-1zM291 234h1V242h-1zM292 234h1V242h-1zM293 234h1V242h-1zM294 234h1V242h-1zM295 234h1V243h-1zM296 234h1V241h-1zM297 234h1V242h-1zM298 235h1V242h-1zM299 235h1V242h-1zM299 371h1V378h-1zM300 371h1V378h-1zM301 372h1V379h-1zM302 372h1V378h-1zM303 371h1V378h-1zM304 371h1V377h-1zM305 371h1V378h-1zM306 371h1V378h-1zM307 371h1V378h-1zM308 371h1V378h-1zM309 371h1V377h-1zM310 371h1V378h-1zM311 372h1V378h-1zM312 372h1V378h-1zM313 372h1V378h-1zM313 234h1V243h-1zM314 234h1V242h-1zM315 233h1V242h-1zM316 234h1V241h-1zM317 233h1V242h-1zM318 234h1V242h-1zM319 234h1V241h-1zM320 234h1V242h-1zM321 234h1V243h-1zM322 234h1V242h-1zM323 234h1V242h-1zM324 234h1V241h-1zM325 234h1V242h-1zM326 234h1V242h-1zM327 233h1V242h-1zM328 235h1V242h-1zM328 371h1V379h-1zM329 371h1V378h-1zM330 372h1V379h-1zM331 371h1V377h-1zM332 371h1V378h-1zM333 371h1V378h-1zM334 372h1V378h-1zM335 371h1V379h-1zM336 371h1V378h-1zM337 370h1V378h-1zM338 370h1V377h-1zM339 370h1V377h-1zM340 370h1V378h-1zM341 371h1V378h-1zM342 370h1V377h-1zM342 234h1V243h-1zM343 235h1V242h-1zM344 234h1V241h-1zM345 234h1V242h-1zM346 234h1V242h-1zM347 234h1V242h-1zM348 234h1V243h-1zM349 235h1V242h-1zM350 234h1V242h-1zM351 234h1V241h-1zM352 234h1V241h-1zM353 234h1V242h-1zM354 234h1V242h-1zM355 234h1V242h-1zM356 234h1V242h-1zM357 234h1V243h-1zM357 371h1V378h-1zM358 372h1V378h-1zM359 371h1V379h-1zM360 371h1V378h-1zM361 371h1V378h-1zM362 372h1V379h-1zM363 371h1V378h-1zM364 371h1V378h-1zM365 371h1V378h-1zM366 371h1V378h-1zM367 371h1V378h-1zM368 371h1V377h-1zM369 371h1V379h-1zM370 370h1V378h-1zM371 372h1V379h-1zM371 234h1V242h-1zM372 234h1V242h-1zM373 234h1V243h-1zM374 234h1V242h-1zM375 235h1V243h-1zM376 234h1V242h-1zM377 234h1V242h-1zM378 235h1V242h-1zM379 235h1V242h-1zM380 235h1V242h-1zM381 234h1V242h-1zM382 234h1V241h-1zM383 234h1V242h-1zM384 234h1V242h-1zM385 234h1V242h-1zM386 234h1V241h-1zM386 370h1V377h-1zM387 371h1V379h-1zM388 372h1V379h-1zM389 371h1V379h-1zM390 370h1V377h-1zM391 370h1V379h-1zM392 372h1V378h-1zM393 371h1V378h-1zM394 372h1V378h-1zM395 371h1V379h-1zM396 371h1V378h-1zM397 372h1V379h-1zM398 371h1V378h-1zM399 371h1V378h-1zM400 372h1V378h-1zM401 370h1V378h-1zM401 234h1V242h-1zM402 235h1V243h-1zM403 234h1V242h-1zM404 235h1V242h-1zM405 234h1V243h-1zM406 234h1V242h-1zM407 234h1V242h-1zM408 234h1V242h-1zM409 234h1V242h-1zM410 234h1V243h-1zM411 234h1V242h-1zM412 234h1V242h-1zM413 233h1V242h-1zM414 234h1V242h-1zM415 234h1V241h-1zM415 371h1V377h-1zM416 371h1V378h-1zM417 370h1V378h-1zM418 371h1V377h-1zM419 371h1V377h-1zM420 372h1V377h-1zM421 371h1V378h-1zM422 371h1V377h-1zM423 370h1V378h-1zM424 371h1V377h-1zM425 371h1V379h-1zM426 371h1V378h-1zM427 371h1V378h-1zM428 371h1V377h-1zM429 370h1V378h-1zM430 371h1V378h-1zM430 234h1V242h-1zM431 234h1V241h-1zM432 234h1V243h-1zM433 234h1V242h-1zM434 233h1V243h-1zM435 234h1V242h-1zM436 234h1V242h-1zM437 234h1V242h-1zM438 234h1V242h-1zM439 234h1V242h-1zM440 234h1V243h-1zM441 234h1V243h-1zM442 234h1V242h-1zM443 234h1V243h-1zM444 235h1V242h-1zM444 370h1V379h-1zM445 372h1V378h-1zM446 371h1V378h-1zM447 370h1V378h-1zM448 371h1V380h-1zM449 371h1V378h-1zM450 371h1V379h-1zM451 370h1V380h-1zM452 371h1V379h-1zM453 371h1V379h-1zM454 372h1V378h-1zM455 371h1V379h-1zM456 372h1V377h-1zM457 371h1V378h-1zM458 371h1V378h-1zM459 371h1V379h-1zM459 235h1V243h-1zM460 234h1V241h-1zM461 234h1V242h-1zM462 234h1V243h-1zM463 235h1V242h-1zM464 234h1V242h-1zM465 234h1V241h-1zM466 234h1V241h-1zM467 234h1V242h-1zM468 235h1V242h-1zM469 234h1V241h-1zM470 234h1V242h-1zM471 234h1V242h-1zM472 235h1V242h-1zM473 235h1V241h-1zM473 371h1V378h-1zM474 370h1V378h-1zM475 371h1V378h-1zM476 370h1V378h-1zM477 371h1V378h-1zM478 372h1V378h-1zM479 371h1V378h-1zM480 370h1V379h-1zM481 370h1V378h-1zM482 371h1V378h-1zM483 371h1V378h-1zM484 371h1V378h-1zM485 372h1V378h-1zM486 372h1V378h-1zM487 371h1V378h-1zM488 371h1V379h-1zM488 234h1V242h-1zM489 234h1V242h-1zM490 234h1V243h-1zM491 234h1V241h-1zM492 235h1V241h-1zM493 235h1V243h-1zM494 234h1V242h-1zM495 234h1V241h-1zM496 234h1V243h-1zM497 235h1V242h-1zM498 235h1V242h-1zM499 234h1V241h-1zM500 234h1V242h-1zM501 234h1V242h-1zM502 234h1V242h-1zM502 371h1V378h-1zM503 371h1V379h-1zM504 372h1V378h-1zM505 371h1V379h-1zM506 371h1V378h-1zM507 371h1V378h-1zM508 371h1V379h-1zM509 371h1V379h-1zM510 371h1V378h-1zM511 370h1V379h-1zM512 371h1V377h-1zM513 372h1V379h-1zM514 372h1V378h-1zM515 371h1V378h-1zM516 372h1V379h-1zM517 370h1V378h-1zM517 235h1V242h-1zM518 234h1V242h-1zM519 234h1V243h-1zM520 234h1V243h-1zM521 234h1V242h-1zM522 234h1V242h-1zM523 233h1V242h-1zM524 234h1V242h-1zM525 234h1V242h-1zM526 234h1V241h-1zM527 234h1V241h-1zM528 233h1V242h-1zM529 234h1V243h-1zM530 234h1V242h-1zM531 235h1V243h-1zM531 371h1V379h-1zM532 370h1V378h-1zM533 371h1V377h-1zM534 371h1V377h-1zM535 372h1V378h-1zM536 371h1V378h-1zM537 370h1V378h-1zM538 371h1V379h-1zM539 370h1V380h-1zM540 372h1V377h-1zM541 370h1V378h-1zM542 370h1V379h-1zM543 370h1V379h-1zM544 371h1V378h-1zM545 370h1V378h-1zM546 371h1V378h-1zM546 235h1V242h-1zM547 235h1V242h-1zM548 234h1V242h-1zM549 235h1V242h-1zM550 235h1V242h-1zM551 235h1V242h-1zM552 234h1V242h-1zM553 235h1V242h-1zM554 234h1V242h-1zM555 234h1V242h-1zM556 234h1V241h-1zM557 234h1V241h-1zM558 234h1V242h-1zM559 235h1V242h-1zM560 235h1V241h-1zM560 371h1V379h-1zM561 370h1V378h-1zM562 372h1V378h-1zM563 371h1V378h-1zM564 371h1V378h-1zM565 371h1V379h-1zM566 371h1V377h-1zM567 371h1V377h-1zM568 371h1V378h-1zM569 370h1V377h-1zM570 371h1V378h-1zM571 371h1V377h-1zM572 371h1V378h-1zM573 371h1V378h-1zM574 371h1V379h-1zM574 234h1V242h-1zM575 234h1V242h-1zM576 234h1V241h-1zM577 234h1V243h-1zM578 234h1V243h-1zM579 234h1V242h-1zM580 234h1V242h-1zM581 234h1V242h-1zM582 235h1V242h-1zM583 235h1V241h-1zM584 234h1V242h-1zM585 234h1V242h-1zM586 234h1V242h-1zM587 235h1V242h-1zM588 234h1V242h-1zM589 234h1V242h-1zM589 371h1V377h-1zM590 371h1V378h-1zM591 371h1V378h-1zM592 370h1V379h-1zM593 372h1V377h-1zM594 371h1V377h-1zM595 371h1V378h-1zM596 371h1V378h-1zM597 372h1V378h-1zM598 371h1V379h-1zM599 371h1V378h-1zM600 371h1V378h-1zM601 371h1V380h-1zM602 372h1V379h-1zM603 371h1V379h-1zM603 234h1V242h-1zM604 234h1V242h-1zM605 234h1V241h-1zM606 235h1V242h-1zM607 235h1V241h-1zM608 233h1V242h-1zM609 234h1V241h-1zM610 234h1V241h-1zM611 234h1V243h-1zM612 234h1V242h-1zM613 234h1V241h-1zM614 234h1V241h-1zM615 234h1V242h-1zM616 234h1V242h-1zM617 234h1V243h-1zM618 234h1V243h-1zM618 371h1V378h-1zM619 372h1V377h-1zM620 371h1V379h-1zM621 371h1V378h-1zM622 372h1V378h-1zM623 370h1V378h-1zM624 371h1V377h-1zM625 370h1V379h-1zM626 370h1V378h-1zM627 370h1V377h-1zM628 370h1V379h-1zM629 370h1V378h-1zM630 371h1V378h-1zM631 371h1V379h-1zM632 371h1V378h-1zM632 234h1V242h-1zM633 235h1V243h-1zM634 235h1V243h-1zM635 234h1V242h-1zM636 234h1V242h-1zM637 234h1V242h-1zM638 233h1V242h-1zM639 233h1V241h-1zM640 234h1V242h-1zM641 234h1V241h-1zM642 234h1V242h-1zM643 234h1V241h-1zM644 234h1V243h-1zM645 235h1V242h-1zM646 234h1V243h-1zM646 372h1V378h-1zM647 371h1V378h-1zM648 371h1V378h-1zM649 371h1V378h-1zM650 371h1V379h-1zM651 371h1V378h-1zM652 371h1V379h-1zM653 370h1V379h-1zM654 371h1V377h-1zM655 371h1V377h-1zM656 371h1V378h-1zM657 371h1V378h-1zM658 371h1V378h-1zM659 371h1V378h-1zM660 372h1V377h-1zM661 371h1V378h-1zM661 234h1V242h-1zM662 234h1V242h-1zM663 234h1V242h-1zM664 234h1V242h-1zM665 234h1V241h-1zM666 234h1V242h-1zM667 235h1V241h-1zM668 234h1V243h-1zM669 234h1V241h-1zM670 234h1V242h-1zM671 234h1V242h-1zM672 234h1V242h-1zM673 234h1V242h-1zM674 234h1V242h-1zM675 235h1V241h-1zM675 371h1V379h-1zM676 371h1V378h-1zM677 371h1V377h-1zM678 371h1V379h-1zM679 371h1V379h-1zM680 370h1V378h-1zM681 371h1V378h-1zM682 371h1V378h-1zM683 372h1V378h-1zM684 370h1V379h-1zM685 370h1V378h-1zM686 371h1V377h-1zM687 372h1V378h-1zM688 370h1V379h-1zM689 371h1V379h-1zM690 372h1V379h-1zM690 234h1V242h-1zM691 234h1V242h-1zM692 234h1V242h-1zM693 234h1V241h-1zM694 234h1V242h-1zM695 235h1V242h-1zM696 234h1V241h-1zM697 235h1V241h-1zM698 234h1V243h-1zM699 234h1V242h-1zM700 234h1V241h-1zM701 234h1V241h-1zM702 234h1V242h-1zM703 234h1V242h-1zM704 234h1V242h-1zM704 371h1V379h-1zM705 372h1V378h-1zM706 371h1V378h-1zM707 371h1V379h-1zM708 370h1V378h-1zM709 371h1V377h-1zM710 372h1V378h-1zM711 371h1V379h-1zM712 372h1V378h-1zM713 371h1V378h-1zM714 371h1V378h-1zM715 372h1V378h-1zM716 371h1V377h-1zM717 372h1V378h-1zM718 371h1V378h-1zM719 370h1V378h-1zM719 234h1V243h-1zM720 234h1V243h-1zM721 234h1V242h-1zM722 234h1V242h-1zM723 234h1V243h-1zM724 234h1V242h-1zM725 234h1V243h-1zM726 235h1V242h-1zM727 234h1V242h-1zM728 234h1V243h-1zM729 234h1V243h-1zM730 234h1V242h-1zM731 234h1V243h-1zM732 234h1V241h-1zM733 234h1V242h-1zM733 371h1V378h-1zM734 371h1V379h-1zM735 370h1V378h-1zM736 372h1V377h-1zM737 371h1V378h-1zM738 371h1V378h-1zM739 371h1V377h-1zM740 372h1V378h-1zM741 370h1V378h-1zM742 371h1V378h-1zM743 372h1V378h-1zM744 372h1V378h-1zM745 370h1V378h-1zM746 371h1V378h-1zM747 371h1V378h-1zM747 233h1V242h-1zM748 233h1V242h-1zM749 234h1V242h-1zM750 234h1V242h-1zM751 235h1V242h-1zM752 234h1V243h-1zM753 234h1V242h-1zM754 235h1V242h-1zM755 235h1V242h-1zM756 234h1V241h-1zM757 234h1V242h-1zM758 235h1V242h-1zM759 233h1V242h-1zM760 235h1V242h-1zM761 234h1V242h-1zM761 371h1V378h-1zM762 371h1V379h-1zM763 372h1V379h-1zM764 371h1V379h-1zM765 371h1V378h-1zM766 370h1V377h-1zM767 371h1V377h-1zM768 372h1V378h-1zM769 370h1V378h-1zM770 372h1V378h-1zM771 371h1V379h-1zM772 372h1V379h-1zM773 370h1V377h-1zM774 371h1V379h-1zM775 371h1V377h-1zM776 371h1V378h-1zM776 235h1V242h-1zM777 234h1V241h-1zM778 235h1V242h-1zM779 234h1V241h-1zM780 234h1V242h-1zM781 234h1V242h-1zM782 234h1V242h-1zM783 235h1V241h-1zM784 234h1V242h-1zM785 234h1V243h-1zM786 235h1V241h-1zM787 235h1V242h-1zM788 234h1V241h-1zM789 233h1V243h-1zM18 372h1V378h-1zM19 372h1V377h-1zM20 372h1V378h-1zM21 372h1V378h-1zM22 373h1V378h-1z" fill="#f8f000"/>
<path d="M6 113h3v1h-3zM5 114h1v5h-1zM9 114h1v1h-1zM9 118h1v1h-1zM6 119h3v1h-3zM13 113h1v7h-1zM12 114h1v1h-1zM7 123h9v1h-9zM7 124h10v1h-10zM7 125h1v1h-1z" fill="#ffff00"/>
<path d="M5 295h6v1h-6zM9 296h1v1h-1zM8 297h1v1h-1zM7 298h1v1h-1zM6 299h1v1h-1zM5 300h1v1h-1zM5 301h6v1h-6zM13 295h1v7h-1zM12 296h1v1h-1zM7 305h9v1h-9zM7 306h10v1h-10zM7 307h1v1h-1z" fill="#ffff00"/>
<path d="M6 200h1v7h-1zM7 200h3v1h-3zM7 203h2v1h-2zM13 200h1v7h-1zM12 201h1v1h-1z" fill="#ff0000"/>
<path d="M8 208h1v6h-1zM5 211h2v1h-2zM10 211h2v1h-2zM6 212h5v1h-5zM7 213h3v1h-3zM8 214h1v1h-1z" fill="#ff0000"/>
<path d="M790 124h8v1h-8zM792 123h6v3h-6zM794 122h4v5h-4zM796 121h2v7h-2z" fill="#ffff00"/>
<path d="M403 211h1v2h-1zM402 213h3v2h-3zM401 215h5v2h-5zM400 217h7v2h-7z" fill="#ffff00"/>
<path d="M791 215h7v1h-7zM794 212h1v1h-1zM794 213h2v1h-2zM795 214h2v1h-2zM795 216h2v1h-2zM794 217h2v1h-2zM794 218h1v1h-1z" fill="#ff0000"/>
<path d="M791 400h7v1h-7zM794 397h1v1h-1zM794 398h2v1h-2zM795 399h2v1h-2zM795 401h2v1h-2zM794 402h2v1h-2zM794 403h1v1h-1z" fill="#ffff00"/>
<rect x="167" y="520" width="11" height="10" fill="#0a0a0a"/><rect x="256" y="520" width="11" height="10" fill="#0a0a0a"/>
<path d="M174 521h3v1h-3zM173 522h4v1h-4zM172 523h4v1h-4zM171 524h4v1h-4zM167 525h2v1h-2zM170 525h4v1h-4zM167 526h6v1h-6zM168 527h4v1h-4zM169 528h3v1h-3zM169 529h2v1h-2zM263 521h3v1h-3zM262 522h4v1h-4zM261 523h4v1h-4zM260 524h4v1h-4zM256 525h2v1h-2zM259 525h4v1h-4zM256 526h6v1h-6zM257 527h4v1h-4zM258 528h3v1h-3zM258 529h2v1h-2z" fill="#00f000"/>
</svg>
<!-- labels -->
<!-- table -->
<div class="t" style="left:5px;top:408px;font-weight:bold;color:#e4e4e4;-webkit-text-stroke:0.25px #e4e4e4">Measure</div>
<div class="t" style="left:5px;top:424px">value</div>
<div class="t" style="left:5px;top:440px">mean</div>
<div class="t" style="left:5px;top:456px">min</div>
<div class="t" style="left:5px;top:472px">max</div>
<div class="t" style="left:5px;top:488px">sdev</div>
<div class="t" style="left:5px;top:504px">num</div>
<div class="t" style="left:5px;top:520px">status</div>
<div class="t r" style="right:621px;top:408px">P1:width(C1)</div>
<div class="t r" style="right:621px;top:424px">9.2003 µs</div>
<div class="t r" style="right:621px;top:440px">9.249379 µs</div>
<div class="t r" style="right:621px;top:456px">9.2001 µs</div>
<div class="t r" style="right:621px;top:472px">9.2993 µs</div>
<div class="t r" style="right:621px;top:488px">28.736 ns</div>
<div class="t r" style="right:621px;top:504px">80</div>
<div class="t r" style="right:533px;top:408px">P2:width(C1)</div>
<div class="t r" style="right:533px;top:424px">5.7049 µs</div>
<div class="t r" style="right:533px;top:440px">9.895567 µs</div>
<div class="t r" style="right:533px;top:456px">4.9298 µs</div>
<div class="t r" style="right:533px;top:472px">335.8509 µs</div>
<div class="t r" style="right:533px;top:488px">10.724794 µs</div>
<div class="t r" style="right:533px;top:504px">11.969e+3</div>
<div class="t g" style="left:318px;top:408px">P3:- - -</div>
<div class="t g" style="left:406px;top:408px">P4:- - -</div>
<div class="t g" style="left:494px;top:408px">P5:- - -</div>
<div class="t g" style="left:582px;top:408px">P6:- - -</div>
<div class="t g" style="left:670px;top:408px">P7:- - -</div>
<div class="t g" style="left:758px;top:408px">P8:- - -</div>
<!-- status boxes -->
<div class="box" style="left:4px;width:97px">
  <div class="hd" style="left:2px;width:93px;background:#ffff00"></div>
  <div class="t" style="left:3px;top:2px;color:#000">C1</div>
  <div class="badge" style="left:64px;width:30px;background:#000;box-shadow:0 0 0 1px #ffff00"></div>
  <div class="t" style="left:66px;top:3px;color:#ffff00;font-size:10px;letter-spacing:0.2px">DC50</div>
  <div class="t r" style="right:2px;top:18px">200 mV/div</div>
  <div class="t r" style="right:2px;top:32px">0.0 mV ofst</div>
</div>
<div class="box sq" style="left:104px;width:97px">
  <div class="hd" style="left:2px;width:93px;background:#ff0000"></div>
  <div class="t" style="left:3px;top:2px;color:#000">F1</div>
  <div class="t r" style="right:3px;top:2px;color:#000">track(P1)</div>
  <div class="t" style="right:-1px;top:18px">15.7 ns/div</div>
  <div class="t" style="right:-1px;top:32px">50.0 µs/div</div>
  <div class="gb"></div>
</div>
<div class="box sq" style="left:204px;width:97px;background:#c396c8">
  <div class="hd" style="left:2px;width:93px;background:#ffff00"></div>
  <div class="t" style="left:3px;top:2px;color:#000">Z1</div>
  <div class="t r" style="right:0px;top:2px;color:#000">zoom(C1)</div>
  <div class="t" style="right:-1px;top:18px;color:#f4eef4">157 mV/div</div>
  <div class="t" style="right:-1px;top:32px;color:#f4eef4">50.0 µs/div</div>
  <div class="gb"></div>
</div>
<div class="box" style="left:583px;width:112px">
  <div class="hd" style="left:2px;width:108px;background:#ffffff"></div>
  <div class="t" style="left:3px;top:2px;color:#000">Развертка</div>
  <div class="t r" style="right:0px;top:2px;color:#000">0.0 ms</div>
  <div class="t r" style="right:2px;top:18px">25.0 ms/div</div>
  <div class="t" style="left:4px;top:32px">24.0 MS</div>
  <div class="t r" style="right:2px;top:32px">100 MS/s</div>
</div>
<div class="box" style="left:698px;width:96px">
  <div class="hd" style="left:2px;width:92px;background:#ffffff"></div>
  <div class="t" style="left:4px;top:2px;color:#000">Синхронизац</div>
  <div class="badge" style="left:77px;width:18px;top:2px;height:13px;background:#000;border-radius:4px"></div>
  <div class="t" style="left:79px;top:4px;color:#fff;font-size:10px">C1</div>
  <div class="t" style="left:4px;top:18px">Стоп</div>
  <div class="t r" style="right:2px;top:18px">0 mV</div>
  <div class="t" style="left:4px;top:32px">Edge</div>
  <div class="t r" style="right:2px;top:32px">Положит</div>
</div>
<div style="position:absolute;left:6px;top:582px;width:61px;height:18px;background:#080808"></div>
<div class="t" style="left:9px;top:581px;font-size:15.5px;color:#0000ff;letter-spacing:0.5px;-webkit-text-stroke:0.6px #0000ff">LeCroy</div>
<div style="position:absolute;left:6px;top:597px;width:47px;height:2px;background:#0000ff"></div>
<div class="t" style="left:679px;top:587px">23.10.2006 5:44:44</div>

</body></html>
